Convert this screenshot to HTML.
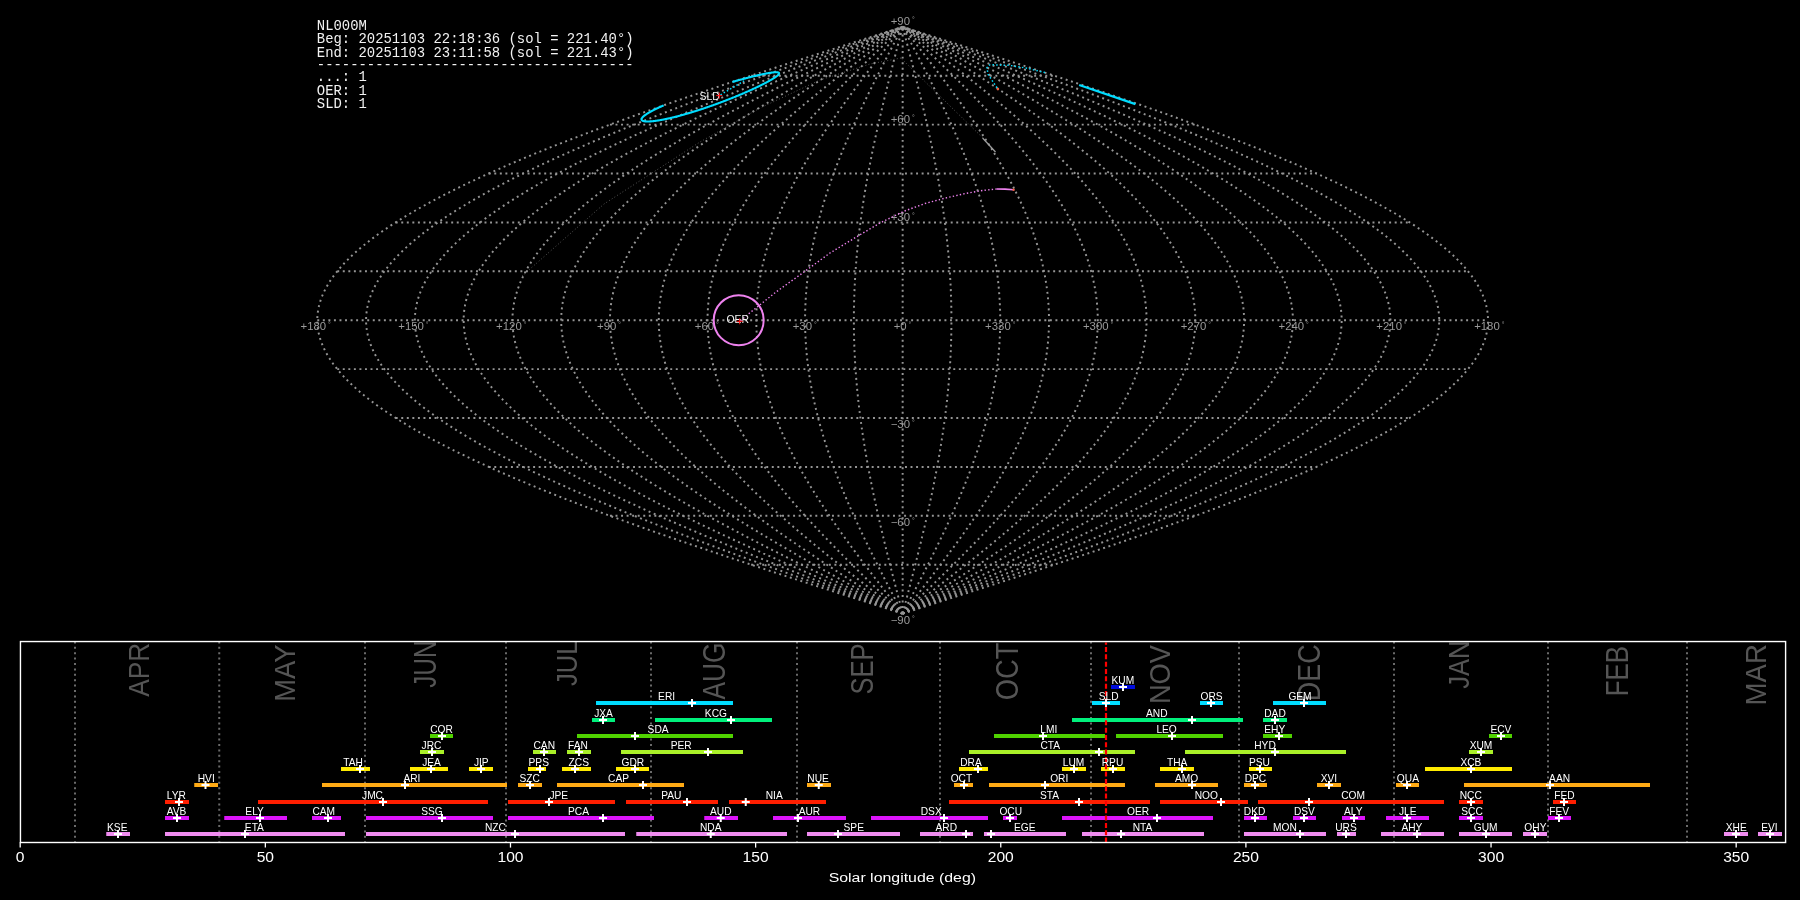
<!DOCTYPE html><html><head><meta charset="utf-8"><style>html,body{margin:0;padding:0;background:#000;width:1800px;height:900px;overflow:hidden}svg{display:block;will-change:transform}</style></head><body>
<svg width="1800" height="900" viewBox="0 0 1800 900">
<rect width="1800" height="900" fill="#000"/>
<g stroke="#959595" stroke-width="1.95" fill="none" stroke-dasharray="1.95 3.6">
<polyline points="902.65,613.60 907.76,611.97 912.87,610.34 917.97,608.71 923.08,607.08 928.18,605.45 933.29,603.82 938.39,602.19 943.48,600.56 948.58,598.93 953.67,597.30 958.75,595.67 963.84,594.04 968.91,592.41 973.99,590.78 979.05,589.15 984.12,587.52 989.17,585.89 994.22,584.26 999.26,582.63 1004.30,581.00 1009.32,579.37 1014.34,577.74 1019.35,576.11 1024.35,574.48 1029.35,572.85 1034.33,571.22 1039.30,569.59 1044.26,567.96 1049.21,566.33 1054.15,564.70 1059.08,563.07 1064.00,561.44 1068.90,559.81 1073.79,558.18 1078.67,556.55 1083.54,554.92 1088.39,553.29 1093.22,551.66 1098.05,550.03 1102.85,548.40 1107.65,546.77 1112.42,545.14 1117.19,543.51 1121.93,541.88 1126.66,540.25 1131.37,538.62 1136.06,536.99 1140.74,535.36 1145.39,533.73 1150.03,532.10 1154.65,530.47 1159.25,528.84 1163.84,527.21 1168.40,525.58 1172.94,523.95 1177.46,522.32 1181.96,520.69 1186.44,519.06 1190.90,517.43 1195.33,515.80 1199.74,514.17 1204.13,512.54 1208.50,510.91 1212.84,509.28 1217.16,507.65 1221.46,506.02 1225.73,504.39 1229.98,502.76 1234.20,501.13 1238.40,499.50 1242.57,497.87 1246.72,496.24 1250.84,494.61 1254.93,492.98 1258.99,491.35 1263.03,489.72 1267.05,488.09 1271.03,486.46 1274.98,484.83 1278.91,483.20 1282.81,481.57 1286.68,479.94 1290.52,478.31 1294.33,476.68 1298.11,475.05 1301.86,473.42 1305.59,471.79 1309.28,470.16 1312.93,468.53 1316.56,466.90 1320.16,465.27 1323.72,463.64 1327.26,462.01 1330.76,460.38 1334.22,458.75 1337.66,457.12 1341.06,455.49 1344.43,453.86 1347.76,452.23 1351.06,450.60 1354.33,448.97 1357.56,447.34 1360.76,445.71 1363.92,444.08 1367.05,442.45 1370.14,440.82 1373.20,439.19 1376.22,437.56 1379.20,435.93 1382.15,434.30 1385.06,432.67 1387.94,431.04 1390.77,429.41 1393.57,427.78 1396.34,426.15 1399.06,424.52 1401.75,422.89 1404.40,421.26 1407.01,419.63 1409.59,418.00 1412.12,416.37 1414.62,414.74 1417.07,413.11 1419.49,411.48 1421.87,409.85 1424.21,408.22 1426.51,406.59 1428.77,404.96 1430.99,403.33 1433.17,401.70 1435.30,400.07 1437.40,398.44 1439.46,396.81 1441.48,395.18 1443.45,393.55 1445.39,391.92 1447.28,390.29 1449.13,388.66 1450.94,387.03 1452.71,385.40 1454.43,383.77 1456.12,382.14 1457.76,380.51 1459.36,378.88 1460.92,377.25 1462.43,375.62 1463.90,373.99 1465.33,372.36 1466.72,370.73 1468.06,369.10 1469.36,367.47 1470.62,365.84 1471.84,364.21 1473.01,362.58 1474.13,360.95 1475.22,359.32 1476.26,357.69 1477.26,356.06 1478.21,354.43 1479.12,352.80 1479.98,351.17 1480.80,349.54 1481.58,347.91 1482.31,346.28 1483.00,344.65 1483.65,343.02 1484.25,341.39 1484.80,339.76 1485.32,338.13 1485.78,336.50 1486.21,334.87 1486.58,333.24 1486.92,331.61 1487.21,329.98 1487.45,328.35 1487.65,326.72 1487.81,325.09 1487.92,323.46 1487.99,321.83 1488.01,320.20 1487.99,318.57 1487.92,316.94 1487.81,315.31 1487.65,313.68 1487.45,312.05 1487.21,310.42 1486.92,308.79 1486.58,307.16 1486.21,305.53 1485.78,303.90 1485.32,302.27 1484.80,300.64 1484.25,299.01 1483.65,297.38 1483.00,295.75 1482.31,294.12 1481.58,292.49 1480.80,290.86 1479.98,289.23 1479.12,287.60 1478.21,285.97 1477.26,284.34 1476.26,282.71 1475.22,281.08 1474.13,279.45 1473.01,277.82 1471.84,276.19 1470.62,274.56 1469.36,272.93 1468.06,271.30 1466.72,269.67 1465.33,268.04 1463.90,266.41 1462.43,264.78 1460.92,263.15 1459.36,261.52 1457.76,259.89 1456.12,258.26 1454.43,256.63 1452.71,255.00 1450.94,253.37 1449.13,251.74 1447.28,250.11 1445.39,248.48 1443.45,246.85 1441.48,245.22 1439.46,243.59 1437.40,241.96 1435.30,240.33 1433.17,238.70 1430.99,237.07 1428.77,235.44 1426.51,233.81 1424.21,232.18 1421.87,230.55 1419.49,228.92 1417.07,227.29 1414.62,225.66 1412.12,224.03 1409.59,222.40 1407.01,220.77 1404.40,219.14 1401.75,217.51 1399.06,215.88 1396.34,214.25 1393.57,212.62 1390.77,210.99 1387.94,209.36 1385.06,207.73 1382.15,206.10 1379.20,204.47 1376.22,202.84 1373.20,201.21 1370.14,199.58 1367.05,197.95 1363.92,196.32 1360.76,194.69 1357.56,193.06 1354.33,191.43 1351.06,189.80 1347.76,188.17 1344.43,186.54 1341.06,184.91 1337.66,183.28 1334.22,181.65 1330.76,180.02 1327.26,178.39 1323.72,176.76 1320.16,175.13 1316.56,173.50 1312.93,171.87 1309.28,170.24 1305.59,168.61 1301.86,166.98 1298.11,165.35 1294.33,163.72 1290.52,162.09 1286.68,160.46 1282.81,158.83 1278.91,157.20 1274.98,155.57 1271.03,153.94 1267.05,152.31 1263.03,150.68 1258.99,149.05 1254.93,147.42 1250.84,145.79 1246.72,144.16 1242.57,142.53 1238.40,140.90 1234.20,139.27 1229.98,137.64 1225.73,136.01 1221.46,134.38 1217.16,132.75 1212.84,131.12 1208.50,129.49 1204.13,127.86 1199.74,126.23 1195.33,124.60 1190.90,122.97 1186.44,121.34 1181.96,119.71 1177.46,118.08 1172.94,116.45 1168.40,114.82 1163.84,113.19 1159.25,111.56 1154.65,109.93 1150.03,108.30 1145.39,106.67 1140.74,105.04 1136.06,103.41 1131.37,101.78 1126.66,100.15 1121.93,98.52 1117.19,96.89 1112.42,95.26 1107.65,93.63 1102.85,92.00 1098.05,90.37 1093.22,88.74 1088.39,87.11 1083.54,85.48 1078.67,83.85 1073.79,82.22 1068.90,80.59 1064.00,78.96 1059.08,77.33 1054.15,75.70 1049.21,74.07 1044.26,72.44 1039.30,70.81 1034.33,69.18 1029.35,67.55 1024.35,65.92 1019.35,64.29 1014.34,62.66 1009.32,61.03 1004.30,59.40 999.26,57.77 994.22,56.14 989.17,54.51 984.12,52.88 979.05,51.25 973.99,49.62 968.91,47.99 963.84,46.36 958.75,44.73 953.67,43.10 948.58,41.47 943.48,39.84 938.39,38.21 933.29,36.58 928.18,34.95 923.08,33.32 917.97,31.69 912.87,30.06 907.76,28.43 902.65,26.80"/>
<polyline points="902.65,613.60 907.33,611.97 912.01,610.34 916.70,608.71 921.38,607.08 926.06,605.45 930.73,603.82 935.41,602.19 940.08,600.56 944.75,598.93 949.42,597.30 954.08,595.67 958.74,594.04 963.39,592.41 968.04,590.78 972.69,589.15 977.33,587.52 981.96,585.89 986.59,584.26 991.21,582.63 995.83,581.00 1000.43,579.37 1005.03,577.74 1009.63,576.11 1014.21,574.48 1018.79,572.85 1023.35,571.22 1027.91,569.59 1032.46,567.96 1037.00,566.33 1041.53,564.70 1046.04,563.07 1050.55,561.44 1055.05,559.81 1059.53,558.18 1064.00,556.55 1068.46,554.92 1072.91,553.29 1077.34,551.66 1081.76,550.03 1086.17,548.40 1090.56,546.77 1094.94,545.14 1099.31,543.51 1103.66,541.88 1107.99,540.25 1112.31,538.62 1116.61,536.99 1120.90,535.36 1125.17,533.73 1129.42,532.10 1133.65,530.47 1137.87,528.84 1142.07,527.21 1146.25,525.58 1150.42,523.95 1154.56,522.32 1158.68,520.69 1162.79,519.06 1166.87,517.43 1170.94,515.80 1174.98,514.17 1179.01,512.54 1183.01,510.91 1186.99,509.28 1190.95,507.65 1194.89,506.02 1198.81,504.39 1202.70,502.76 1206.57,501.13 1210.42,499.50 1214.24,497.87 1218.04,496.24 1221.82,494.61 1225.57,492.98 1229.30,491.35 1233.00,489.72 1236.68,488.09 1240.33,486.46 1243.96,484.83 1247.56,483.20 1251.13,481.57 1254.68,479.94 1258.20,478.31 1261.69,476.68 1265.16,475.05 1268.60,473.42 1272.01,471.79 1275.39,470.16 1278.74,468.53 1282.07,466.90 1285.37,465.27 1288.63,463.64 1291.87,462.01 1295.08,460.38 1298.26,458.75 1301.41,457.12 1304.52,455.49 1307.61,453.86 1310.67,452.23 1313.69,450.60 1316.69,448.97 1319.65,447.34 1322.58,445.71 1325.48,444.08 1328.35,442.45 1331.18,440.82 1333.98,439.19 1336.75,437.56 1339.49,435.93 1342.19,434.30 1344.86,432.67 1347.49,431.04 1350.10,429.41 1352.66,427.78 1355.20,426.15 1357.70,424.52 1360.16,422.89 1362.59,421.26 1364.98,419.63 1367.34,418.00 1369.67,416.37 1371.95,414.74 1374.21,413.11 1376.42,411.48 1378.60,409.85 1380.75,408.22 1382.85,406.59 1384.92,404.96 1386.96,403.33 1388.96,401.70 1390.92,400.07 1392.84,398.44 1394.73,396.81 1396.57,395.18 1398.39,393.55 1400.16,391.92 1401.89,390.29 1403.59,388.66 1405.25,387.03 1406.87,385.40 1408.45,383.77 1410.00,382.14 1411.50,380.51 1412.97,378.88 1414.40,377.25 1415.78,375.62 1417.13,373.99 1418.44,372.36 1419.71,370.73 1420.95,369.10 1422.14,367.47 1423.29,365.84 1424.40,364.21 1425.48,362.58 1426.51,360.95 1427.50,359.32 1428.46,357.69 1429.37,356.06 1430.24,354.43 1431.08,352.80 1431.87,351.17 1432.62,349.54 1433.34,347.91 1434.01,346.28 1434.64,344.65 1435.23,343.02 1435.78,341.39 1436.29,339.76 1436.76,338.13 1437.19,336.50 1437.58,334.87 1437.92,333.24 1438.23,331.61 1438.49,329.98 1438.72,328.35 1438.90,326.72 1439.05,325.09 1439.15,323.46 1439.21,321.83 1439.23,320.20 1439.21,318.57 1439.15,316.94 1439.05,315.31 1438.90,313.68 1438.72,312.05 1438.49,310.42 1438.23,308.79 1437.92,307.16 1437.58,305.53 1437.19,303.90 1436.76,302.27 1436.29,300.64 1435.78,299.01 1435.23,297.38 1434.64,295.75 1434.01,294.12 1433.34,292.49 1432.62,290.86 1431.87,289.23 1431.08,287.60 1430.24,285.97 1429.37,284.34 1428.46,282.71 1427.50,281.08 1426.51,279.45 1425.48,277.82 1424.40,276.19 1423.29,274.56 1422.14,272.93 1420.95,271.30 1419.71,269.67 1418.44,268.04 1417.13,266.41 1415.78,264.78 1414.40,263.15 1412.97,261.52 1411.50,259.89 1410.00,258.26 1408.45,256.63 1406.87,255.00 1405.25,253.37 1403.59,251.74 1401.89,250.11 1400.16,248.48 1398.39,246.85 1396.57,245.22 1394.73,243.59 1392.84,241.96 1390.92,240.33 1388.96,238.70 1386.96,237.07 1384.92,235.44 1382.85,233.81 1380.75,232.18 1378.60,230.55 1376.42,228.92 1374.21,227.29 1371.95,225.66 1369.67,224.03 1367.34,222.40 1364.98,220.77 1362.59,219.14 1360.16,217.51 1357.70,215.88 1355.20,214.25 1352.66,212.62 1350.10,210.99 1347.49,209.36 1344.86,207.73 1342.19,206.10 1339.49,204.47 1336.75,202.84 1333.98,201.21 1331.18,199.58 1328.35,197.95 1325.48,196.32 1322.58,194.69 1319.65,193.06 1316.69,191.43 1313.69,189.80 1310.67,188.17 1307.61,186.54 1304.52,184.91 1301.41,183.28 1298.26,181.65 1295.08,180.02 1291.87,178.39 1288.63,176.76 1285.37,175.13 1282.07,173.50 1278.74,171.87 1275.39,170.24 1272.01,168.61 1268.60,166.98 1265.16,165.35 1261.69,163.72 1258.20,162.09 1254.68,160.46 1251.13,158.83 1247.56,157.20 1243.96,155.57 1240.33,153.94 1236.68,152.31 1233.00,150.68 1229.30,149.05 1225.57,147.42 1221.82,145.79 1218.04,144.16 1214.24,142.53 1210.42,140.90 1206.57,139.27 1202.70,137.64 1198.81,136.01 1194.89,134.38 1190.95,132.75 1186.99,131.12 1183.01,129.49 1179.01,127.86 1174.98,126.23 1170.94,124.60 1166.87,122.97 1162.79,121.34 1158.68,119.71 1154.56,118.08 1150.42,116.45 1146.25,114.82 1142.07,113.19 1137.87,111.56 1133.65,109.93 1129.42,108.30 1125.17,106.67 1120.90,105.04 1116.61,103.41 1112.31,101.78 1107.99,100.15 1103.66,98.52 1099.31,96.89 1094.94,95.26 1090.56,93.63 1086.17,92.00 1081.76,90.37 1077.34,88.74 1072.91,87.11 1068.46,85.48 1064.00,83.85 1059.53,82.22 1055.05,80.59 1050.55,78.96 1046.04,77.33 1041.53,75.70 1037.00,74.07 1032.46,72.44 1027.91,70.81 1023.35,69.18 1018.79,67.55 1014.21,65.92 1009.63,64.29 1005.03,62.66 1000.43,61.03 995.83,59.40 991.21,57.77 986.59,56.14 981.96,54.51 977.33,52.88 972.69,51.25 968.04,49.62 963.39,47.99 958.74,46.36 954.08,44.73 949.42,43.10 944.75,41.47 940.08,39.84 935.41,38.21 930.73,36.58 926.06,34.95 921.38,33.32 916.70,31.69 912.01,30.06 907.33,28.43 902.65,26.80"/>
<polyline points="902.65,613.60 906.91,611.97 911.16,610.34 915.42,608.71 919.67,607.08 923.93,605.45 928.18,603.82 932.43,602.19 936.68,600.56 940.92,598.93 945.16,597.30 949.40,595.67 953.64,594.04 957.87,592.41 962.10,590.78 966.32,589.15 970.54,587.52 974.75,585.89 978.96,584.26 983.16,582.63 987.36,581.00 991.54,579.37 995.73,577.74 999.90,576.11 1004.07,574.48 1008.23,572.85 1012.38,571.22 1016.52,569.59 1020.66,567.96 1024.79,566.33 1028.90,564.70 1033.01,563.07 1037.11,561.44 1041.19,559.81 1045.27,558.18 1049.33,556.55 1053.39,554.92 1057.43,553.29 1061.46,551.66 1065.48,550.03 1069.49,548.40 1073.48,546.77 1077.46,545.14 1081.43,543.51 1085.38,541.88 1089.32,540.25 1093.25,538.62 1097.16,536.99 1101.06,535.36 1104.94,533.73 1108.80,532.10 1112.65,530.47 1116.49,528.84 1120.31,527.21 1124.11,525.58 1127.89,523.95 1131.66,522.32 1135.41,520.69 1139.14,519.06 1142.85,517.43 1146.55,515.80 1150.23,514.17 1153.89,512.54 1157.52,510.91 1161.14,509.28 1164.74,507.65 1168.32,506.02 1171.88,504.39 1175.42,502.76 1178.94,501.13 1182.44,499.50 1185.92,497.87 1189.37,496.24 1192.80,494.61 1196.22,492.98 1199.60,491.35 1202.97,489.72 1206.31,488.09 1209.63,486.46 1212.93,484.83 1216.20,483.20 1219.45,481.57 1222.68,479.94 1225.88,478.31 1229.05,476.68 1232.20,475.05 1235.33,473.42 1238.43,471.79 1241.50,470.16 1244.55,468.53 1247.58,466.90 1250.57,465.27 1253.54,463.64 1256.49,462.01 1259.40,460.38 1262.29,458.75 1265.16,457.12 1267.99,455.49 1270.80,453.86 1273.58,452.23 1276.33,450.60 1279.05,448.97 1281.74,447.34 1284.41,445.71 1287.04,444.08 1289.65,442.45 1292.22,440.82 1294.77,439.19 1297.29,437.56 1299.78,435.93 1302.23,434.30 1304.66,432.67 1307.05,431.04 1309.42,429.41 1311.75,427.78 1314.06,426.15 1316.33,424.52 1318.57,422.89 1320.78,421.26 1322.95,419.63 1325.10,418.00 1327.21,416.37 1329.29,414.74 1331.34,413.11 1333.35,411.48 1335.33,409.85 1337.28,408.22 1339.20,406.59 1341.08,404.96 1342.93,403.33 1344.75,401.70 1346.53,400.07 1348.28,398.44 1349.99,396.81 1351.67,395.18 1353.32,393.55 1354.93,391.92 1356.51,390.29 1358.05,388.66 1359.56,387.03 1361.03,385.40 1362.47,383.77 1363.87,382.14 1365.24,380.51 1366.58,378.88 1367.87,377.25 1369.14,375.62 1370.36,373.99 1371.55,372.36 1372.71,370.73 1373.83,369.10 1374.91,367.47 1375.96,365.84 1376.97,364.21 1377.95,362.58 1378.89,360.95 1379.79,359.32 1380.66,357.69 1381.49,356.06 1382.28,354.43 1383.04,352.80 1383.76,351.17 1384.44,349.54 1385.09,347.91 1385.70,346.28 1386.28,344.65 1386.81,343.02 1387.31,341.39 1387.78,339.76 1388.20,338.13 1388.59,336.50 1388.95,334.87 1389.26,333.24 1389.54,331.61 1389.78,329.98 1389.99,328.35 1390.15,326.72 1390.28,325.09 1390.38,323.46 1390.43,321.83 1390.45,320.20 1390.43,318.57 1390.38,316.94 1390.28,315.31 1390.15,313.68 1389.99,312.05 1389.78,310.42 1389.54,308.79 1389.26,307.16 1388.95,305.53 1388.59,303.90 1388.20,302.27 1387.78,300.64 1387.31,299.01 1386.81,297.38 1386.28,295.75 1385.70,294.12 1385.09,292.49 1384.44,290.86 1383.76,289.23 1383.04,287.60 1382.28,285.97 1381.49,284.34 1380.66,282.71 1379.79,281.08 1378.89,279.45 1377.95,277.82 1376.97,276.19 1375.96,274.56 1374.91,272.93 1373.83,271.30 1372.71,269.67 1371.55,268.04 1370.36,266.41 1369.14,264.78 1367.87,263.15 1366.58,261.52 1365.24,259.89 1363.87,258.26 1362.47,256.63 1361.03,255.00 1359.56,253.37 1358.05,251.74 1356.51,250.11 1354.93,248.48 1353.32,246.85 1351.67,245.22 1349.99,243.59 1348.28,241.96 1346.53,240.33 1344.75,238.70 1342.93,237.07 1341.08,235.44 1339.20,233.81 1337.28,232.18 1335.33,230.55 1333.35,228.92 1331.34,227.29 1329.29,225.66 1327.21,224.03 1325.10,222.40 1322.95,220.77 1320.78,219.14 1318.57,217.51 1316.33,215.88 1314.06,214.25 1311.75,212.62 1309.42,210.99 1307.05,209.36 1304.66,207.73 1302.23,206.10 1299.78,204.47 1297.29,202.84 1294.77,201.21 1292.22,199.58 1289.65,197.95 1287.04,196.32 1284.41,194.69 1281.74,193.06 1279.05,191.43 1276.33,189.80 1273.58,188.17 1270.80,186.54 1267.99,184.91 1265.16,183.28 1262.29,181.65 1259.40,180.02 1256.49,178.39 1253.54,176.76 1250.57,175.13 1247.58,173.50 1244.55,171.87 1241.50,170.24 1238.43,168.61 1235.33,166.98 1232.20,165.35 1229.05,163.72 1225.88,162.09 1222.68,160.46 1219.45,158.83 1216.20,157.20 1212.93,155.57 1209.63,153.94 1206.31,152.31 1202.97,150.68 1199.60,149.05 1196.22,147.42 1192.80,145.79 1189.37,144.16 1185.92,142.53 1182.44,140.90 1178.94,139.27 1175.42,137.64 1171.88,136.01 1168.32,134.38 1164.74,132.75 1161.14,131.12 1157.52,129.49 1153.89,127.86 1150.23,126.23 1146.55,124.60 1142.85,122.97 1139.14,121.34 1135.41,119.71 1131.66,118.08 1127.89,116.45 1124.11,114.82 1120.31,113.19 1116.49,111.56 1112.65,109.93 1108.80,108.30 1104.94,106.67 1101.06,105.04 1097.16,103.41 1093.25,101.78 1089.32,100.15 1085.38,98.52 1081.43,96.89 1077.46,95.26 1073.48,93.63 1069.49,92.00 1065.48,90.37 1061.46,88.74 1057.43,87.11 1053.39,85.48 1049.33,83.85 1045.27,82.22 1041.19,80.59 1037.11,78.96 1033.01,77.33 1028.90,75.70 1024.79,74.07 1020.66,72.44 1016.52,70.81 1012.38,69.18 1008.23,67.55 1004.07,65.92 999.90,64.29 995.73,62.66 991.54,61.03 987.36,59.40 983.16,57.77 978.96,56.14 974.75,54.51 970.54,52.88 966.32,51.25 962.10,49.62 957.87,47.99 953.64,46.36 949.40,44.73 945.16,43.10 940.92,41.47 936.68,39.84 932.43,38.21 928.18,36.58 923.93,34.95 919.67,33.32 915.42,31.69 911.16,30.06 906.91,28.43 902.65,26.80"/>
<polyline points="902.65,613.60 906.48,611.97 910.31,610.34 914.14,608.71 917.97,607.08 921.80,605.45 925.63,603.82 929.45,602.19 933.27,600.56 937.10,598.93 940.91,597.30 944.73,595.67 948.54,594.04 952.35,592.41 956.15,590.78 959.95,589.15 963.75,587.52 967.54,585.89 971.33,584.26 975.11,582.63 978.89,581.00 982.66,579.37 986.42,577.74 990.18,576.11 993.93,574.48 997.67,572.85 1001.41,571.22 1005.14,569.59 1008.86,567.96 1012.57,566.33 1016.28,564.70 1019.97,563.07 1023.66,561.44 1027.34,559.81 1031.01,558.18 1034.67,556.55 1038.31,554.92 1041.95,553.29 1045.58,551.66 1049.20,550.03 1052.80,548.40 1056.40,546.77 1059.98,545.14 1063.55,543.51 1067.11,541.88 1070.66,540.25 1074.19,538.62 1077.71,536.99 1081.22,535.36 1084.71,533.73 1088.19,532.10 1091.65,530.47 1095.10,528.84 1098.54,527.21 1101.96,525.58 1105.37,523.95 1108.76,522.32 1112.13,520.69 1115.49,519.06 1118.83,517.43 1122.16,515.80 1125.47,514.17 1128.76,512.54 1132.04,510.91 1135.30,509.28 1138.54,507.65 1141.76,506.02 1144.96,504.39 1148.15,502.76 1151.31,501.13 1154.46,499.50 1157.59,497.87 1160.70,496.24 1163.79,494.61 1166.86,492.98 1169.91,491.35 1172.94,489.72 1175.95,488.09 1178.93,486.46 1181.90,484.83 1184.85,483.20 1187.77,481.57 1190.67,479.94 1193.55,478.31 1196.41,476.68 1199.25,475.05 1202.06,473.42 1204.85,471.79 1207.62,470.16 1210.36,468.53 1213.08,466.90 1215.78,465.27 1218.45,463.64 1221.10,462.01 1223.73,460.38 1226.33,458.75 1228.91,457.12 1231.46,455.49 1233.98,453.86 1236.48,452.23 1238.96,450.60 1241.41,448.97 1243.83,447.34 1246.23,445.71 1248.60,444.08 1250.95,442.45 1253.27,440.82 1255.56,439.19 1257.82,437.56 1260.06,435.93 1262.27,434.30 1264.46,432.67 1266.61,431.04 1268.74,429.41 1270.84,427.78 1272.92,426.15 1274.96,424.52 1276.98,422.89 1278.96,421.26 1280.92,419.63 1282.85,418.00 1284.75,416.37 1286.63,414.74 1288.47,413.11 1290.28,411.48 1292.07,409.85 1293.82,408.22 1295.54,406.59 1297.24,404.96 1298.90,403.33 1300.54,401.70 1302.14,400.07 1303.71,398.44 1305.26,396.81 1306.77,395.18 1308.25,393.55 1309.70,391.92 1311.12,390.29 1312.51,388.66 1313.87,387.03 1315.19,385.40 1316.49,383.77 1317.75,382.14 1318.98,380.51 1320.18,378.88 1321.35,377.25 1322.49,375.62 1323.59,373.99 1324.66,372.36 1325.70,370.73 1326.71,369.10 1327.69,367.47 1328.63,365.84 1329.54,364.21 1330.42,362.58 1331.26,360.95 1332.08,359.32 1332.86,357.69 1333.60,356.06 1334.32,354.43 1335.00,352.80 1335.65,351.17 1336.26,349.54 1336.85,347.91 1337.40,346.28 1337.91,344.65 1338.40,343.02 1338.85,341.39 1339.27,339.76 1339.65,338.13 1340.00,336.50 1340.32,334.87 1340.60,333.24 1340.85,331.61 1341.07,329.98 1341.25,328.35 1341.40,326.72 1341.52,325.09 1341.60,323.46 1341.65,321.83 1341.67,320.20 1341.65,318.57 1341.60,316.94 1341.52,315.31 1341.40,313.68 1341.25,312.05 1341.07,310.42 1340.85,308.79 1340.60,307.16 1340.32,305.53 1340.00,303.90 1339.65,302.27 1339.27,300.64 1338.85,299.01 1338.40,297.38 1337.91,295.75 1337.40,294.12 1336.85,292.49 1336.26,290.86 1335.65,289.23 1335.00,287.60 1334.32,285.97 1333.60,284.34 1332.86,282.71 1332.08,281.08 1331.26,279.45 1330.42,277.82 1329.54,276.19 1328.63,274.56 1327.69,272.93 1326.71,271.30 1325.70,269.67 1324.66,268.04 1323.59,266.41 1322.49,264.78 1321.35,263.15 1320.18,261.52 1318.98,259.89 1317.75,258.26 1316.49,256.63 1315.19,255.00 1313.87,253.37 1312.51,251.74 1311.12,250.11 1309.70,248.48 1308.25,246.85 1306.77,245.22 1305.26,243.59 1303.71,241.96 1302.14,240.33 1300.54,238.70 1298.90,237.07 1297.24,235.44 1295.54,233.81 1293.82,232.18 1292.07,230.55 1290.28,228.92 1288.47,227.29 1286.63,225.66 1284.75,224.03 1282.85,222.40 1280.92,220.77 1278.96,219.14 1276.98,217.51 1274.96,215.88 1272.92,214.25 1270.84,212.62 1268.74,210.99 1266.61,209.36 1264.46,207.73 1262.27,206.10 1260.06,204.47 1257.82,202.84 1255.56,201.21 1253.27,199.58 1250.95,197.95 1248.60,196.32 1246.23,194.69 1243.83,193.06 1241.41,191.43 1238.96,189.80 1236.48,188.17 1233.98,186.54 1231.46,184.91 1228.91,183.28 1226.33,181.65 1223.73,180.02 1221.10,178.39 1218.45,176.76 1215.78,175.13 1213.08,173.50 1210.36,171.87 1207.62,170.24 1204.85,168.61 1202.06,166.98 1199.25,165.35 1196.41,163.72 1193.55,162.09 1190.67,160.46 1187.77,158.83 1184.85,157.20 1181.90,155.57 1178.93,153.94 1175.95,152.31 1172.94,150.68 1169.91,149.05 1166.86,147.42 1163.79,145.79 1160.70,144.16 1157.59,142.53 1154.46,140.90 1151.31,139.27 1148.15,137.64 1144.96,136.01 1141.76,134.38 1138.54,132.75 1135.30,131.12 1132.04,129.49 1128.76,127.86 1125.47,126.23 1122.16,124.60 1118.83,122.97 1115.49,121.34 1112.13,119.71 1108.76,118.08 1105.37,116.45 1101.96,114.82 1098.54,113.19 1095.10,111.56 1091.65,109.93 1088.19,108.30 1084.71,106.67 1081.22,105.04 1077.71,103.41 1074.19,101.78 1070.66,100.15 1067.11,98.52 1063.55,96.89 1059.98,95.26 1056.40,93.63 1052.80,92.00 1049.20,90.37 1045.58,88.74 1041.95,87.11 1038.31,85.48 1034.67,83.85 1031.01,82.22 1027.34,80.59 1023.66,78.96 1019.97,77.33 1016.28,75.70 1012.57,74.07 1008.86,72.44 1005.14,70.81 1001.41,69.18 997.67,67.55 993.93,65.92 990.18,64.29 986.42,62.66 982.66,61.03 978.89,59.40 975.11,57.77 971.33,56.14 967.54,54.51 963.75,52.88 959.95,51.25 956.15,49.62 952.35,47.99 948.54,46.36 944.73,44.73 940.91,43.10 937.10,41.47 933.27,39.84 929.45,38.21 925.63,36.58 921.80,34.95 917.97,33.32 914.14,31.69 910.31,30.06 906.48,28.43 902.65,26.80"/>
<polyline points="902.65,613.60 906.06,611.97 909.46,610.34 912.87,608.71 916.27,607.08 919.67,605.45 923.07,603.82 926.47,602.19 929.87,600.56 933.27,598.93 936.66,597.30 940.05,595.67 943.44,594.04 946.83,592.41 950.21,590.78 953.59,589.15 956.96,587.52 960.33,585.89 963.70,584.26 967.06,582.63 970.41,581.00 973.77,579.37 977.11,577.74 980.45,576.11 983.79,574.48 987.11,572.85 990.43,571.22 993.75,569.59 997.06,567.96 1000.36,566.33 1003.65,564.70 1006.94,563.07 1010.21,561.44 1013.48,559.81 1016.75,558.18 1020.00,556.55 1023.24,554.92 1026.47,553.29 1029.70,551.66 1032.91,550.03 1036.12,548.40 1039.31,546.77 1042.50,545.14 1045.67,543.51 1048.84,541.88 1051.99,540.25 1055.13,538.62 1058.26,536.99 1061.37,535.36 1064.48,533.73 1067.57,532.10 1070.65,530.47 1073.72,528.84 1076.77,527.21 1079.82,525.58 1082.84,523.95 1085.86,522.32 1088.86,520.69 1091.84,519.06 1094.81,517.43 1097.77,515.80 1100.71,514.17 1103.64,512.54 1106.55,510.91 1109.45,509.28 1112.33,507.65 1115.19,506.02 1118.04,504.39 1120.87,502.76 1123.68,501.13 1126.48,499.50 1129.26,497.87 1132.03,496.24 1134.77,494.61 1137.50,492.98 1140.21,491.35 1142.91,489.72 1145.58,488.09 1148.24,486.46 1150.87,484.83 1153.49,483.20 1156.09,481.57 1158.67,479.94 1161.23,478.31 1163.77,476.68 1166.29,475.05 1168.79,473.42 1171.27,471.79 1173.73,470.16 1176.17,468.53 1178.59,466.90 1180.99,465.27 1183.37,463.64 1185.72,462.01 1188.05,460.38 1190.37,458.75 1192.65,457.12 1194.92,455.49 1197.17,453.86 1199.39,452.23 1201.59,450.60 1203.77,448.97 1205.92,447.34 1208.06,445.71 1210.16,444.08 1212.25,442.45 1214.31,440.82 1216.35,439.19 1218.36,437.56 1220.35,435.93 1222.32,434.30 1224.26,432.67 1226.17,431.04 1228.07,429.41 1229.93,427.78 1231.78,426.15 1233.59,424.52 1235.38,422.89 1237.15,421.26 1238.89,419.63 1240.61,418.00 1242.30,416.37 1243.96,414.74 1245.60,413.11 1247.21,411.48 1248.80,409.85 1250.36,408.22 1251.89,406.59 1253.40,404.96 1254.87,403.33 1256.33,401.70 1257.75,400.07 1259.15,398.44 1260.52,396.81 1261.87,395.18 1263.18,393.55 1264.47,391.92 1265.74,390.29 1266.97,388.66 1268.18,387.03 1269.36,385.40 1270.51,383.77 1271.63,382.14 1272.72,380.51 1273.79,378.88 1274.83,377.25 1275.84,375.62 1276.82,373.99 1277.77,372.36 1278.70,370.73 1279.59,369.10 1280.46,367.47 1281.30,365.84 1282.11,364.21 1282.89,362.58 1283.64,360.95 1284.36,359.32 1285.06,357.69 1285.72,356.06 1286.36,354.43 1286.96,352.80 1287.54,351.17 1288.09,349.54 1288.60,347.91 1289.09,346.28 1289.55,344.65 1289.98,343.02 1290.38,341.39 1290.75,339.76 1291.09,338.13 1291.41,336.50 1291.69,334.87 1291.94,333.24 1292.16,331.61 1292.36,329.98 1292.52,328.35 1292.65,326.72 1292.76,325.09 1292.83,323.46 1292.88,321.83 1292.89,320.20 1292.88,318.57 1292.83,316.94 1292.76,315.31 1292.65,313.68 1292.52,312.05 1292.36,310.42 1292.16,308.79 1291.94,307.16 1291.69,305.53 1291.41,303.90 1291.09,302.27 1290.75,300.64 1290.38,299.01 1289.98,297.38 1289.55,295.75 1289.09,294.12 1288.60,292.49 1288.09,290.86 1287.54,289.23 1286.96,287.60 1286.36,285.97 1285.72,284.34 1285.06,282.71 1284.36,281.08 1283.64,279.45 1282.89,277.82 1282.11,276.19 1281.30,274.56 1280.46,272.93 1279.59,271.30 1278.70,269.67 1277.77,268.04 1276.82,266.41 1275.84,264.78 1274.83,263.15 1273.79,261.52 1272.72,259.89 1271.63,258.26 1270.51,256.63 1269.36,255.00 1268.18,253.37 1266.97,251.74 1265.74,250.11 1264.47,248.48 1263.18,246.85 1261.87,245.22 1260.52,243.59 1259.15,241.96 1257.75,240.33 1256.33,238.70 1254.87,237.07 1253.40,235.44 1251.89,233.81 1250.36,232.18 1248.80,230.55 1247.21,228.92 1245.60,227.29 1243.96,225.66 1242.30,224.03 1240.61,222.40 1238.89,220.77 1237.15,219.14 1235.38,217.51 1233.59,215.88 1231.78,214.25 1229.93,212.62 1228.07,210.99 1226.17,209.36 1224.26,207.73 1222.32,206.10 1220.35,204.47 1218.36,202.84 1216.35,201.21 1214.31,199.58 1212.25,197.95 1210.16,196.32 1208.06,194.69 1205.92,193.06 1203.77,191.43 1201.59,189.80 1199.39,188.17 1197.17,186.54 1194.92,184.91 1192.65,183.28 1190.37,181.65 1188.05,180.02 1185.72,178.39 1183.37,176.76 1180.99,175.13 1178.59,173.50 1176.17,171.87 1173.73,170.24 1171.27,168.61 1168.79,166.98 1166.29,165.35 1163.77,163.72 1161.23,162.09 1158.67,160.46 1156.09,158.83 1153.49,157.20 1150.87,155.57 1148.24,153.94 1145.58,152.31 1142.91,150.68 1140.21,149.05 1137.50,147.42 1134.77,145.79 1132.03,144.16 1129.26,142.53 1126.48,140.90 1123.68,139.27 1120.87,137.64 1118.04,136.01 1115.19,134.38 1112.33,132.75 1109.45,131.12 1106.55,129.49 1103.64,127.86 1100.71,126.23 1097.77,124.60 1094.81,122.97 1091.84,121.34 1088.86,119.71 1085.86,118.08 1082.84,116.45 1079.82,114.82 1076.77,113.19 1073.72,111.56 1070.65,109.93 1067.57,108.30 1064.48,106.67 1061.37,105.04 1058.26,103.41 1055.13,101.78 1051.99,100.15 1048.84,98.52 1045.67,96.89 1042.50,95.26 1039.31,93.63 1036.12,92.00 1032.91,90.37 1029.70,88.74 1026.47,87.11 1023.24,85.48 1020.00,83.85 1016.75,82.22 1013.48,80.59 1010.21,78.96 1006.94,77.33 1003.65,75.70 1000.36,74.07 997.06,72.44 993.75,70.81 990.43,69.18 987.11,67.55 983.79,65.92 980.45,64.29 977.11,62.66 973.77,61.03 970.41,59.40 967.06,57.77 963.70,56.14 960.33,54.51 956.96,52.88 953.59,51.25 950.21,49.62 946.83,47.99 943.44,46.36 940.05,44.73 936.66,43.10 933.27,41.47 929.87,39.84 926.47,38.21 923.07,36.58 919.67,34.95 916.27,33.32 912.87,31.69 909.46,30.06 906.06,28.43 902.65,26.80"/>
<polyline points="902.65,613.60 905.63,611.97 908.61,610.34 911.59,608.71 914.57,607.08 917.54,605.45 920.52,603.82 923.50,602.19 926.47,600.56 929.44,598.93 932.41,597.30 935.38,595.67 938.34,594.04 941.30,592.41 944.26,590.78 947.22,589.15 950.17,587.52 953.12,585.89 956.07,584.26 959.01,582.63 961.94,581.00 964.88,579.37 967.80,577.74 970.73,576.11 973.64,574.48 976.56,572.85 979.46,571.22 982.36,569.59 985.26,567.96 988.14,566.33 991.03,564.70 993.90,563.07 996.77,561.44 999.63,559.81 1002.48,558.18 1005.33,556.55 1008.17,554.92 1011.00,553.29 1013.82,551.66 1016.63,550.03 1019.44,548.40 1022.23,546.77 1025.02,545.14 1027.80,543.51 1030.56,541.88 1033.32,540.25 1036.07,538.62 1038.81,536.99 1041.53,535.36 1044.25,533.73 1046.96,532.10 1049.65,530.47 1052.34,528.84 1055.01,527.21 1057.67,525.58 1060.32,523.95 1062.96,522.32 1065.58,520.69 1068.19,519.06 1070.79,517.43 1073.38,515.80 1075.95,514.17 1078.51,512.54 1081.06,510.91 1083.60,509.28 1086.12,507.65 1088.62,506.02 1091.11,504.39 1093.59,502.76 1096.06,501.13 1098.50,499.50 1100.94,497.87 1103.36,496.24 1105.76,494.61 1108.15,492.98 1110.52,491.35 1112.87,489.72 1115.21,488.09 1117.54,486.46 1119.85,484.83 1122.14,483.20 1124.41,481.57 1126.67,479.94 1128.91,478.31 1131.13,476.68 1133.34,475.05 1135.53,473.42 1137.70,471.79 1139.85,470.16 1141.98,468.53 1144.10,466.90 1146.20,465.27 1148.28,463.64 1150.34,462.01 1152.38,460.38 1154.40,458.75 1156.40,457.12 1158.39,455.49 1160.35,453.86 1162.30,452.23 1164.22,450.60 1166.13,448.97 1168.01,447.34 1169.88,445.71 1171.72,444.08 1173.55,442.45 1175.35,440.82 1177.13,439.19 1178.90,437.56 1180.64,435.93 1182.36,434.30 1184.06,432.67 1185.73,431.04 1187.39,429.41 1189.02,427.78 1190.63,426.15 1192.22,424.52 1193.79,422.89 1195.34,421.26 1196.86,419.63 1198.36,418.00 1199.84,416.37 1201.30,414.74 1202.73,413.11 1204.14,411.48 1205.53,409.85 1206.89,408.22 1208.23,406.59 1209.55,404.96 1210.85,403.33 1212.12,401.70 1213.37,400.07 1214.59,398.44 1215.79,396.81 1216.97,395.18 1218.12,393.55 1219.25,391.92 1220.35,390.29 1221.43,388.66 1222.49,387.03 1223.52,385.40 1224.52,383.77 1225.51,382.14 1226.46,380.51 1227.40,378.88 1228.31,377.25 1229.19,375.62 1230.05,373.99 1230.88,372.36 1231.69,370.73 1232.48,369.10 1233.23,367.47 1233.97,365.84 1234.68,364.21 1235.36,362.58 1236.02,360.95 1236.65,359.32 1237.26,357.69 1237.84,356.06 1238.39,354.43 1238.92,352.80 1239.43,351.17 1239.91,349.54 1240.36,347.91 1240.79,346.28 1241.19,344.65 1241.56,343.02 1241.92,341.39 1242.24,339.76 1242.54,338.13 1242.81,336.50 1243.06,334.87 1243.28,333.24 1243.47,331.61 1243.64,329.98 1243.79,328.35 1243.90,326.72 1243.99,325.09 1244.06,323.46 1244.10,321.83 1244.11,320.20 1244.10,318.57 1244.06,316.94 1243.99,315.31 1243.90,313.68 1243.79,312.05 1243.64,310.42 1243.47,308.79 1243.28,307.16 1243.06,305.53 1242.81,303.90 1242.54,302.27 1242.24,300.64 1241.92,299.01 1241.56,297.38 1241.19,295.75 1240.79,294.12 1240.36,292.49 1239.91,290.86 1239.43,289.23 1238.92,287.60 1238.39,285.97 1237.84,284.34 1237.26,282.71 1236.65,281.08 1236.02,279.45 1235.36,277.82 1234.68,276.19 1233.97,274.56 1233.23,272.93 1232.48,271.30 1231.69,269.67 1230.88,268.04 1230.05,266.41 1229.19,264.78 1228.31,263.15 1227.40,261.52 1226.46,259.89 1225.51,258.26 1224.52,256.63 1223.52,255.00 1222.49,253.37 1221.43,251.74 1220.35,250.11 1219.25,248.48 1218.12,246.85 1216.97,245.22 1215.79,243.59 1214.59,241.96 1213.37,240.33 1212.12,238.70 1210.85,237.07 1209.55,235.44 1208.23,233.81 1206.89,232.18 1205.53,230.55 1204.14,228.92 1202.73,227.29 1201.30,225.66 1199.84,224.03 1198.36,222.40 1196.86,220.77 1195.34,219.14 1193.79,217.51 1192.22,215.88 1190.63,214.25 1189.02,212.62 1187.39,210.99 1185.73,209.36 1184.06,207.73 1182.36,206.10 1180.64,204.47 1178.90,202.84 1177.13,201.21 1175.35,199.58 1173.55,197.95 1171.72,196.32 1169.88,194.69 1168.01,193.06 1166.13,191.43 1164.22,189.80 1162.30,188.17 1160.35,186.54 1158.39,184.91 1156.40,183.28 1154.40,181.65 1152.38,180.02 1150.34,178.39 1148.28,176.76 1146.20,175.13 1144.10,173.50 1141.98,171.87 1139.85,170.24 1137.70,168.61 1135.53,166.98 1133.34,165.35 1131.13,163.72 1128.91,162.09 1126.67,160.46 1124.41,158.83 1122.14,157.20 1119.85,155.57 1117.54,153.94 1115.21,152.31 1112.87,150.68 1110.52,149.05 1108.15,147.42 1105.76,145.79 1103.36,144.16 1100.94,142.53 1098.50,140.90 1096.06,139.27 1093.59,137.64 1091.11,136.01 1088.62,134.38 1086.12,132.75 1083.60,131.12 1081.06,129.49 1078.51,127.86 1075.95,126.23 1073.38,124.60 1070.79,122.97 1068.19,121.34 1065.58,119.71 1062.96,118.08 1060.32,116.45 1057.67,114.82 1055.01,113.19 1052.34,111.56 1049.65,109.93 1046.96,108.30 1044.25,106.67 1041.53,105.04 1038.81,103.41 1036.07,101.78 1033.32,100.15 1030.56,98.52 1027.80,96.89 1025.02,95.26 1022.23,93.63 1019.44,92.00 1016.63,90.37 1013.82,88.74 1011.00,87.11 1008.17,85.48 1005.33,83.85 1002.48,82.22 999.63,80.59 996.77,78.96 993.90,77.33 991.03,75.70 988.14,74.07 985.26,72.44 982.36,70.81 979.46,69.18 976.56,67.55 973.64,65.92 970.73,64.29 967.80,62.66 964.88,61.03 961.94,59.40 959.01,57.77 956.07,56.14 953.12,54.51 950.17,52.88 947.22,51.25 944.26,49.62 941.30,47.99 938.34,46.36 935.38,44.73 932.41,43.10 929.44,41.47 926.47,39.84 923.50,38.21 920.52,36.58 917.54,34.95 914.57,33.32 911.59,31.69 908.61,30.06 905.63,28.43 902.65,26.80"/>
<polyline points="902.65,613.60 905.20,611.97 907.76,610.34 910.31,608.71 912.86,607.08 915.42,605.45 917.97,603.82 920.52,602.19 923.07,600.56 925.61,598.93 928.16,597.30 930.70,595.67 933.24,594.04 935.78,592.41 938.32,590.78 940.85,589.15 943.38,587.52 945.91,585.89 948.44,584.26 950.96,582.63 953.47,581.00 955.99,579.37 958.50,577.74 961.00,576.11 963.50,574.48 966.00,572.85 968.49,571.22 970.97,569.59 973.46,567.96 975.93,566.33 978.40,564.70 980.87,563.07 983.32,561.44 985.78,559.81 988.22,558.18 990.66,556.55 993.09,554.92 995.52,553.29 997.94,551.66 1000.35,550.03 1002.75,548.40 1005.15,546.77 1007.54,545.14 1009.92,543.51 1012.29,541.88 1014.65,540.25 1017.01,538.62 1019.36,536.99 1021.69,535.36 1024.02,533.73 1026.34,532.10 1028.65,530.47 1030.95,528.84 1033.24,527.21 1035.52,525.58 1037.79,523.95 1040.05,522.32 1042.30,520.69 1044.54,519.06 1046.77,517.43 1048.99,515.80 1051.20,514.17 1053.39,512.54 1055.57,510.91 1057.75,509.28 1059.91,507.65 1062.05,506.02 1064.19,504.39 1066.31,502.76 1068.43,501.13 1070.52,499.50 1072.61,497.87 1074.68,496.24 1076.74,494.61 1078.79,492.98 1080.82,491.35 1082.84,489.72 1084.85,488.09 1086.84,486.46 1088.82,484.83 1090.78,483.20 1092.73,481.57 1094.67,479.94 1096.59,478.31 1098.49,476.68 1100.38,475.05 1102.26,473.42 1104.12,471.79 1105.96,470.16 1107.79,468.53 1109.61,466.90 1111.40,465.27 1113.19,463.64 1114.95,462.01 1116.70,460.38 1118.44,458.75 1120.15,457.12 1121.85,455.49 1123.54,453.86 1125.21,452.23 1126.86,450.60 1128.49,448.97 1130.11,447.34 1131.70,445.71 1133.28,444.08 1134.85,442.45 1136.39,440.82 1137.92,439.19 1139.43,437.56 1140.93,435.93 1142.40,434.30 1143.86,432.67 1145.29,431.04 1146.71,429.41 1148.11,427.78 1149.49,426.15 1150.86,424.52 1152.20,422.89 1153.53,421.26 1154.83,419.63 1156.12,418.00 1157.39,416.37 1158.63,414.74 1159.86,413.11 1161.07,411.48 1162.26,409.85 1163.43,408.22 1164.58,406.59 1165.71,404.96 1166.82,403.33 1167.91,401.70 1168.98,400.07 1170.03,398.44 1171.06,396.81 1172.06,395.18 1173.05,393.55 1174.02,391.92 1174.96,390.29 1175.89,388.66 1176.80,387.03 1177.68,385.40 1178.54,383.77 1179.38,382.14 1180.21,380.51 1181.01,378.88 1181.78,377.25 1182.54,375.62 1183.28,373.99 1183.99,372.36 1184.69,370.73 1185.36,369.10 1186.01,367.47 1186.64,365.84 1187.24,364.21 1187.83,362.58 1188.39,360.95 1188.93,359.32 1189.45,357.69 1189.95,356.06 1190.43,354.43 1190.88,352.80 1191.32,351.17 1191.73,349.54 1192.12,347.91 1192.48,346.28 1192.83,344.65 1193.15,343.02 1193.45,341.39 1193.73,339.76 1193.98,338.13 1194.22,336.50 1194.43,334.87 1194.62,333.24 1194.78,331.61 1194.93,329.98 1195.05,328.35 1195.15,326.72 1195.23,325.09 1195.29,323.46 1195.32,321.83 1195.33,320.20 1195.32,318.57 1195.29,316.94 1195.23,315.31 1195.15,313.68 1195.05,312.05 1194.93,310.42 1194.78,308.79 1194.62,307.16 1194.43,305.53 1194.22,303.90 1193.98,302.27 1193.73,300.64 1193.45,299.01 1193.15,297.38 1192.83,295.75 1192.48,294.12 1192.12,292.49 1191.73,290.86 1191.32,289.23 1190.88,287.60 1190.43,285.97 1189.95,284.34 1189.45,282.71 1188.93,281.08 1188.39,279.45 1187.83,277.82 1187.24,276.19 1186.64,274.56 1186.01,272.93 1185.36,271.30 1184.69,269.67 1183.99,268.04 1183.28,266.41 1182.54,264.78 1181.78,263.15 1181.01,261.52 1180.21,259.89 1179.38,258.26 1178.54,256.63 1177.68,255.00 1176.80,253.37 1175.89,251.74 1174.96,250.11 1174.02,248.48 1173.05,246.85 1172.06,245.22 1171.06,243.59 1170.03,241.96 1168.98,240.33 1167.91,238.70 1166.82,237.07 1165.71,235.44 1164.58,233.81 1163.43,232.18 1162.26,230.55 1161.07,228.92 1159.86,227.29 1158.63,225.66 1157.39,224.03 1156.12,222.40 1154.83,220.77 1153.53,219.14 1152.20,217.51 1150.86,215.88 1149.49,214.25 1148.11,212.62 1146.71,210.99 1145.29,209.36 1143.86,207.73 1142.40,206.10 1140.93,204.47 1139.43,202.84 1137.92,201.21 1136.39,199.58 1134.85,197.95 1133.28,196.32 1131.70,194.69 1130.11,193.06 1128.49,191.43 1126.86,189.80 1125.21,188.17 1123.54,186.54 1121.85,184.91 1120.15,183.28 1118.44,181.65 1116.70,180.02 1114.95,178.39 1113.19,176.76 1111.40,175.13 1109.61,173.50 1107.79,171.87 1105.96,170.24 1104.12,168.61 1102.26,166.98 1100.38,165.35 1098.49,163.72 1096.59,162.09 1094.67,160.46 1092.73,158.83 1090.78,157.20 1088.82,155.57 1086.84,153.94 1084.85,152.31 1082.84,150.68 1080.82,149.05 1078.79,147.42 1076.74,145.79 1074.68,144.16 1072.61,142.53 1070.52,140.90 1068.43,139.27 1066.31,137.64 1064.19,136.01 1062.05,134.38 1059.91,132.75 1057.75,131.12 1055.57,129.49 1053.39,127.86 1051.20,126.23 1048.99,124.60 1046.77,122.97 1044.54,121.34 1042.30,119.71 1040.05,118.08 1037.79,116.45 1035.52,114.82 1033.24,113.19 1030.95,111.56 1028.65,109.93 1026.34,108.30 1024.02,106.67 1021.69,105.04 1019.36,103.41 1017.01,101.78 1014.65,100.15 1012.29,98.52 1009.92,96.89 1007.54,95.26 1005.15,93.63 1002.75,92.00 1000.35,90.37 997.94,88.74 995.52,87.11 993.09,85.48 990.66,83.85 988.22,82.22 985.78,80.59 983.32,78.96 980.87,77.33 978.40,75.70 975.93,74.07 973.46,72.44 970.97,70.81 968.49,69.18 966.00,67.55 963.50,65.92 961.00,64.29 958.50,62.66 955.99,61.03 953.47,59.40 950.96,57.77 948.44,56.14 945.91,54.51 943.38,52.88 940.85,51.25 938.32,49.62 935.78,47.99 933.24,46.36 930.70,44.73 928.16,43.10 925.61,41.47 923.07,39.84 920.52,38.21 917.97,36.58 915.42,34.95 912.86,33.32 910.31,31.69 907.76,30.06 905.20,28.43 902.65,26.80"/>
<polyline points="902.65,613.60 904.78,611.97 906.91,610.34 909.03,608.71 911.16,607.08 913.29,605.45 915.41,603.82 917.54,602.19 919.66,600.56 921.79,598.93 923.91,597.30 926.03,595.67 928.14,594.04 930.26,592.41 932.37,590.78 934.49,589.15 936.59,587.52 938.70,585.89 940.80,584.26 942.91,582.63 945.00,581.00 947.10,579.37 949.19,577.74 951.28,576.11 953.36,574.48 955.44,572.85 957.52,571.22 959.59,569.59 961.65,567.96 963.72,566.33 965.78,564.70 967.83,563.07 969.88,561.44 971.92,559.81 973.96,558.18 975.99,556.55 978.02,554.92 980.04,553.29 982.06,551.66 984.07,550.03 986.07,548.40 988.07,546.77 990.06,545.14 992.04,543.51 994.02,541.88 995.99,540.25 997.95,538.62 999.90,536.99 1001.85,535.36 1003.79,533.73 1005.73,532.10 1007.65,530.47 1009.57,528.84 1011.48,527.21 1013.38,525.58 1015.27,523.95 1017.15,522.32 1019.03,520.69 1020.90,519.06 1022.75,517.43 1024.60,515.80 1026.44,514.17 1028.27,512.54 1030.09,510.91 1031.90,509.28 1033.70,507.65 1035.49,506.02 1037.27,504.39 1039.04,502.76 1040.80,501.13 1042.55,499.50 1044.28,497.87 1046.01,496.24 1047.73,494.61 1049.43,492.98 1051.13,491.35 1052.81,489.72 1054.48,488.09 1056.14,486.46 1057.79,484.83 1059.43,483.20 1061.05,481.57 1062.66,479.94 1064.26,478.31 1065.85,476.68 1067.43,475.05 1068.99,473.42 1070.54,471.79 1072.08,470.16 1073.60,468.53 1075.11,466.90 1076.61,465.27 1078.10,463.64 1079.57,462.01 1081.03,460.38 1082.47,458.75 1083.90,457.12 1085.32,455.49 1086.72,453.86 1088.11,452.23 1089.49,450.60 1090.85,448.97 1092.20,447.34 1093.53,445.71 1094.85,444.08 1096.15,442.45 1097.44,440.82 1098.71,439.19 1099.97,437.56 1101.21,435.93 1102.44,434.30 1103.65,432.67 1104.85,431.04 1106.03,429.41 1107.20,427.78 1108.35,426.15 1109.49,424.52 1110.61,422.89 1111.71,421.26 1112.80,419.63 1113.87,418.00 1114.93,416.37 1115.97,414.74 1116.99,413.11 1118.00,411.48 1118.99,409.85 1119.97,408.22 1120.92,406.59 1121.87,404.96 1122.79,403.33 1123.70,401.70 1124.59,400.07 1125.46,398.44 1126.32,396.81 1127.16,395.18 1127.98,393.55 1128.79,391.92 1129.58,390.29 1130.35,388.66 1131.10,387.03 1131.84,385.40 1132.56,383.77 1133.26,382.14 1133.95,380.51 1134.61,378.88 1135.26,377.25 1135.89,375.62 1136.51,373.99 1137.10,372.36 1137.68,370.73 1138.24,369.10 1138.78,367.47 1139.31,365.84 1139.81,364.21 1140.30,362.58 1140.77,360.95 1141.22,359.32 1141.65,357.69 1142.07,356.06 1142.47,354.43 1142.84,352.80 1143.21,351.17 1143.55,349.54 1143.87,347.91 1144.18,346.28 1144.46,344.65 1144.73,343.02 1144.98,341.39 1145.21,339.76 1145.43,338.13 1145.62,336.50 1145.80,334.87 1145.96,333.24 1146.10,331.61 1146.22,329.98 1146.32,328.35 1146.40,326.72 1146.47,325.09 1146.51,323.46 1146.54,321.83 1146.55,320.20 1146.54,318.57 1146.51,316.94 1146.47,315.31 1146.40,313.68 1146.32,312.05 1146.22,310.42 1146.10,308.79 1145.96,307.16 1145.80,305.53 1145.62,303.90 1145.43,302.27 1145.21,300.64 1144.98,299.01 1144.73,297.38 1144.46,295.75 1144.18,294.12 1143.87,292.49 1143.55,290.86 1143.21,289.23 1142.84,287.60 1142.47,285.97 1142.07,284.34 1141.65,282.71 1141.22,281.08 1140.77,279.45 1140.30,277.82 1139.81,276.19 1139.31,274.56 1138.78,272.93 1138.24,271.30 1137.68,269.67 1137.10,268.04 1136.51,266.41 1135.89,264.78 1135.26,263.15 1134.61,261.52 1133.95,259.89 1133.26,258.26 1132.56,256.63 1131.84,255.00 1131.10,253.37 1130.35,251.74 1129.58,250.11 1128.79,248.48 1127.98,246.85 1127.16,245.22 1126.32,243.59 1125.46,241.96 1124.59,240.33 1123.70,238.70 1122.79,237.07 1121.87,235.44 1120.92,233.81 1119.97,232.18 1118.99,230.55 1118.00,228.92 1116.99,227.29 1115.97,225.66 1114.93,224.03 1113.87,222.40 1112.80,220.77 1111.71,219.14 1110.61,217.51 1109.49,215.88 1108.35,214.25 1107.20,212.62 1106.03,210.99 1104.85,209.36 1103.65,207.73 1102.44,206.10 1101.21,204.47 1099.97,202.84 1098.71,201.21 1097.44,199.58 1096.15,197.95 1094.85,196.32 1093.53,194.69 1092.20,193.06 1090.85,191.43 1089.49,189.80 1088.11,188.17 1086.72,186.54 1085.32,184.91 1083.90,183.28 1082.47,181.65 1081.03,180.02 1079.57,178.39 1078.10,176.76 1076.61,175.13 1075.11,173.50 1073.60,171.87 1072.08,170.24 1070.54,168.61 1068.99,166.98 1067.43,165.35 1065.85,163.72 1064.26,162.09 1062.66,160.46 1061.05,158.83 1059.43,157.20 1057.79,155.57 1056.14,153.94 1054.48,152.31 1052.81,150.68 1051.13,149.05 1049.43,147.42 1047.73,145.79 1046.01,144.16 1044.28,142.53 1042.55,140.90 1040.80,139.27 1039.04,137.64 1037.27,136.01 1035.49,134.38 1033.70,132.75 1031.90,131.12 1030.09,129.49 1028.27,127.86 1026.44,126.23 1024.60,124.60 1022.75,122.97 1020.90,121.34 1019.03,119.71 1017.15,118.08 1015.27,116.45 1013.38,114.82 1011.48,113.19 1009.57,111.56 1007.65,109.93 1005.73,108.30 1003.79,106.67 1001.85,105.04 999.90,103.41 997.95,101.78 995.99,100.15 994.02,98.52 992.04,96.89 990.06,95.26 988.07,93.63 986.07,92.00 984.07,90.37 982.06,88.74 980.04,87.11 978.02,85.48 975.99,83.85 973.96,82.22 971.92,80.59 969.88,78.96 967.83,77.33 965.78,75.70 963.72,74.07 961.65,72.44 959.59,70.81 957.52,69.18 955.44,67.55 953.36,65.92 951.28,64.29 949.19,62.66 947.10,61.03 945.00,59.40 942.91,57.77 940.80,56.14 938.70,54.51 936.59,52.88 934.49,51.25 932.37,49.62 930.26,47.99 928.14,46.36 926.03,44.73 923.91,43.10 921.79,41.47 919.66,39.84 917.54,38.21 915.41,36.58 913.29,34.95 911.16,33.32 909.03,31.69 906.91,30.06 904.78,28.43 902.65,26.80"/>
<polyline points="902.65,613.60 904.35,611.97 906.06,610.34 907.76,608.71 909.46,607.08 911.16,605.45 912.86,603.82 914.56,602.19 916.26,600.56 917.96,598.93 919.66,597.30 921.35,595.67 923.05,594.04 924.74,592.41 926.43,590.78 928.12,589.15 929.81,587.52 931.49,585.89 933.17,584.26 934.85,582.63 936.53,581.00 938.21,579.37 939.88,577.74 941.55,576.11 943.22,574.48 944.88,572.85 946.54,571.22 948.20,569.59 949.85,567.96 951.50,566.33 953.15,564.70 954.79,563.07 956.43,561.44 958.07,559.81 959.70,558.18 961.32,556.55 962.95,554.92 964.56,553.29 966.17,551.66 967.78,550.03 969.38,548.40 970.98,546.77 972.57,545.14 974.16,543.51 975.74,541.88 977.32,540.25 978.89,538.62 980.45,536.99 982.01,535.36 983.56,533.73 985.11,532.10 986.65,530.47 988.18,528.84 989.71,527.21 991.23,525.58 992.75,523.95 994.25,522.32 995.75,520.69 997.25,519.06 998.73,517.43 1000.21,515.80 1001.68,514.17 1003.14,512.54 1004.60,510.91 1006.05,509.28 1007.49,507.65 1008.92,506.02 1010.34,504.39 1011.76,502.76 1013.17,501.13 1014.57,499.50 1015.96,497.87 1017.34,496.24 1018.71,494.61 1020.08,492.98 1021.43,491.35 1022.78,489.72 1024.12,488.09 1025.44,486.46 1026.76,484.83 1028.07,483.20 1029.37,481.57 1030.66,479.94 1031.94,478.31 1033.21,476.68 1034.47,475.05 1035.72,473.42 1036.96,471.79 1038.19,470.16 1039.41,468.53 1040.62,466.90 1041.82,465.27 1043.01,463.64 1044.19,462.01 1045.35,460.38 1046.51,458.75 1047.65,457.12 1048.79,455.49 1049.91,453.86 1051.02,452.23 1052.12,450.60 1053.21,448.97 1054.29,447.34 1055.35,445.71 1056.41,444.08 1057.45,442.45 1058.48,440.82 1059.50,439.19 1060.51,437.56 1061.50,435.93 1062.48,434.30 1063.45,432.67 1064.41,431.04 1065.36,429.41 1066.29,427.78 1067.21,426.15 1068.12,424.52 1069.02,422.89 1069.90,421.26 1070.77,419.63 1071.63,418.00 1072.47,416.37 1073.31,414.74 1074.12,413.11 1074.93,411.48 1075.72,409.85 1076.50,408.22 1077.27,406.59 1078.02,404.96 1078.76,403.33 1079.49,401.70 1080.20,400.07 1080.90,398.44 1081.59,396.81 1082.26,395.18 1082.92,393.55 1083.56,391.92 1084.19,390.29 1084.81,388.66 1085.41,387.03 1086.00,385.40 1086.58,383.77 1087.14,382.14 1087.69,380.51 1088.22,378.88 1088.74,377.25 1089.24,375.62 1089.73,373.99 1090.21,372.36 1090.67,370.73 1091.12,369.10 1091.55,367.47 1091.97,365.84 1092.38,364.21 1092.77,362.58 1093.14,360.95 1093.51,359.32 1093.85,357.69 1094.19,356.06 1094.50,354.43 1094.81,352.80 1095.09,351.17 1095.37,349.54 1095.63,347.91 1095.87,346.28 1096.10,344.65 1096.32,343.02 1096.52,341.39 1096.70,339.76 1096.87,338.13 1097.03,336.50 1097.17,334.87 1097.29,333.24 1097.41,331.61 1097.50,329.98 1097.58,328.35 1097.65,326.72 1097.70,325.09 1097.74,323.46 1097.76,321.83 1097.77,320.20 1097.76,318.57 1097.74,316.94 1097.70,315.31 1097.65,313.68 1097.58,312.05 1097.50,310.42 1097.41,308.79 1097.29,307.16 1097.17,305.53 1097.03,303.90 1096.87,302.27 1096.70,300.64 1096.52,299.01 1096.32,297.38 1096.10,295.75 1095.87,294.12 1095.63,292.49 1095.37,290.86 1095.09,289.23 1094.81,287.60 1094.50,285.97 1094.19,284.34 1093.85,282.71 1093.51,281.08 1093.14,279.45 1092.77,277.82 1092.38,276.19 1091.97,274.56 1091.55,272.93 1091.12,271.30 1090.67,269.67 1090.21,268.04 1089.73,266.41 1089.24,264.78 1088.74,263.15 1088.22,261.52 1087.69,259.89 1087.14,258.26 1086.58,256.63 1086.00,255.00 1085.41,253.37 1084.81,251.74 1084.19,250.11 1083.56,248.48 1082.92,246.85 1082.26,245.22 1081.59,243.59 1080.90,241.96 1080.20,240.33 1079.49,238.70 1078.76,237.07 1078.02,235.44 1077.27,233.81 1076.50,232.18 1075.72,230.55 1074.93,228.92 1074.12,227.29 1073.31,225.66 1072.47,224.03 1071.63,222.40 1070.77,220.77 1069.90,219.14 1069.02,217.51 1068.12,215.88 1067.21,214.25 1066.29,212.62 1065.36,210.99 1064.41,209.36 1063.45,207.73 1062.48,206.10 1061.50,204.47 1060.51,202.84 1059.50,201.21 1058.48,199.58 1057.45,197.95 1056.41,196.32 1055.35,194.69 1054.29,193.06 1053.21,191.43 1052.12,189.80 1051.02,188.17 1049.91,186.54 1048.79,184.91 1047.65,183.28 1046.51,181.65 1045.35,180.02 1044.19,178.39 1043.01,176.76 1041.82,175.13 1040.62,173.50 1039.41,171.87 1038.19,170.24 1036.96,168.61 1035.72,166.98 1034.47,165.35 1033.21,163.72 1031.94,162.09 1030.66,160.46 1029.37,158.83 1028.07,157.20 1026.76,155.57 1025.44,153.94 1024.12,152.31 1022.78,150.68 1021.43,149.05 1020.08,147.42 1018.71,145.79 1017.34,144.16 1015.96,142.53 1014.57,140.90 1013.17,139.27 1011.76,137.64 1010.34,136.01 1008.92,134.38 1007.49,132.75 1006.05,131.12 1004.60,129.49 1003.14,127.86 1001.68,126.23 1000.21,124.60 998.73,122.97 997.25,121.34 995.75,119.71 994.25,118.08 992.75,116.45 991.23,114.82 989.71,113.19 988.18,111.56 986.65,109.93 985.11,108.30 983.56,106.67 982.01,105.04 980.45,103.41 978.89,101.78 977.32,100.15 975.74,98.52 974.16,96.89 972.57,95.26 970.98,93.63 969.38,92.00 967.78,90.37 966.17,88.74 964.56,87.11 962.95,85.48 961.32,83.85 959.70,82.22 958.07,80.59 956.43,78.96 954.79,77.33 953.15,75.70 951.50,74.07 949.85,72.44 948.20,70.81 946.54,69.18 944.88,67.55 943.22,65.92 941.55,64.29 939.88,62.66 938.21,61.03 936.53,59.40 934.85,57.77 933.17,56.14 931.49,54.51 929.81,52.88 928.12,51.25 926.43,49.62 924.74,47.99 923.05,46.36 921.35,44.73 919.66,43.10 917.96,41.47 916.26,39.84 914.56,38.21 912.86,36.58 911.16,34.95 909.46,33.32 907.76,31.69 906.06,30.06 904.35,28.43 902.65,26.80"/>
<polyline points="902.65,613.60 903.93,611.97 905.20,610.34 906.48,608.71 907.76,607.08 909.03,605.45 910.31,603.82 911.58,602.19 912.86,600.56 914.13,598.93 915.40,597.30 916.68,595.67 917.95,594.04 919.22,592.41 920.48,590.78 921.75,589.15 923.02,587.52 924.28,585.89 925.54,584.26 926.80,582.63 928.06,581.00 929.32,579.37 930.57,577.74 931.83,576.11 933.08,574.48 934.32,572.85 935.57,571.22 936.81,569.59 938.05,567.96 939.29,566.33 940.53,564.70 941.76,563.07 942.99,561.44 944.21,559.81 945.44,558.18 946.66,556.55 947.87,554.92 949.08,553.29 950.29,551.66 951.50,550.03 952.70,548.40 953.90,546.77 955.09,545.14 956.28,543.51 957.47,541.88 958.65,540.25 959.83,538.62 961.00,536.99 962.17,535.36 963.34,533.73 964.50,532.10 965.65,530.47 966.80,528.84 967.95,527.21 969.09,525.58 970.22,523.95 971.35,522.32 972.48,520.69 973.60,519.06 974.71,517.43 975.82,515.80 976.92,514.17 978.02,512.54 979.11,510.91 980.20,509.28 981.28,507.65 982.35,506.02 983.42,504.39 984.48,502.76 985.54,501.13 986.59,499.50 987.63,497.87 988.67,496.24 989.70,494.61 990.72,492.98 991.74,491.35 992.75,489.72 993.75,488.09 994.74,486.46 995.73,484.83 996.72,483.20 997.69,481.57 998.66,479.94 999.62,478.31 1000.57,476.68 1001.52,475.05 1002.45,473.42 1003.38,471.79 1004.31,470.16 1005.22,468.53 1006.13,466.90 1007.03,465.27 1007.92,463.64 1008.80,462.01 1009.68,460.38 1010.54,458.75 1011.40,457.12 1012.25,455.49 1013.09,453.86 1013.93,452.23 1014.75,450.60 1015.57,448.97 1016.38,447.34 1017.18,445.71 1017.97,444.08 1018.75,442.45 1019.52,440.82 1020.29,439.19 1021.04,437.56 1021.79,435.93 1022.52,434.30 1023.25,432.67 1023.97,431.04 1024.68,429.41 1025.38,427.78 1026.07,426.15 1026.75,424.52 1027.43,422.89 1028.09,421.26 1028.74,419.63 1029.38,418.00 1030.02,416.37 1030.64,414.74 1031.26,413.11 1031.86,411.48 1032.46,409.85 1033.04,408.22 1033.61,406.59 1034.18,404.96 1034.73,403.33 1035.28,401.70 1035.81,400.07 1036.34,398.44 1036.85,396.81 1037.36,395.18 1037.85,393.55 1038.33,391.92 1038.81,390.29 1039.27,388.66 1039.72,387.03 1040.16,385.40 1040.60,383.77 1041.02,382.14 1041.43,380.51 1041.83,378.88 1042.22,377.25 1042.60,375.62 1042.96,373.99 1043.32,372.36 1043.67,370.73 1044.00,369.10 1044.33,367.47 1044.64,365.84 1044.95,364.21 1045.24,362.58 1045.52,360.95 1045.79,359.32 1046.05,357.69 1046.30,356.06 1046.54,354.43 1046.77,352.80 1046.98,351.17 1047.19,349.54 1047.38,347.91 1047.57,346.28 1047.74,344.65 1047.90,343.02 1048.05,341.39 1048.19,339.76 1048.32,338.13 1048.43,336.50 1048.54,334.87 1048.63,333.24 1048.72,331.61 1048.79,329.98 1048.85,328.35 1048.90,326.72 1048.94,325.09 1048.97,323.46 1048.98,321.83 1048.99,320.20 1048.98,318.57 1048.97,316.94 1048.94,315.31 1048.90,313.68 1048.85,312.05 1048.79,310.42 1048.72,308.79 1048.63,307.16 1048.54,305.53 1048.43,303.90 1048.32,302.27 1048.19,300.64 1048.05,299.01 1047.90,297.38 1047.74,295.75 1047.57,294.12 1047.38,292.49 1047.19,290.86 1046.98,289.23 1046.77,287.60 1046.54,285.97 1046.30,284.34 1046.05,282.71 1045.79,281.08 1045.52,279.45 1045.24,277.82 1044.95,276.19 1044.64,274.56 1044.33,272.93 1044.00,271.30 1043.67,269.67 1043.32,268.04 1042.96,266.41 1042.60,264.78 1042.22,263.15 1041.83,261.52 1041.43,259.89 1041.02,258.26 1040.60,256.63 1040.16,255.00 1039.72,253.37 1039.27,251.74 1038.81,250.11 1038.33,248.48 1037.85,246.85 1037.36,245.22 1036.85,243.59 1036.34,241.96 1035.81,240.33 1035.28,238.70 1034.73,237.07 1034.18,235.44 1033.61,233.81 1033.04,232.18 1032.46,230.55 1031.86,228.92 1031.26,227.29 1030.64,225.66 1030.02,224.03 1029.38,222.40 1028.74,220.77 1028.09,219.14 1027.43,217.51 1026.75,215.88 1026.07,214.25 1025.38,212.62 1024.68,210.99 1023.97,209.36 1023.25,207.73 1022.52,206.10 1021.79,204.47 1021.04,202.84 1020.29,201.21 1019.52,199.58 1018.75,197.95 1017.97,196.32 1017.18,194.69 1016.38,193.06 1015.57,191.43 1014.75,189.80 1013.93,188.17 1013.09,186.54 1012.25,184.91 1011.40,183.28 1010.54,181.65 1009.68,180.02 1008.80,178.39 1007.92,176.76 1007.03,175.13 1006.13,173.50 1005.22,171.87 1004.31,170.24 1003.38,168.61 1002.45,166.98 1001.52,165.35 1000.57,163.72 999.62,162.09 998.66,160.46 997.69,158.83 996.72,157.20 995.73,155.57 994.74,153.94 993.75,152.31 992.75,150.68 991.74,149.05 990.72,147.42 989.70,145.79 988.67,144.16 987.63,142.53 986.59,140.90 985.54,139.27 984.48,137.64 983.42,136.01 982.35,134.38 981.28,132.75 980.20,131.12 979.11,129.49 978.02,127.86 976.92,126.23 975.82,124.60 974.71,122.97 973.60,121.34 972.48,119.71 971.35,118.08 970.22,116.45 969.09,114.82 967.95,113.19 966.80,111.56 965.65,109.93 964.50,108.30 963.34,106.67 962.17,105.04 961.00,103.41 959.83,101.78 958.65,100.15 957.47,98.52 956.28,96.89 955.09,95.26 953.90,93.63 952.70,92.00 951.50,90.37 950.29,88.74 949.08,87.11 947.87,85.48 946.66,83.85 945.44,82.22 944.21,80.59 942.99,78.96 941.76,77.33 940.53,75.70 939.29,74.07 938.05,72.44 936.81,70.81 935.57,69.18 934.32,67.55 933.08,65.92 931.83,64.29 930.57,62.66 929.32,61.03 928.06,59.40 926.80,57.77 925.54,56.14 924.28,54.51 923.02,52.88 921.75,51.25 920.48,49.62 919.22,47.99 917.95,46.36 916.68,44.73 915.40,43.10 914.13,41.47 912.86,39.84 911.58,38.21 910.31,36.58 909.03,34.95 907.76,33.32 906.48,31.69 905.20,30.06 903.93,28.43 902.65,26.80"/>
<polyline points="902.65,613.60 903.50,611.97 904.35,610.34 905.20,608.71 906.05,607.08 906.91,605.45 907.76,603.82 908.61,602.19 909.46,600.56 910.30,598.93 911.15,597.30 912.00,595.67 912.85,594.04 913.69,592.41 914.54,590.78 915.38,589.15 916.23,587.52 917.07,585.89 917.91,584.26 918.75,582.63 919.59,581.00 920.43,579.37 921.27,577.74 922.10,576.11 922.93,574.48 923.77,572.85 924.60,571.22 925.42,569.59 926.25,567.96 927.08,566.33 927.90,564.70 928.72,563.07 929.54,561.44 930.36,559.81 931.17,558.18 931.99,556.55 932.80,554.92 933.61,553.29 934.41,551.66 935.22,550.03 936.02,548.40 936.82,546.77 937.61,545.14 938.41,543.51 939.20,541.88 939.98,540.25 940.77,538.62 941.55,536.99 942.33,535.36 943.11,533.73 943.88,532.10 944.65,530.47 945.42,528.84 946.18,527.21 946.94,525.58 947.70,523.95 948.45,522.32 949.20,520.69 949.95,519.06 950.69,517.43 951.43,515.80 952.17,514.17 952.90,512.54 953.62,510.91 954.35,509.28 955.07,507.65 955.78,506.02 956.50,504.39 957.20,502.76 957.91,501.13 958.61,499.50 959.30,497.87 959.99,496.24 960.68,494.61 961.36,492.98 962.04,491.35 962.71,489.72 963.38,488.09 964.05,486.46 964.71,484.83 965.36,483.20 966.01,481.57 966.66,479.94 967.30,478.31 967.93,476.68 968.56,475.05 969.19,473.42 969.81,471.79 970.42,470.16 971.03,468.53 971.64,466.90 972.23,465.27 972.83,463.64 973.42,462.01 974.00,460.38 974.58,458.75 975.15,457.12 975.72,455.49 976.28,453.86 976.84,452.23 977.39,450.60 977.93,448.97 978.47,447.34 979.00,445.71 979.53,444.08 980.05,442.45 980.56,440.82 981.07,439.19 981.58,437.56 982.08,435.93 982.57,434.30 983.05,432.67 983.53,431.04 984.00,429.41 984.47,427.78 984.93,426.15 985.39,424.52 985.83,422.89 986.28,421.26 986.71,419.63 987.14,418.00 987.56,416.37 987.98,414.74 988.39,413.11 988.79,411.48 989.19,409.85 989.58,408.22 989.96,406.59 990.34,404.96 990.71,403.33 991.07,401.70 991.43,400.07 991.78,398.44 992.12,396.81 992.45,395.18 992.78,393.55 993.11,391.92 993.42,390.29 993.73,388.66 994.03,387.03 994.33,385.40 994.61,383.77 994.89,382.14 995.17,380.51 995.44,378.88 995.69,377.25 995.95,375.62 996.19,373.99 996.43,372.36 996.66,370.73 996.89,369.10 997.10,367.47 997.31,365.84 997.51,364.21 997.71,362.58 997.90,360.95 998.08,359.32 998.25,357.69 998.42,356.06 998.58,354.43 998.73,352.80 998.87,351.17 999.01,349.54 999.14,347.91 999.26,346.28 999.38,344.65 999.48,343.02 999.58,341.39 999.68,339.76 999.76,338.13 999.84,336.50 999.91,334.87 999.97,333.24 1000.03,331.61 1000.08,329.98 1000.12,328.35 1000.15,326.72 1000.18,325.09 1000.20,323.46 1000.21,321.83 1000.21,320.20 1000.21,318.57 1000.20,316.94 1000.18,315.31 1000.15,313.68 1000.12,312.05 1000.08,310.42 1000.03,308.79 999.97,307.16 999.91,305.53 999.84,303.90 999.76,302.27 999.68,300.64 999.58,299.01 999.48,297.38 999.38,295.75 999.26,294.12 999.14,292.49 999.01,290.86 998.87,289.23 998.73,287.60 998.58,285.97 998.42,284.34 998.25,282.71 998.08,281.08 997.90,279.45 997.71,277.82 997.51,276.19 997.31,274.56 997.10,272.93 996.89,271.30 996.66,269.67 996.43,268.04 996.19,266.41 995.95,264.78 995.69,263.15 995.44,261.52 995.17,259.89 994.89,258.26 994.61,256.63 994.33,255.00 994.03,253.37 993.73,251.74 993.42,250.11 993.11,248.48 992.78,246.85 992.45,245.22 992.12,243.59 991.78,241.96 991.43,240.33 991.07,238.70 990.71,237.07 990.34,235.44 989.96,233.81 989.58,232.18 989.19,230.55 988.79,228.92 988.39,227.29 987.98,225.66 987.56,224.03 987.14,222.40 986.71,220.77 986.28,219.14 985.83,217.51 985.39,215.88 984.93,214.25 984.47,212.62 984.00,210.99 983.53,209.36 983.05,207.73 982.57,206.10 982.08,204.47 981.58,202.84 981.07,201.21 980.56,199.58 980.05,197.95 979.53,196.32 979.00,194.69 978.47,193.06 977.93,191.43 977.39,189.80 976.84,188.17 976.28,186.54 975.72,184.91 975.15,183.28 974.58,181.65 974.00,180.02 973.42,178.39 972.83,176.76 972.23,175.13 971.64,173.50 971.03,171.87 970.42,170.24 969.81,168.61 969.19,166.98 968.56,165.35 967.93,163.72 967.30,162.09 966.66,160.46 966.01,158.83 965.36,157.20 964.71,155.57 964.05,153.94 963.38,152.31 962.71,150.68 962.04,149.05 961.36,147.42 960.68,145.79 959.99,144.16 959.30,142.53 958.61,140.90 957.91,139.27 957.20,137.64 956.50,136.01 955.78,134.38 955.07,132.75 954.35,131.12 953.62,129.49 952.90,127.86 952.17,126.23 951.43,124.60 950.69,122.97 949.95,121.34 949.20,119.71 948.45,118.08 947.70,116.45 946.94,114.82 946.18,113.19 945.42,111.56 944.65,109.93 943.88,108.30 943.11,106.67 942.33,105.04 941.55,103.41 940.77,101.78 939.98,100.15 939.20,98.52 938.41,96.89 937.61,95.26 936.82,93.63 936.02,92.00 935.22,90.37 934.41,88.74 933.61,87.11 932.80,85.48 931.99,83.85 931.17,82.22 930.36,80.59 929.54,78.96 928.72,77.33 927.90,75.70 927.08,74.07 926.25,72.44 925.42,70.81 924.60,69.18 923.77,67.55 922.93,65.92 922.10,64.29 921.27,62.66 920.43,61.03 919.59,59.40 918.75,57.77 917.91,56.14 917.07,54.51 916.23,52.88 915.38,51.25 914.54,49.62 913.69,47.99 912.85,46.36 912.00,44.73 911.15,43.10 910.30,41.47 909.46,39.84 908.61,38.21 907.76,36.58 906.91,34.95 906.05,33.32 905.20,31.69 904.35,30.06 903.50,28.43 902.65,26.80"/>
<polyline points="902.65,613.60 903.08,611.97 903.50,610.34 903.93,608.71 904.35,607.08 904.78,605.45 905.20,603.82 905.63,602.19 906.05,600.56 906.48,598.93 906.90,597.30 907.33,595.67 907.75,594.04 908.17,592.41 908.59,590.78 909.02,589.15 909.44,587.52 909.86,585.89 910.28,584.26 910.70,582.63 911.12,581.00 911.54,579.37 911.96,577.74 912.38,576.11 912.79,574.48 913.21,572.85 913.62,571.22 914.04,569.59 914.45,567.96 914.86,566.33 915.28,564.70 915.69,563.07 916.10,561.44 916.50,559.81 916.91,558.18 917.32,556.55 917.72,554.92 918.13,553.29 918.53,551.66 918.93,550.03 919.33,548.40 919.73,546.77 920.13,545.14 920.53,543.51 920.92,541.88 921.32,540.25 921.71,538.62 922.10,536.99 922.49,535.36 922.88,533.73 923.27,532.10 923.65,530.47 924.03,528.84 924.42,527.21 924.80,525.58 925.17,523.95 925.55,522.32 925.93,520.69 926.30,519.06 926.67,517.43 927.04,515.80 927.41,514.17 927.77,512.54 928.14,510.91 928.50,509.28 928.86,507.65 929.22,506.02 929.57,504.39 929.93,502.76 930.28,501.13 930.63,499.50 930.98,497.87 931.32,496.24 931.67,494.61 932.01,492.98 932.35,491.35 932.68,489.72 933.02,488.09 933.35,486.46 933.68,484.83 934.01,483.20 934.33,481.57 934.65,479.94 934.97,478.31 935.29,476.68 935.61,475.05 935.92,473.42 936.23,471.79 936.54,470.16 936.84,468.53 937.14,466.90 937.44,465.27 937.74,463.64 938.03,462.01 938.33,460.38 938.61,458.75 938.90,457.12 939.18,455.49 939.46,453.86 939.74,452.23 940.02,450.60 940.29,448.97 940.56,447.34 940.83,445.71 941.09,444.08 941.35,442.45 941.61,440.82 941.86,439.19 942.11,437.56 942.36,435.93 942.61,434.30 942.85,432.67 943.09,431.04 943.33,429.41 943.56,427.78 943.79,426.15 944.02,424.52 944.24,422.89 944.46,421.26 944.68,419.63 944.89,418.00 945.11,416.37 945.31,414.74 945.52,413.11 945.72,411.48 945.92,409.85 946.11,408.22 946.30,406.59 946.49,404.96 946.68,403.33 946.86,401.70 947.04,400.07 947.21,398.44 947.38,396.81 947.55,395.18 947.72,393.55 947.88,391.92 948.04,390.29 948.19,388.66 948.34,387.03 948.49,385.40 948.63,383.77 948.77,382.14 948.91,380.51 949.04,378.88 949.17,377.25 949.30,375.62 949.42,373.99 949.54,372.36 949.66,370.73 949.77,369.10 949.88,367.47 949.98,365.84 950.08,364.21 950.18,362.58 950.27,360.95 950.36,359.32 950.45,357.69 950.53,356.06 950.61,354.43 950.69,352.80 950.76,351.17 950.83,349.54 950.89,347.91 950.96,346.28 951.01,344.65 951.07,343.02 951.12,341.39 951.16,339.76 951.21,338.13 951.24,336.50 951.28,334.87 951.31,333.24 951.34,331.61 951.36,329.98 951.38,328.35 951.40,326.72 951.41,325.09 951.42,323.46 951.43,321.83 951.43,320.20 951.43,318.57 951.42,316.94 951.41,315.31 951.40,313.68 951.38,312.05 951.36,310.42 951.34,308.79 951.31,307.16 951.28,305.53 951.24,303.90 951.21,302.27 951.16,300.64 951.12,299.01 951.07,297.38 951.01,295.75 950.96,294.12 950.89,292.49 950.83,290.86 950.76,289.23 950.69,287.60 950.61,285.97 950.53,284.34 950.45,282.71 950.36,281.08 950.27,279.45 950.18,277.82 950.08,276.19 949.98,274.56 949.88,272.93 949.77,271.30 949.66,269.67 949.54,268.04 949.42,266.41 949.30,264.78 949.17,263.15 949.04,261.52 948.91,259.89 948.77,258.26 948.63,256.63 948.49,255.00 948.34,253.37 948.19,251.74 948.04,250.11 947.88,248.48 947.72,246.85 947.55,245.22 947.38,243.59 947.21,241.96 947.04,240.33 946.86,238.70 946.68,237.07 946.49,235.44 946.30,233.81 946.11,232.18 945.92,230.55 945.72,228.92 945.52,227.29 945.31,225.66 945.11,224.03 944.89,222.40 944.68,220.77 944.46,219.14 944.24,217.51 944.02,215.88 943.79,214.25 943.56,212.62 943.33,210.99 943.09,209.36 942.85,207.73 942.61,206.10 942.36,204.47 942.11,202.84 941.86,201.21 941.61,199.58 941.35,197.95 941.09,196.32 940.83,194.69 940.56,193.06 940.29,191.43 940.02,189.80 939.74,188.17 939.46,186.54 939.18,184.91 938.90,183.28 938.61,181.65 938.33,180.02 938.03,178.39 937.74,176.76 937.44,175.13 937.14,173.50 936.84,171.87 936.54,170.24 936.23,168.61 935.92,166.98 935.61,165.35 935.29,163.72 934.97,162.09 934.65,160.46 934.33,158.83 934.01,157.20 933.68,155.57 933.35,153.94 933.02,152.31 932.68,150.68 932.35,149.05 932.01,147.42 931.67,145.79 931.32,144.16 930.98,142.53 930.63,140.90 930.28,139.27 929.93,137.64 929.57,136.01 929.22,134.38 928.86,132.75 928.50,131.12 928.14,129.49 927.77,127.86 927.41,126.23 927.04,124.60 926.67,122.97 926.30,121.34 925.93,119.71 925.55,118.08 925.17,116.45 924.80,114.82 924.42,113.19 924.03,111.56 923.65,109.93 923.27,108.30 922.88,106.67 922.49,105.04 922.10,103.41 921.71,101.78 921.32,100.15 920.92,98.52 920.53,96.89 920.13,95.26 919.73,93.63 919.33,92.00 918.93,90.37 918.53,88.74 918.13,87.11 917.72,85.48 917.32,83.85 916.91,82.22 916.50,80.59 916.10,78.96 915.69,77.33 915.28,75.70 914.86,74.07 914.45,72.44 914.04,70.81 913.62,69.18 913.21,67.55 912.79,65.92 912.38,64.29 911.96,62.66 911.54,61.03 911.12,59.40 910.70,57.77 910.28,56.14 909.86,54.51 909.44,52.88 909.02,51.25 908.59,49.62 908.17,47.99 907.75,46.36 907.33,44.73 906.90,43.10 906.48,41.47 906.05,39.84 905.63,38.21 905.20,36.58 904.78,34.95 904.35,33.32 903.93,31.69 903.50,30.06 903.08,28.43 902.65,26.80"/>
<polyline points="902.65,613.60 902.65,611.97 902.65,610.34 902.65,608.71 902.65,607.08 902.65,605.45 902.65,603.82 902.65,602.19 902.65,600.56 902.65,598.93 902.65,597.30 902.65,595.67 902.65,594.04 902.65,592.41 902.65,590.78 902.65,589.15 902.65,587.52 902.65,585.89 902.65,584.26 902.65,582.63 902.65,581.00 902.65,579.37 902.65,577.74 902.65,576.11 902.65,574.48 902.65,572.85 902.65,571.22 902.65,569.59 902.65,567.96 902.65,566.33 902.65,564.70 902.65,563.07 902.65,561.44 902.65,559.81 902.65,558.18 902.65,556.55 902.65,554.92 902.65,553.29 902.65,551.66 902.65,550.03 902.65,548.40 902.65,546.77 902.65,545.14 902.65,543.51 902.65,541.88 902.65,540.25 902.65,538.62 902.65,536.99 902.65,535.36 902.65,533.73 902.65,532.10 902.65,530.47 902.65,528.84 902.65,527.21 902.65,525.58 902.65,523.95 902.65,522.32 902.65,520.69 902.65,519.06 902.65,517.43 902.65,515.80 902.65,514.17 902.65,512.54 902.65,510.91 902.65,509.28 902.65,507.65 902.65,506.02 902.65,504.39 902.65,502.76 902.65,501.13 902.65,499.50 902.65,497.87 902.65,496.24 902.65,494.61 902.65,492.98 902.65,491.35 902.65,489.72 902.65,488.09 902.65,486.46 902.65,484.83 902.65,483.20 902.65,481.57 902.65,479.94 902.65,478.31 902.65,476.68 902.65,475.05 902.65,473.42 902.65,471.79 902.65,470.16 902.65,468.53 902.65,466.90 902.65,465.27 902.65,463.64 902.65,462.01 902.65,460.38 902.65,458.75 902.65,457.12 902.65,455.49 902.65,453.86 902.65,452.23 902.65,450.60 902.65,448.97 902.65,447.34 902.65,445.71 902.65,444.08 902.65,442.45 902.65,440.82 902.65,439.19 902.65,437.56 902.65,435.93 902.65,434.30 902.65,432.67 902.65,431.04 902.65,429.41 902.65,427.78 902.65,426.15 902.65,424.52 902.65,422.89 902.65,421.26 902.65,419.63 902.65,418.00 902.65,416.37 902.65,414.74 902.65,413.11 902.65,411.48 902.65,409.85 902.65,408.22 902.65,406.59 902.65,404.96 902.65,403.33 902.65,401.70 902.65,400.07 902.65,398.44 902.65,396.81 902.65,395.18 902.65,393.55 902.65,391.92 902.65,390.29 902.65,388.66 902.65,387.03 902.65,385.40 902.65,383.77 902.65,382.14 902.65,380.51 902.65,378.88 902.65,377.25 902.65,375.62 902.65,373.99 902.65,372.36 902.65,370.73 902.65,369.10 902.65,367.47 902.65,365.84 902.65,364.21 902.65,362.58 902.65,360.95 902.65,359.32 902.65,357.69 902.65,356.06 902.65,354.43 902.65,352.80 902.65,351.17 902.65,349.54 902.65,347.91 902.65,346.28 902.65,344.65 902.65,343.02 902.65,341.39 902.65,339.76 902.65,338.13 902.65,336.50 902.65,334.87 902.65,333.24 902.65,331.61 902.65,329.98 902.65,328.35 902.65,326.72 902.65,325.09 902.65,323.46 902.65,321.83 902.65,320.20 902.65,318.57 902.65,316.94 902.65,315.31 902.65,313.68 902.65,312.05 902.65,310.42 902.65,308.79 902.65,307.16 902.65,305.53 902.65,303.90 902.65,302.27 902.65,300.64 902.65,299.01 902.65,297.38 902.65,295.75 902.65,294.12 902.65,292.49 902.65,290.86 902.65,289.23 902.65,287.60 902.65,285.97 902.65,284.34 902.65,282.71 902.65,281.08 902.65,279.45 902.65,277.82 902.65,276.19 902.65,274.56 902.65,272.93 902.65,271.30 902.65,269.67 902.65,268.04 902.65,266.41 902.65,264.78 902.65,263.15 902.65,261.52 902.65,259.89 902.65,258.26 902.65,256.63 902.65,255.00 902.65,253.37 902.65,251.74 902.65,250.11 902.65,248.48 902.65,246.85 902.65,245.22 902.65,243.59 902.65,241.96 902.65,240.33 902.65,238.70 902.65,237.07 902.65,235.44 902.65,233.81 902.65,232.18 902.65,230.55 902.65,228.92 902.65,227.29 902.65,225.66 902.65,224.03 902.65,222.40 902.65,220.77 902.65,219.14 902.65,217.51 902.65,215.88 902.65,214.25 902.65,212.62 902.65,210.99 902.65,209.36 902.65,207.73 902.65,206.10 902.65,204.47 902.65,202.84 902.65,201.21 902.65,199.58 902.65,197.95 902.65,196.32 902.65,194.69 902.65,193.06 902.65,191.43 902.65,189.80 902.65,188.17 902.65,186.54 902.65,184.91 902.65,183.28 902.65,181.65 902.65,180.02 902.65,178.39 902.65,176.76 902.65,175.13 902.65,173.50 902.65,171.87 902.65,170.24 902.65,168.61 902.65,166.98 902.65,165.35 902.65,163.72 902.65,162.09 902.65,160.46 902.65,158.83 902.65,157.20 902.65,155.57 902.65,153.94 902.65,152.31 902.65,150.68 902.65,149.05 902.65,147.42 902.65,145.79 902.65,144.16 902.65,142.53 902.65,140.90 902.65,139.27 902.65,137.64 902.65,136.01 902.65,134.38 902.65,132.75 902.65,131.12 902.65,129.49 902.65,127.86 902.65,126.23 902.65,124.60 902.65,122.97 902.65,121.34 902.65,119.71 902.65,118.08 902.65,116.45 902.65,114.82 902.65,113.19 902.65,111.56 902.65,109.93 902.65,108.30 902.65,106.67 902.65,105.04 902.65,103.41 902.65,101.78 902.65,100.15 902.65,98.52 902.65,96.89 902.65,95.26 902.65,93.63 902.65,92.00 902.65,90.37 902.65,88.74 902.65,87.11 902.65,85.48 902.65,83.85 902.65,82.22 902.65,80.59 902.65,78.96 902.65,77.33 902.65,75.70 902.65,74.07 902.65,72.44 902.65,70.81 902.65,69.18 902.65,67.55 902.65,65.92 902.65,64.29 902.65,62.66 902.65,61.03 902.65,59.40 902.65,57.77 902.65,56.14 902.65,54.51 902.65,52.88 902.65,51.25 902.65,49.62 902.65,47.99 902.65,46.36 902.65,44.73 902.65,43.10 902.65,41.47 902.65,39.84 902.65,38.21 902.65,36.58 902.65,34.95 902.65,33.32 902.65,31.69 902.65,30.06 902.65,28.43 902.65,26.80"/>
<polyline points="902.65,613.60 902.22,611.97 901.80,610.34 901.37,608.71 900.95,607.08 900.52,605.45 900.10,603.82 899.67,602.19 899.25,600.56 898.82,598.93 898.40,597.30 897.97,595.67 897.55,594.04 897.13,592.41 896.71,590.78 896.28,589.15 895.86,587.52 895.44,585.89 895.02,584.26 894.60,582.63 894.18,581.00 893.76,579.37 893.34,577.74 892.92,576.11 892.51,574.48 892.09,572.85 891.68,571.22 891.26,569.59 890.85,567.96 890.44,566.33 890.02,564.70 889.61,563.07 889.20,561.44 888.80,559.81 888.39,558.18 887.98,556.55 887.58,554.92 887.17,553.29 886.77,551.66 886.37,550.03 885.97,548.40 885.57,546.77 885.17,545.14 884.77,543.51 884.38,541.88 883.98,540.25 883.59,538.62 883.20,536.99 882.81,535.36 882.42,533.73 882.03,532.10 881.65,530.47 881.27,528.84 880.88,527.21 880.50,525.58 880.13,523.95 879.75,522.32 879.37,520.69 879.00,519.06 878.63,517.43 878.26,515.80 877.89,514.17 877.53,512.54 877.16,510.91 876.80,509.28 876.44,507.65 876.08,506.02 875.73,504.39 875.37,502.76 875.02,501.13 874.67,499.50 874.32,497.87 873.98,496.24 873.63,494.61 873.29,492.98 872.95,491.35 872.62,489.72 872.28,488.09 871.95,486.46 871.62,484.83 871.29,483.20 870.97,481.57 870.65,479.94 870.33,478.31 870.01,476.68 869.69,475.05 869.38,473.42 869.07,471.79 868.76,470.16 868.46,468.53 868.16,466.90 867.86,465.27 867.56,463.64 867.27,462.01 866.97,460.38 866.69,458.75 866.40,457.12 866.12,455.49 865.84,453.86 865.56,452.23 865.28,450.60 865.01,448.97 864.74,447.34 864.47,445.71 864.21,444.08 863.95,442.45 863.69,440.82 863.44,439.19 863.19,437.56 862.94,435.93 862.69,434.30 862.45,432.67 862.21,431.04 861.97,429.41 861.74,427.78 861.51,426.15 861.28,424.52 861.06,422.89 860.84,421.26 860.62,419.63 860.41,418.00 860.19,416.37 859.99,414.74 859.78,413.11 859.58,411.48 859.38,409.85 859.19,408.22 859.00,406.59 858.81,404.96 858.62,403.33 858.44,401.70 858.26,400.07 858.09,398.44 857.92,396.81 857.75,395.18 857.58,393.55 857.42,391.92 857.26,390.29 857.11,388.66 856.96,387.03 856.81,385.40 856.67,383.77 856.53,382.14 856.39,380.51 856.26,378.88 856.13,377.25 856.00,375.62 855.88,373.99 855.76,372.36 855.64,370.73 855.53,369.10 855.42,367.47 855.32,365.84 855.22,364.21 855.12,362.58 855.03,360.95 854.94,359.32 854.85,357.69 854.77,356.06 854.69,354.43 854.61,352.80 854.54,351.17 854.47,349.54 854.41,347.91 854.34,346.28 854.29,344.65 854.23,343.02 854.18,341.39 854.14,339.76 854.09,338.13 854.06,336.50 854.02,334.87 853.99,333.24 853.96,331.61 853.94,329.98 853.92,328.35 853.90,326.72 853.89,325.09 853.88,323.46 853.87,321.83 853.87,320.20 853.87,318.57 853.88,316.94 853.89,315.31 853.90,313.68 853.92,312.05 853.94,310.42 853.96,308.79 853.99,307.16 854.02,305.53 854.06,303.90 854.09,302.27 854.14,300.64 854.18,299.01 854.23,297.38 854.29,295.75 854.34,294.12 854.41,292.49 854.47,290.86 854.54,289.23 854.61,287.60 854.69,285.97 854.77,284.34 854.85,282.71 854.94,281.08 855.03,279.45 855.12,277.82 855.22,276.19 855.32,274.56 855.42,272.93 855.53,271.30 855.64,269.67 855.76,268.04 855.88,266.41 856.00,264.78 856.13,263.15 856.26,261.52 856.39,259.89 856.53,258.26 856.67,256.63 856.81,255.00 856.96,253.37 857.11,251.74 857.26,250.11 857.42,248.48 857.58,246.85 857.75,245.22 857.92,243.59 858.09,241.96 858.26,240.33 858.44,238.70 858.62,237.07 858.81,235.44 859.00,233.81 859.19,232.18 859.38,230.55 859.58,228.92 859.78,227.29 859.99,225.66 860.19,224.03 860.41,222.40 860.62,220.77 860.84,219.14 861.06,217.51 861.28,215.88 861.51,214.25 861.74,212.62 861.97,210.99 862.21,209.36 862.45,207.73 862.69,206.10 862.94,204.47 863.19,202.84 863.44,201.21 863.69,199.58 863.95,197.95 864.21,196.32 864.47,194.69 864.74,193.06 865.01,191.43 865.28,189.80 865.56,188.17 865.84,186.54 866.12,184.91 866.40,183.28 866.69,181.65 866.97,180.02 867.27,178.39 867.56,176.76 867.86,175.13 868.16,173.50 868.46,171.87 868.76,170.24 869.07,168.61 869.38,166.98 869.69,165.35 870.01,163.72 870.33,162.09 870.65,160.46 870.97,158.83 871.29,157.20 871.62,155.57 871.95,153.94 872.28,152.31 872.62,150.68 872.95,149.05 873.29,147.42 873.63,145.79 873.98,144.16 874.32,142.53 874.67,140.90 875.02,139.27 875.37,137.64 875.73,136.01 876.08,134.38 876.44,132.75 876.80,131.12 877.16,129.49 877.53,127.86 877.89,126.23 878.26,124.60 878.63,122.97 879.00,121.34 879.37,119.71 879.75,118.08 880.13,116.45 880.50,114.82 880.88,113.19 881.27,111.56 881.65,109.93 882.03,108.30 882.42,106.67 882.81,105.04 883.20,103.41 883.59,101.78 883.98,100.15 884.38,98.52 884.77,96.89 885.17,95.26 885.57,93.63 885.97,92.00 886.37,90.37 886.77,88.74 887.17,87.11 887.58,85.48 887.98,83.85 888.39,82.22 888.80,80.59 889.20,78.96 889.61,77.33 890.02,75.70 890.44,74.07 890.85,72.44 891.26,70.81 891.68,69.18 892.09,67.55 892.51,65.92 892.92,64.29 893.34,62.66 893.76,61.03 894.18,59.40 894.60,57.77 895.02,56.14 895.44,54.51 895.86,52.88 896.28,51.25 896.71,49.62 897.13,47.99 897.55,46.36 897.97,44.73 898.40,43.10 898.82,41.47 899.25,39.84 899.67,38.21 900.10,36.58 900.52,34.95 900.95,33.32 901.37,31.69 901.80,30.06 902.22,28.43 902.65,26.80"/>
<polyline points="902.65,613.60 901.80,611.97 900.95,610.34 900.10,608.71 899.25,607.08 898.39,605.45 897.54,603.82 896.69,602.19 895.84,600.56 895.00,598.93 894.15,597.30 893.30,595.67 892.45,594.04 891.61,592.41 890.76,590.78 889.92,589.15 889.07,587.52 888.23,585.89 887.39,584.26 886.55,582.63 885.71,581.00 884.87,579.37 884.03,577.74 883.20,576.11 882.37,574.48 881.53,572.85 880.70,571.22 879.88,569.59 879.05,567.96 878.22,566.33 877.40,564.70 876.58,563.07 875.76,561.44 874.94,559.81 874.13,558.18 873.31,556.55 872.50,554.92 871.69,553.29 870.89,551.66 870.08,550.03 869.28,548.40 868.48,546.77 867.69,545.14 866.89,543.51 866.10,541.88 865.32,540.25 864.53,538.62 863.75,536.99 862.97,535.36 862.19,533.73 861.42,532.10 860.65,530.47 859.88,528.84 859.12,527.21 858.36,525.58 857.60,523.95 856.85,522.32 856.10,520.69 855.35,519.06 854.61,517.43 853.87,515.80 853.13,514.17 852.40,512.54 851.68,510.91 850.95,509.28 850.23,507.65 849.52,506.02 848.80,504.39 848.10,502.76 847.39,501.13 846.69,499.50 846.00,497.87 845.31,496.24 844.62,494.61 843.94,492.98 843.26,491.35 842.59,489.72 841.92,488.09 841.25,486.46 840.59,484.83 839.94,483.20 839.29,481.57 838.64,479.94 838.00,478.31 837.37,476.68 836.74,475.05 836.11,473.42 835.49,471.79 834.88,470.16 834.27,468.53 833.66,466.90 833.07,465.27 832.47,463.64 831.88,462.01 831.30,460.38 830.72,458.75 830.15,457.12 829.58,455.49 829.02,453.86 828.46,452.23 827.91,450.60 827.37,448.97 826.83,447.34 826.30,445.71 825.77,444.08 825.25,442.45 824.74,440.82 824.23,439.19 823.72,437.56 823.22,435.93 822.73,434.30 822.25,432.67 821.77,431.04 821.30,429.41 820.83,427.78 820.37,426.15 819.91,424.52 819.47,422.89 819.02,421.26 818.59,419.63 818.16,418.00 817.74,416.37 817.32,414.74 816.91,413.11 816.51,411.48 816.11,409.85 815.72,408.22 815.34,406.59 814.96,404.96 814.59,403.33 814.23,401.70 813.87,400.07 813.52,398.44 813.18,396.81 812.85,395.18 812.52,393.55 812.19,391.92 811.88,390.29 811.57,388.66 811.27,387.03 810.97,385.40 810.69,383.77 810.41,382.14 810.13,380.51 809.86,378.88 809.61,377.25 809.35,375.62 809.11,373.99 808.87,372.36 808.64,370.73 808.41,369.10 808.20,367.47 807.99,365.84 807.79,364.21 807.59,362.58 807.40,360.95 807.22,359.32 807.05,357.69 806.88,356.06 806.72,354.43 806.57,352.80 806.43,351.17 806.29,349.54 806.16,347.91 806.04,346.28 805.92,344.65 805.82,343.02 805.72,341.39 805.62,339.76 805.54,338.13 805.46,336.50 805.39,334.87 805.33,333.24 805.27,331.61 805.22,329.98 805.18,328.35 805.15,326.72 805.12,325.09 805.10,323.46 805.09,321.83 805.09,320.20 805.09,318.57 805.10,316.94 805.12,315.31 805.15,313.68 805.18,312.05 805.22,310.42 805.27,308.79 805.33,307.16 805.39,305.53 805.46,303.90 805.54,302.27 805.62,300.64 805.72,299.01 805.82,297.38 805.92,295.75 806.04,294.12 806.16,292.49 806.29,290.86 806.43,289.23 806.57,287.60 806.72,285.97 806.88,284.34 807.05,282.71 807.22,281.08 807.40,279.45 807.59,277.82 807.79,276.19 807.99,274.56 808.20,272.93 808.41,271.30 808.64,269.67 808.87,268.04 809.11,266.41 809.35,264.78 809.61,263.15 809.86,261.52 810.13,259.89 810.41,258.26 810.69,256.63 810.97,255.00 811.27,253.37 811.57,251.74 811.88,250.11 812.19,248.48 812.52,246.85 812.85,245.22 813.18,243.59 813.52,241.96 813.87,240.33 814.23,238.70 814.59,237.07 814.96,235.44 815.34,233.81 815.72,232.18 816.11,230.55 816.51,228.92 816.91,227.29 817.32,225.66 817.74,224.03 818.16,222.40 818.59,220.77 819.02,219.14 819.47,217.51 819.91,215.88 820.37,214.25 820.83,212.62 821.30,210.99 821.77,209.36 822.25,207.73 822.73,206.10 823.22,204.47 823.72,202.84 824.23,201.21 824.74,199.58 825.25,197.95 825.77,196.32 826.30,194.69 826.83,193.06 827.37,191.43 827.91,189.80 828.46,188.17 829.02,186.54 829.58,184.91 830.15,183.28 830.72,181.65 831.30,180.02 831.88,178.39 832.47,176.76 833.07,175.13 833.66,173.50 834.27,171.87 834.88,170.24 835.49,168.61 836.11,166.98 836.74,165.35 837.37,163.72 838.00,162.09 838.64,160.46 839.29,158.83 839.94,157.20 840.59,155.57 841.25,153.94 841.92,152.31 842.59,150.68 843.26,149.05 843.94,147.42 844.62,145.79 845.31,144.16 846.00,142.53 846.69,140.90 847.39,139.27 848.10,137.64 848.80,136.01 849.52,134.38 850.23,132.75 850.95,131.12 851.68,129.49 852.40,127.86 853.13,126.23 853.87,124.60 854.61,122.97 855.35,121.34 856.10,119.71 856.85,118.08 857.60,116.45 858.36,114.82 859.12,113.19 859.88,111.56 860.65,109.93 861.42,108.30 862.19,106.67 862.97,105.04 863.75,103.41 864.53,101.78 865.32,100.15 866.10,98.52 866.89,96.89 867.69,95.26 868.48,93.63 869.28,92.00 870.08,90.37 870.89,88.74 871.69,87.11 872.50,85.48 873.31,83.85 874.13,82.22 874.94,80.59 875.76,78.96 876.58,77.33 877.40,75.70 878.22,74.07 879.05,72.44 879.88,70.81 880.70,69.18 881.53,67.55 882.37,65.92 883.20,64.29 884.03,62.66 884.87,61.03 885.71,59.40 886.55,57.77 887.39,56.14 888.23,54.51 889.07,52.88 889.92,51.25 890.76,49.62 891.61,47.99 892.45,46.36 893.30,44.73 894.15,43.10 895.00,41.47 895.84,39.84 896.69,38.21 897.54,36.58 898.39,34.95 899.25,33.32 900.10,31.69 900.95,30.06 901.80,28.43 902.65,26.80"/>
<polyline points="902.65,613.60 901.37,611.97 900.10,610.34 898.82,608.71 897.54,607.08 896.27,605.45 894.99,603.82 893.72,602.19 892.44,600.56 891.17,598.93 889.90,597.30 888.62,595.67 887.35,594.04 886.08,592.41 884.82,590.78 883.55,589.15 882.28,587.52 881.02,585.89 879.76,584.26 878.50,582.63 877.24,581.00 875.98,579.37 874.73,577.74 873.47,576.11 872.22,574.48 870.98,572.85 869.73,571.22 868.49,569.59 867.25,567.96 866.01,566.33 864.77,564.70 863.54,563.07 862.31,561.44 861.09,559.81 859.86,558.18 858.64,556.55 857.43,554.92 856.22,553.29 855.01,551.66 853.80,550.03 852.60,548.40 851.40,546.77 850.21,545.14 849.02,543.51 847.83,541.88 846.65,540.25 845.47,538.62 844.30,536.99 843.13,535.36 841.96,533.73 840.80,532.10 839.65,530.47 838.50,528.84 837.35,527.21 836.21,525.58 835.08,523.95 833.95,522.32 832.82,520.69 831.70,519.06 830.59,517.43 829.48,515.80 828.38,514.17 827.28,512.54 826.19,510.91 825.10,509.28 824.02,507.65 822.95,506.02 821.88,504.39 820.82,502.76 819.76,501.13 818.71,499.50 817.67,497.87 816.63,496.24 815.60,494.61 814.58,492.98 813.56,491.35 812.55,489.72 811.55,488.09 810.56,486.46 809.57,484.83 808.58,483.20 807.61,481.57 806.64,479.94 805.68,478.31 804.73,476.68 803.78,475.05 802.85,473.42 801.92,471.79 800.99,470.16 800.08,468.53 799.17,466.90 798.27,465.27 797.38,463.64 796.50,462.01 795.62,460.38 794.76,458.75 793.90,457.12 793.05,455.49 792.21,453.86 791.37,452.23 790.55,450.60 789.73,448.97 788.92,447.34 788.12,445.71 787.33,444.08 786.55,442.45 785.78,440.82 785.01,439.19 784.26,437.56 783.51,435.93 782.78,434.30 782.05,432.67 781.33,431.04 780.62,429.41 779.92,427.78 779.23,426.15 778.55,424.52 777.87,422.89 777.21,421.26 776.56,419.63 775.92,418.00 775.28,416.37 774.66,414.74 774.04,413.11 773.44,411.48 772.84,409.85 772.26,408.22 771.69,406.59 771.12,404.96 770.57,403.33 770.02,401.70 769.49,400.07 768.96,398.44 768.45,396.81 767.94,395.18 767.45,393.55 766.97,391.92 766.49,390.29 766.03,388.66 765.58,387.03 765.14,385.40 764.70,383.77 764.28,382.14 763.87,380.51 763.47,378.88 763.08,377.25 762.70,375.62 762.34,373.99 761.98,372.36 761.63,370.73 761.30,369.10 760.97,367.47 760.66,365.84 760.35,364.21 760.06,362.58 759.78,360.95 759.51,359.32 759.25,357.69 759.00,356.06 758.76,354.43 758.53,352.80 758.32,351.17 758.11,349.54 757.92,347.91 757.73,346.28 757.56,344.65 757.40,343.02 757.25,341.39 757.11,339.76 756.98,338.13 756.87,336.50 756.76,334.87 756.67,333.24 756.58,331.61 756.51,329.98 756.45,328.35 756.40,326.72 756.36,325.09 756.33,323.46 756.32,321.83 756.31,320.20 756.32,318.57 756.33,316.94 756.36,315.31 756.40,313.68 756.45,312.05 756.51,310.42 756.58,308.79 756.67,307.16 756.76,305.53 756.87,303.90 756.98,302.27 757.11,300.64 757.25,299.01 757.40,297.38 757.56,295.75 757.73,294.12 757.92,292.49 758.11,290.86 758.32,289.23 758.53,287.60 758.76,285.97 759.00,284.34 759.25,282.71 759.51,281.08 759.78,279.45 760.06,277.82 760.35,276.19 760.66,274.56 760.97,272.93 761.30,271.30 761.63,269.67 761.98,268.04 762.34,266.41 762.70,264.78 763.08,263.15 763.47,261.52 763.87,259.89 764.28,258.26 764.70,256.63 765.14,255.00 765.58,253.37 766.03,251.74 766.49,250.11 766.97,248.48 767.45,246.85 767.94,245.22 768.45,243.59 768.96,241.96 769.49,240.33 770.02,238.70 770.57,237.07 771.12,235.44 771.69,233.81 772.26,232.18 772.84,230.55 773.44,228.92 774.04,227.29 774.66,225.66 775.28,224.03 775.92,222.40 776.56,220.77 777.21,219.14 777.87,217.51 778.55,215.88 779.23,214.25 779.92,212.62 780.62,210.99 781.33,209.36 782.05,207.73 782.78,206.10 783.51,204.47 784.26,202.84 785.01,201.21 785.78,199.58 786.55,197.95 787.33,196.32 788.12,194.69 788.92,193.06 789.73,191.43 790.55,189.80 791.37,188.17 792.21,186.54 793.05,184.91 793.90,183.28 794.76,181.65 795.62,180.02 796.50,178.39 797.38,176.76 798.27,175.13 799.17,173.50 800.08,171.87 800.99,170.24 801.92,168.61 802.85,166.98 803.78,165.35 804.73,163.72 805.68,162.09 806.64,160.46 807.61,158.83 808.58,157.20 809.57,155.57 810.56,153.94 811.55,152.31 812.55,150.68 813.56,149.05 814.58,147.42 815.60,145.79 816.63,144.16 817.67,142.53 818.71,140.90 819.76,139.27 820.82,137.64 821.88,136.01 822.95,134.38 824.02,132.75 825.10,131.12 826.19,129.49 827.28,127.86 828.38,126.23 829.48,124.60 830.59,122.97 831.70,121.34 832.82,119.71 833.95,118.08 835.08,116.45 836.21,114.82 837.35,113.19 838.50,111.56 839.65,109.93 840.80,108.30 841.96,106.67 843.13,105.04 844.30,103.41 845.47,101.78 846.65,100.15 847.83,98.52 849.02,96.89 850.21,95.26 851.40,93.63 852.60,92.00 853.80,90.37 855.01,88.74 856.22,87.11 857.43,85.48 858.64,83.85 859.86,82.22 861.09,80.59 862.31,78.96 863.54,77.33 864.77,75.70 866.01,74.07 867.25,72.44 868.49,70.81 869.73,69.18 870.98,67.55 872.22,65.92 873.47,64.29 874.73,62.66 875.98,61.03 877.24,59.40 878.50,57.77 879.76,56.14 881.02,54.51 882.28,52.88 883.55,51.25 884.82,49.62 886.08,47.99 887.35,46.36 888.62,44.73 889.90,43.10 891.17,41.47 892.44,39.84 893.72,38.21 894.99,36.58 896.27,34.95 897.54,33.32 898.82,31.69 900.10,30.06 901.37,28.43 902.65,26.80"/>
<polyline points="902.65,613.60 900.95,611.97 899.24,610.34 897.54,608.71 895.84,607.08 894.14,605.45 892.44,603.82 890.74,602.19 889.04,600.56 887.34,598.93 885.64,597.30 883.95,595.67 882.25,594.04 880.56,592.41 878.87,590.78 877.18,589.15 875.49,587.52 873.81,585.89 872.13,584.26 870.45,582.63 868.77,581.00 867.09,579.37 865.42,577.74 863.75,576.11 862.08,574.48 860.42,572.85 858.76,571.22 857.10,569.59 855.45,567.96 853.80,566.33 852.15,564.70 850.51,563.07 848.87,561.44 847.23,559.81 845.60,558.18 843.98,556.55 842.35,554.92 840.74,553.29 839.13,551.66 837.52,550.03 835.92,548.40 834.32,546.77 832.73,545.14 831.14,543.51 829.56,541.88 827.98,540.25 826.41,538.62 824.85,536.99 823.29,535.36 821.74,533.73 820.19,532.10 818.65,530.47 817.12,528.84 815.59,527.21 814.07,525.58 812.55,523.95 811.05,522.32 809.55,520.69 808.05,519.06 806.57,517.43 805.09,515.80 803.62,514.17 802.16,512.54 800.70,510.91 799.25,509.28 797.81,507.65 796.38,506.02 794.96,504.39 793.54,502.76 792.13,501.13 790.73,499.50 789.34,497.87 787.96,496.24 786.59,494.61 785.22,492.98 783.87,491.35 782.52,489.72 781.18,488.09 779.86,486.46 778.54,484.83 777.23,483.20 775.93,481.57 774.64,479.94 773.36,478.31 772.09,476.68 770.83,475.05 769.58,473.42 768.34,471.79 767.11,470.16 765.89,468.53 764.68,466.90 763.48,465.27 762.29,463.64 761.11,462.01 759.95,460.38 758.79,458.75 757.65,457.12 756.51,455.49 755.39,453.86 754.28,452.23 753.18,450.60 752.09,448.97 751.01,447.34 749.95,445.71 748.89,444.08 747.85,442.45 746.82,440.82 745.80,439.19 744.79,437.56 743.80,435.93 742.82,434.30 741.85,432.67 740.89,431.04 739.94,429.41 739.01,427.78 738.09,426.15 737.18,424.52 736.28,422.89 735.40,421.26 734.53,419.63 733.67,418.00 732.83,416.37 731.99,414.74 731.18,413.11 730.37,411.48 729.58,409.85 728.80,408.22 728.03,406.59 727.28,404.96 726.54,403.33 725.81,401.70 725.10,400.07 724.40,398.44 723.71,396.81 723.04,395.18 722.38,393.55 721.74,391.92 721.11,390.29 720.49,388.66 719.89,387.03 719.30,385.40 718.72,383.77 718.16,382.14 717.61,380.51 717.08,378.88 716.56,377.25 716.06,375.62 715.57,373.99 715.09,372.36 714.63,370.73 714.18,369.10 713.75,367.47 713.33,365.84 712.92,364.21 712.53,362.58 712.16,360.95 711.79,359.32 711.45,357.69 711.11,356.06 710.80,354.43 710.49,352.80 710.21,351.17 709.93,349.54 709.67,347.91 709.43,346.28 709.20,344.65 708.98,343.02 708.78,341.39 708.60,339.76 708.43,338.13 708.27,336.50 708.13,334.87 708.01,333.24 707.89,331.61 707.80,329.98 707.72,328.35 707.65,326.72 707.60,325.09 707.56,323.46 707.54,321.83 707.53,320.20 707.54,318.57 707.56,316.94 707.60,315.31 707.65,313.68 707.72,312.05 707.80,310.42 707.89,308.79 708.01,307.16 708.13,305.53 708.27,303.90 708.43,302.27 708.60,300.64 708.78,299.01 708.98,297.38 709.20,295.75 709.43,294.12 709.67,292.49 709.93,290.86 710.21,289.23 710.49,287.60 710.80,285.97 711.11,284.34 711.45,282.71 711.79,281.08 712.16,279.45 712.53,277.82 712.92,276.19 713.33,274.56 713.75,272.93 714.18,271.30 714.63,269.67 715.09,268.04 715.57,266.41 716.06,264.78 716.56,263.15 717.08,261.52 717.61,259.89 718.16,258.26 718.72,256.63 719.30,255.00 719.89,253.37 720.49,251.74 721.11,250.11 721.74,248.48 722.38,246.85 723.04,245.22 723.71,243.59 724.40,241.96 725.10,240.33 725.81,238.70 726.54,237.07 727.28,235.44 728.03,233.81 728.80,232.18 729.58,230.55 730.37,228.92 731.18,227.29 731.99,225.66 732.83,224.03 733.67,222.40 734.53,220.77 735.40,219.14 736.28,217.51 737.18,215.88 738.09,214.25 739.01,212.62 739.94,210.99 740.89,209.36 741.85,207.73 742.82,206.10 743.80,204.47 744.79,202.84 745.80,201.21 746.82,199.58 747.85,197.95 748.89,196.32 749.95,194.69 751.01,193.06 752.09,191.43 753.18,189.80 754.28,188.17 755.39,186.54 756.51,184.91 757.65,183.28 758.79,181.65 759.95,180.02 761.11,178.39 762.29,176.76 763.48,175.13 764.68,173.50 765.89,171.87 767.11,170.24 768.34,168.61 769.58,166.98 770.83,165.35 772.09,163.72 773.36,162.09 774.64,160.46 775.93,158.83 777.23,157.20 778.54,155.57 779.86,153.94 781.18,152.31 782.52,150.68 783.87,149.05 785.22,147.42 786.59,145.79 787.96,144.16 789.34,142.53 790.73,140.90 792.13,139.27 793.54,137.64 794.96,136.01 796.38,134.38 797.81,132.75 799.25,131.12 800.70,129.49 802.16,127.86 803.62,126.23 805.09,124.60 806.57,122.97 808.05,121.34 809.55,119.71 811.05,118.08 812.55,116.45 814.07,114.82 815.59,113.19 817.12,111.56 818.65,109.93 820.19,108.30 821.74,106.67 823.29,105.04 824.85,103.41 826.41,101.78 827.98,100.15 829.56,98.52 831.14,96.89 832.73,95.26 834.32,93.63 835.92,92.00 837.52,90.37 839.13,88.74 840.74,87.11 842.35,85.48 843.98,83.85 845.60,82.22 847.23,80.59 848.87,78.96 850.51,77.33 852.15,75.70 853.80,74.07 855.45,72.44 857.10,70.81 858.76,69.18 860.42,67.55 862.08,65.92 863.75,64.29 865.42,62.66 867.09,61.03 868.77,59.40 870.45,57.77 872.13,56.14 873.81,54.51 875.49,52.88 877.18,51.25 878.87,49.62 880.56,47.99 882.25,46.36 883.95,44.73 885.64,43.10 887.34,41.47 889.04,39.84 890.74,38.21 892.44,36.58 894.14,34.95 895.84,33.32 897.54,31.69 899.24,30.06 900.95,28.43 902.65,26.80"/>
<polyline points="902.65,613.60 900.52,611.97 898.39,610.34 896.27,608.71 894.14,607.08 892.01,605.45 889.89,603.82 887.76,602.19 885.64,600.56 883.51,598.93 881.39,597.30 879.27,595.67 877.16,594.04 875.04,592.41 872.93,590.78 870.81,589.15 868.71,587.52 866.60,585.89 864.50,584.26 862.39,582.63 860.30,581.00 858.20,579.37 856.11,577.74 854.02,576.11 851.94,574.48 849.86,572.85 847.78,571.22 845.71,569.59 843.65,567.96 841.58,566.33 839.52,564.70 837.47,563.07 835.42,561.44 833.38,559.81 831.34,558.18 829.31,556.55 827.28,554.92 825.26,553.29 823.24,551.66 821.23,550.03 819.23,548.40 817.23,546.77 815.24,545.14 813.26,543.51 811.28,541.88 809.31,540.25 807.35,538.62 805.40,536.99 803.45,535.36 801.51,533.73 799.57,532.10 797.65,530.47 795.73,528.84 793.82,527.21 791.92,525.58 790.03,523.95 788.15,522.32 786.27,520.69 784.40,519.06 782.55,517.43 780.70,515.80 778.86,514.17 777.03,512.54 775.21,510.91 773.40,509.28 771.60,507.65 769.81,506.02 768.03,504.39 766.26,502.76 764.50,501.13 762.75,499.50 761.02,497.87 759.29,496.24 757.57,494.61 755.87,492.98 754.17,491.35 752.49,489.72 750.82,488.09 749.16,486.46 747.51,484.83 745.87,483.20 744.25,481.57 742.64,479.94 741.04,478.31 739.45,476.68 737.87,475.05 736.31,473.42 734.76,471.79 733.22,470.16 731.70,468.53 730.19,466.90 728.69,465.27 727.20,463.64 725.73,462.01 724.27,460.38 722.83,458.75 721.40,457.12 719.98,455.49 718.58,453.86 717.19,452.23 715.81,450.60 714.45,448.97 713.10,447.34 711.77,445.71 710.45,444.08 709.15,442.45 707.86,440.82 706.59,439.19 705.33,437.56 704.09,435.93 702.86,434.30 701.65,432.67 700.45,431.04 699.27,429.41 698.10,427.78 696.95,426.15 695.81,424.52 694.69,422.89 693.59,421.26 692.50,419.63 691.43,418.00 690.37,416.37 689.33,414.74 688.31,413.11 687.30,411.48 686.31,409.85 685.33,408.22 684.38,406.59 683.43,404.96 682.51,403.33 681.60,401.70 680.71,400.07 679.84,398.44 678.98,396.81 678.14,395.18 677.32,393.55 676.51,391.92 675.72,390.29 674.95,388.66 674.20,387.03 673.46,385.40 672.74,383.77 672.04,382.14 671.35,380.51 670.69,378.88 670.04,377.25 669.41,375.62 668.79,373.99 668.20,372.36 667.62,370.73 667.06,369.10 666.52,367.47 665.99,365.84 665.49,364.21 665.00,362.58 664.53,360.95 664.08,359.32 663.65,357.69 663.23,356.06 662.83,354.43 662.46,352.80 662.09,351.17 661.75,349.54 661.43,347.91 661.12,346.28 660.84,344.65 660.57,343.02 660.32,341.39 660.09,339.76 659.87,338.13 659.68,336.50 659.50,334.87 659.34,333.24 659.20,331.61 659.08,329.98 658.98,328.35 658.90,326.72 658.83,325.09 658.79,323.46 658.76,321.83 658.75,320.20 658.76,318.57 658.79,316.94 658.83,315.31 658.90,313.68 658.98,312.05 659.08,310.42 659.20,308.79 659.34,307.16 659.50,305.53 659.68,303.90 659.87,302.27 660.09,300.64 660.32,299.01 660.57,297.38 660.84,295.75 661.12,294.12 661.43,292.49 661.75,290.86 662.09,289.23 662.46,287.60 662.83,285.97 663.23,284.34 663.65,282.71 664.08,281.08 664.53,279.45 665.00,277.82 665.49,276.19 665.99,274.56 666.52,272.93 667.06,271.30 667.62,269.67 668.20,268.04 668.79,266.41 669.41,264.78 670.04,263.15 670.69,261.52 671.35,259.89 672.04,258.26 672.74,256.63 673.46,255.00 674.20,253.37 674.95,251.74 675.72,250.11 676.51,248.48 677.32,246.85 678.14,245.22 678.98,243.59 679.84,241.96 680.71,240.33 681.60,238.70 682.51,237.07 683.43,235.44 684.38,233.81 685.33,232.18 686.31,230.55 687.30,228.92 688.31,227.29 689.33,225.66 690.37,224.03 691.43,222.40 692.50,220.77 693.59,219.14 694.69,217.51 695.81,215.88 696.95,214.25 698.10,212.62 699.27,210.99 700.45,209.36 701.65,207.73 702.86,206.10 704.09,204.47 705.33,202.84 706.59,201.21 707.86,199.58 709.15,197.95 710.45,196.32 711.77,194.69 713.10,193.06 714.45,191.43 715.81,189.80 717.19,188.17 718.58,186.54 719.98,184.91 721.40,183.28 722.83,181.65 724.27,180.02 725.73,178.39 727.20,176.76 728.69,175.13 730.19,173.50 731.70,171.87 733.22,170.24 734.76,168.61 736.31,166.98 737.87,165.35 739.45,163.72 741.04,162.09 742.64,160.46 744.25,158.83 745.87,157.20 747.51,155.57 749.16,153.94 750.82,152.31 752.49,150.68 754.17,149.05 755.87,147.42 757.57,145.79 759.29,144.16 761.02,142.53 762.75,140.90 764.50,139.27 766.26,137.64 768.03,136.01 769.81,134.38 771.60,132.75 773.40,131.12 775.21,129.49 777.03,127.86 778.86,126.23 780.70,124.60 782.55,122.97 784.40,121.34 786.27,119.71 788.15,118.08 790.03,116.45 791.92,114.82 793.82,113.19 795.73,111.56 797.65,109.93 799.57,108.30 801.51,106.67 803.45,105.04 805.40,103.41 807.35,101.78 809.31,100.15 811.28,98.52 813.26,96.89 815.24,95.26 817.23,93.63 819.23,92.00 821.23,90.37 823.24,88.74 825.26,87.11 827.28,85.48 829.31,83.85 831.34,82.22 833.38,80.59 835.42,78.96 837.47,77.33 839.52,75.70 841.58,74.07 843.65,72.44 845.71,70.81 847.78,69.18 849.86,67.55 851.94,65.92 854.02,64.29 856.11,62.66 858.20,61.03 860.30,59.40 862.39,57.77 864.50,56.14 866.60,54.51 868.71,52.88 870.81,51.25 872.93,49.62 875.04,47.99 877.16,46.36 879.27,44.73 881.39,43.10 883.51,41.47 885.64,39.84 887.76,38.21 889.89,36.58 892.01,34.95 894.14,33.32 896.27,31.69 898.39,30.06 900.52,28.43 902.65,26.80"/>
<polyline points="902.65,613.60 900.10,611.97 897.54,610.34 894.99,608.71 892.44,607.08 889.88,605.45 887.33,603.82 884.78,602.19 882.23,600.56 879.69,598.93 877.14,597.30 874.60,595.67 872.06,594.04 869.52,592.41 866.98,590.78 864.45,589.15 861.92,587.52 859.39,585.89 856.86,584.26 854.34,582.63 851.83,581.00 849.31,579.37 846.80,577.74 844.30,576.11 841.80,574.48 839.30,572.85 836.81,571.22 834.33,569.59 831.84,567.96 829.37,566.33 826.90,564.70 824.43,563.07 821.98,561.44 819.52,559.81 817.08,558.18 814.64,556.55 812.21,554.92 809.78,553.29 807.36,551.66 804.95,550.03 802.55,548.40 800.15,546.77 797.76,545.14 795.38,543.51 793.01,541.88 790.65,540.25 788.29,538.62 785.94,536.99 783.61,535.36 781.28,533.73 778.96,532.10 776.65,530.47 774.35,528.84 772.06,527.21 769.78,525.58 767.51,523.95 765.25,522.32 763.00,520.69 760.76,519.06 758.53,517.43 756.31,515.80 754.10,514.17 751.91,512.54 749.73,510.91 747.55,509.28 745.39,507.65 743.25,506.02 741.11,504.39 738.99,502.76 736.87,501.13 734.78,499.50 732.69,497.87 730.62,496.24 728.56,494.61 726.51,492.98 724.48,491.35 722.46,489.72 720.45,488.09 718.46,486.46 716.48,484.83 714.52,483.20 712.57,481.57 710.63,479.94 708.71,478.31 706.81,476.68 704.92,475.05 703.04,473.42 701.18,471.79 699.34,470.16 697.51,468.53 695.69,466.90 693.90,465.27 692.11,463.64 690.35,462.01 688.60,460.38 686.86,458.75 685.15,457.12 683.45,455.49 681.76,453.86 680.09,452.23 678.44,450.60 676.81,448.97 675.19,447.34 673.60,445.71 672.02,444.08 670.45,442.45 668.91,440.82 667.38,439.19 665.87,437.56 664.37,435.93 662.90,434.30 661.44,432.67 660.01,431.04 658.59,429.41 657.19,427.78 655.81,426.15 654.44,424.52 653.10,422.89 651.77,421.26 650.47,419.63 649.18,418.00 647.91,416.37 646.67,414.74 645.44,413.11 644.23,411.48 643.04,409.85 641.87,408.22 640.72,406.59 639.59,404.96 638.48,403.33 637.39,401.70 636.32,400.07 635.27,398.44 634.24,396.81 633.24,395.18 632.25,393.55 631.28,391.92 630.34,390.29 629.41,388.66 628.50,387.03 627.62,385.40 626.76,383.77 625.92,382.14 625.09,380.51 624.29,378.88 623.52,377.25 622.76,375.62 622.02,373.99 621.31,372.36 620.61,370.73 619.94,369.10 619.29,367.47 618.66,365.84 618.06,364.21 617.47,362.58 616.91,360.95 616.37,359.32 615.85,357.69 615.35,356.06 614.87,354.43 614.42,352.80 613.98,351.17 613.57,349.54 613.18,347.91 612.82,346.28 612.47,344.65 612.15,343.02 611.85,341.39 611.57,339.76 611.32,338.13 611.08,336.50 610.87,334.87 610.68,333.24 610.52,331.61 610.37,329.98 610.25,328.35 610.15,326.72 610.07,325.09 610.01,323.46 609.98,321.83 609.97,320.20 609.98,318.57 610.01,316.94 610.07,315.31 610.15,313.68 610.25,312.05 610.37,310.42 610.52,308.79 610.68,307.16 610.87,305.53 611.08,303.90 611.32,302.27 611.57,300.64 611.85,299.01 612.15,297.38 612.47,295.75 612.82,294.12 613.18,292.49 613.57,290.86 613.98,289.23 614.42,287.60 614.87,285.97 615.35,284.34 615.85,282.71 616.37,281.08 616.91,279.45 617.47,277.82 618.06,276.19 618.66,274.56 619.29,272.93 619.94,271.30 620.61,269.67 621.31,268.04 622.02,266.41 622.76,264.78 623.52,263.15 624.29,261.52 625.09,259.89 625.92,258.26 626.76,256.63 627.62,255.00 628.50,253.37 629.41,251.74 630.34,250.11 631.28,248.48 632.25,246.85 633.24,245.22 634.24,243.59 635.27,241.96 636.32,240.33 637.39,238.70 638.48,237.07 639.59,235.44 640.72,233.81 641.87,232.18 643.04,230.55 644.23,228.92 645.44,227.29 646.67,225.66 647.91,224.03 649.18,222.40 650.47,220.77 651.77,219.14 653.10,217.51 654.44,215.88 655.81,214.25 657.19,212.62 658.59,210.99 660.01,209.36 661.44,207.73 662.90,206.10 664.37,204.47 665.87,202.84 667.38,201.21 668.91,199.58 670.45,197.95 672.02,196.32 673.60,194.69 675.19,193.06 676.81,191.43 678.44,189.80 680.09,188.17 681.76,186.54 683.45,184.91 685.15,183.28 686.86,181.65 688.60,180.02 690.35,178.39 692.11,176.76 693.90,175.13 695.69,173.50 697.51,171.87 699.34,170.24 701.18,168.61 703.04,166.98 704.92,165.35 706.81,163.72 708.71,162.09 710.63,160.46 712.57,158.83 714.52,157.20 716.48,155.57 718.46,153.94 720.45,152.31 722.46,150.68 724.48,149.05 726.51,147.42 728.56,145.79 730.62,144.16 732.69,142.53 734.78,140.90 736.87,139.27 738.99,137.64 741.11,136.01 743.25,134.38 745.39,132.75 747.55,131.12 749.73,129.49 751.91,127.86 754.10,126.23 756.31,124.60 758.53,122.97 760.76,121.34 763.00,119.71 765.25,118.08 767.51,116.45 769.78,114.82 772.06,113.19 774.35,111.56 776.65,109.93 778.96,108.30 781.28,106.67 783.61,105.04 785.94,103.41 788.29,101.78 790.65,100.15 793.01,98.52 795.38,96.89 797.76,95.26 800.15,93.63 802.55,92.00 804.95,90.37 807.36,88.74 809.78,87.11 812.21,85.48 814.64,83.85 817.08,82.22 819.52,80.59 821.98,78.96 824.43,77.33 826.90,75.70 829.37,74.07 831.84,72.44 834.33,70.81 836.81,69.18 839.30,67.55 841.80,65.92 844.30,64.29 846.80,62.66 849.31,61.03 851.83,59.40 854.34,57.77 856.86,56.14 859.39,54.51 861.92,52.88 864.45,51.25 866.98,49.62 869.52,47.99 872.06,46.36 874.60,44.73 877.14,43.10 879.69,41.47 882.23,39.84 884.78,38.21 887.33,36.58 889.88,34.95 892.44,33.32 894.99,31.69 897.54,30.06 900.10,28.43 902.65,26.80"/>
<polyline points="902.65,613.60 899.67,611.97 896.69,610.34 893.71,608.71 890.73,607.08 887.76,605.45 884.78,603.82 881.80,602.19 878.83,600.56 875.86,598.93 872.89,597.30 869.92,595.67 866.96,594.04 864.00,592.41 861.04,590.78 858.08,589.15 855.13,587.52 852.18,585.89 849.23,584.26 846.29,582.63 843.36,581.00 840.42,579.37 837.50,577.74 834.57,576.11 831.66,574.48 828.74,572.85 825.84,571.22 822.94,569.59 820.04,567.96 817.16,566.33 814.27,564.70 811.40,563.07 808.53,561.44 805.67,559.81 802.82,558.18 799.97,556.55 797.13,554.92 794.30,553.29 791.48,551.66 788.67,550.03 785.86,548.40 783.07,546.77 780.28,545.14 777.50,543.51 774.74,541.88 771.98,540.25 769.23,538.62 766.49,536.99 763.77,535.36 761.05,533.73 758.34,532.10 755.65,530.47 752.96,528.84 750.29,527.21 747.63,525.58 744.98,523.95 742.34,522.32 739.72,520.69 737.11,519.06 734.51,517.43 731.92,515.80 729.35,514.17 726.79,512.54 724.24,510.91 721.70,509.28 719.18,507.65 716.68,506.02 714.19,504.39 711.71,502.76 709.24,501.13 706.80,499.50 704.36,497.87 701.94,496.24 699.54,494.61 697.15,492.98 694.78,491.35 692.43,489.72 690.09,488.09 687.76,486.46 685.45,484.83 683.16,483.20 680.89,481.57 678.63,479.94 676.39,478.31 674.17,476.68 671.96,475.05 669.77,473.42 667.60,471.79 665.45,470.16 663.32,468.53 661.20,466.90 659.10,465.27 657.02,463.64 654.96,462.01 652.92,460.38 650.90,458.75 648.90,457.12 646.91,455.49 644.95,453.86 643.00,452.23 641.08,450.60 639.17,448.97 637.29,447.34 635.42,445.71 633.58,444.08 631.75,442.45 629.95,440.82 628.17,439.19 626.40,437.56 624.66,435.93 622.94,434.30 621.24,432.67 619.57,431.04 617.91,429.41 616.28,427.78 614.67,426.15 613.08,424.52 611.51,422.89 609.96,421.26 608.44,419.63 606.94,418.00 605.46,416.37 604.00,414.74 602.57,413.11 601.16,411.48 599.77,409.85 598.41,408.22 597.07,406.59 595.75,404.96 594.45,403.33 593.18,401.70 591.93,400.07 590.71,398.44 589.51,396.81 588.33,395.18 587.18,393.55 586.05,391.92 584.95,390.29 583.87,388.66 582.81,387.03 581.78,385.40 580.78,383.77 579.79,382.14 578.84,380.51 577.90,378.88 576.99,377.25 576.11,375.62 575.25,373.99 574.42,372.36 573.61,370.73 572.82,369.10 572.07,367.47 571.33,365.84 570.62,364.21 569.94,362.58 569.28,360.95 568.65,359.32 568.04,357.69 567.46,356.06 566.91,354.43 566.38,352.80 565.87,351.17 565.39,349.54 564.94,347.91 564.51,346.28 564.11,344.65 563.74,343.02 563.38,341.39 563.06,339.76 562.76,338.13 562.49,336.50 562.24,334.87 562.02,333.24 561.83,331.61 561.66,329.98 561.51,328.35 561.40,326.72 561.31,325.09 561.24,323.46 561.20,321.83 561.19,320.20 561.20,318.57 561.24,316.94 561.31,315.31 561.40,313.68 561.51,312.05 561.66,310.42 561.83,308.79 562.02,307.16 562.24,305.53 562.49,303.90 562.76,302.27 563.06,300.64 563.38,299.01 563.74,297.38 564.11,295.75 564.51,294.12 564.94,292.49 565.39,290.86 565.87,289.23 566.38,287.60 566.91,285.97 567.46,284.34 568.04,282.71 568.65,281.08 569.28,279.45 569.94,277.82 570.62,276.19 571.33,274.56 572.07,272.93 572.82,271.30 573.61,269.67 574.42,268.04 575.25,266.41 576.11,264.78 576.99,263.15 577.90,261.52 578.84,259.89 579.79,258.26 580.78,256.63 581.78,255.00 582.81,253.37 583.87,251.74 584.95,250.11 586.05,248.48 587.18,246.85 588.33,245.22 589.51,243.59 590.71,241.96 591.93,240.33 593.18,238.70 594.45,237.07 595.75,235.44 597.07,233.81 598.41,232.18 599.77,230.55 601.16,228.92 602.57,227.29 604.00,225.66 605.46,224.03 606.94,222.40 608.44,220.77 609.96,219.14 611.51,217.51 613.08,215.88 614.67,214.25 616.28,212.62 617.91,210.99 619.57,209.36 621.24,207.73 622.94,206.10 624.66,204.47 626.40,202.84 628.17,201.21 629.95,199.58 631.75,197.95 633.58,196.32 635.42,194.69 637.29,193.06 639.17,191.43 641.08,189.80 643.00,188.17 644.95,186.54 646.91,184.91 648.90,183.28 650.90,181.65 652.92,180.02 654.96,178.39 657.02,176.76 659.10,175.13 661.20,173.50 663.32,171.87 665.45,170.24 667.60,168.61 669.77,166.98 671.96,165.35 674.17,163.72 676.39,162.09 678.63,160.46 680.89,158.83 683.16,157.20 685.45,155.57 687.76,153.94 690.09,152.31 692.43,150.68 694.78,149.05 697.15,147.42 699.54,145.79 701.94,144.16 704.36,142.53 706.80,140.90 709.24,139.27 711.71,137.64 714.19,136.01 716.68,134.38 719.18,132.75 721.70,131.12 724.24,129.49 726.79,127.86 729.35,126.23 731.92,124.60 734.51,122.97 737.11,121.34 739.72,119.71 742.34,118.08 744.98,116.45 747.63,114.82 750.29,113.19 752.96,111.56 755.65,109.93 758.34,108.30 761.05,106.67 763.77,105.04 766.49,103.41 769.23,101.78 771.98,100.15 774.74,98.52 777.50,96.89 780.28,95.26 783.07,93.63 785.86,92.00 788.67,90.37 791.48,88.74 794.30,87.11 797.13,85.48 799.97,83.85 802.82,82.22 805.67,80.59 808.53,78.96 811.40,77.33 814.27,75.70 817.16,74.07 820.04,72.44 822.94,70.81 825.84,69.18 828.74,67.55 831.66,65.92 834.57,64.29 837.50,62.66 840.42,61.03 843.36,59.40 846.29,57.77 849.23,56.14 852.18,54.51 855.13,52.88 858.08,51.25 861.04,49.62 864.00,47.99 866.96,46.36 869.92,44.73 872.89,43.10 875.86,41.47 878.83,39.84 881.80,38.21 884.78,36.58 887.76,34.95 890.73,33.32 893.71,31.69 896.69,30.06 899.67,28.43 902.65,26.80"/>
<polyline points="902.65,613.60 899.24,611.97 895.84,610.34 892.43,608.71 889.03,607.08 885.63,605.45 882.23,603.82 878.83,602.19 875.43,600.56 872.03,598.93 868.64,597.30 865.25,595.67 861.86,594.04 858.47,592.41 855.09,590.78 851.71,589.15 848.34,587.52 844.97,585.89 841.60,584.26 838.24,582.63 834.89,581.00 831.53,579.37 828.19,577.74 824.85,576.11 821.51,574.48 818.19,572.85 814.87,571.22 811.55,569.59 808.24,567.96 804.94,566.33 801.65,564.70 798.36,563.07 795.09,561.44 791.82,559.81 788.55,558.18 785.30,556.55 782.06,554.92 778.83,553.29 775.60,551.66 772.39,550.03 769.18,548.40 765.99,546.77 762.80,545.14 759.63,543.51 756.46,541.88 753.31,540.25 750.17,538.62 747.04,536.99 743.93,535.36 740.82,533.73 737.73,532.10 734.65,530.47 731.58,528.84 728.53,527.21 725.48,525.58 722.46,523.95 719.44,522.32 716.44,520.69 713.46,519.06 710.49,517.43 707.53,515.80 704.59,514.17 701.66,512.54 698.75,510.91 695.85,509.28 692.97,507.65 690.11,506.02 687.26,504.39 684.43,502.76 681.62,501.13 678.82,499.50 676.04,497.87 673.27,496.24 670.53,494.61 667.80,492.98 665.09,491.35 662.39,489.72 659.72,488.09 657.06,486.46 654.43,484.83 651.81,483.20 649.21,481.57 646.63,479.94 644.07,478.31 641.53,476.68 639.01,475.05 636.51,473.42 634.03,471.79 631.57,470.16 629.13,468.53 626.71,466.90 624.31,465.27 621.93,463.64 619.58,462.01 617.25,460.38 614.93,458.75 612.65,457.12 610.38,455.49 608.13,453.86 605.91,452.23 603.71,450.60 601.53,448.97 599.38,447.34 597.24,445.71 595.14,444.08 593.05,442.45 590.99,440.82 588.95,439.19 586.94,437.56 584.95,435.93 582.98,434.30 581.04,432.67 579.13,431.04 577.23,429.41 575.37,427.78 573.52,426.15 571.71,424.52 569.92,422.89 568.15,421.26 566.41,419.63 564.69,418.00 563.00,416.37 561.34,414.74 559.70,413.11 558.09,411.48 556.50,409.85 554.94,408.22 553.41,406.59 551.90,404.96 550.43,403.33 548.97,401.70 547.55,400.07 546.15,398.44 544.78,396.81 543.43,395.18 542.12,393.55 540.83,391.92 539.56,390.29 538.33,388.66 537.12,387.03 535.94,385.40 534.79,383.77 533.67,382.14 532.58,380.51 531.51,378.88 530.47,377.25 529.46,375.62 528.48,373.99 527.53,372.36 526.60,370.73 525.71,369.10 524.84,367.47 524.00,365.84 523.19,364.21 522.41,362.58 521.66,360.95 520.94,359.32 520.24,357.69 519.58,356.06 518.94,354.43 518.34,352.80 517.76,351.17 517.21,349.54 516.70,347.91 516.21,346.28 515.75,344.65 515.32,343.02 514.92,341.39 514.55,339.76 514.21,338.13 513.89,336.50 513.61,334.87 513.36,333.24 513.14,331.61 512.94,329.98 512.78,328.35 512.65,326.72 512.54,325.09 512.47,323.46 512.42,321.83 512.41,320.20 512.42,318.57 512.47,316.94 512.54,315.31 512.65,313.68 512.78,312.05 512.94,310.42 513.14,308.79 513.36,307.16 513.61,305.53 513.89,303.90 514.21,302.27 514.55,300.64 514.92,299.01 515.32,297.38 515.75,295.75 516.21,294.12 516.70,292.49 517.21,290.86 517.76,289.23 518.34,287.60 518.94,285.97 519.58,284.34 520.24,282.71 520.94,281.08 521.66,279.45 522.41,277.82 523.19,276.19 524.00,274.56 524.84,272.93 525.71,271.30 526.60,269.67 527.53,268.04 528.48,266.41 529.46,264.78 530.47,263.15 531.51,261.52 532.58,259.89 533.67,258.26 534.79,256.63 535.94,255.00 537.12,253.37 538.33,251.74 539.56,250.11 540.83,248.48 542.12,246.85 543.43,245.22 544.78,243.59 546.15,241.96 547.55,240.33 548.97,238.70 550.43,237.07 551.90,235.44 553.41,233.81 554.94,232.18 556.50,230.55 558.09,228.92 559.70,227.29 561.34,225.66 563.00,224.03 564.69,222.40 566.41,220.77 568.15,219.14 569.92,217.51 571.71,215.88 573.52,214.25 575.37,212.62 577.23,210.99 579.13,209.36 581.04,207.73 582.98,206.10 584.95,204.47 586.94,202.84 588.95,201.21 590.99,199.58 593.05,197.95 595.14,196.32 597.24,194.69 599.38,193.06 601.53,191.43 603.71,189.80 605.91,188.17 608.13,186.54 610.38,184.91 612.65,183.28 614.93,181.65 617.25,180.02 619.58,178.39 621.93,176.76 624.31,175.13 626.71,173.50 629.13,171.87 631.57,170.24 634.03,168.61 636.51,166.98 639.01,165.35 641.53,163.72 644.07,162.09 646.63,160.46 649.21,158.83 651.81,157.20 654.43,155.57 657.06,153.94 659.72,152.31 662.39,150.68 665.09,149.05 667.80,147.42 670.53,145.79 673.27,144.16 676.04,142.53 678.82,140.90 681.62,139.27 684.43,137.64 687.26,136.01 690.11,134.38 692.97,132.75 695.85,131.12 698.75,129.49 701.66,127.86 704.59,126.23 707.53,124.60 710.49,122.97 713.46,121.34 716.44,119.71 719.44,118.08 722.46,116.45 725.48,114.82 728.53,113.19 731.58,111.56 734.65,109.93 737.73,108.30 740.82,106.67 743.93,105.04 747.04,103.41 750.17,101.78 753.31,100.15 756.46,98.52 759.63,96.89 762.80,95.26 765.99,93.63 769.18,92.00 772.39,90.37 775.60,88.74 778.83,87.11 782.06,85.48 785.30,83.85 788.55,82.22 791.82,80.59 795.09,78.96 798.36,77.33 801.65,75.70 804.94,74.07 808.24,72.44 811.55,70.81 814.87,69.18 818.19,67.55 821.51,65.92 824.85,64.29 828.19,62.66 831.53,61.03 834.89,59.40 838.24,57.77 841.60,56.14 844.97,54.51 848.34,52.88 851.71,51.25 855.09,49.62 858.47,47.99 861.86,46.36 865.25,44.73 868.64,43.10 872.03,41.47 875.43,39.84 878.83,38.21 882.23,36.58 885.63,34.95 889.03,33.32 892.43,31.69 895.84,30.06 899.24,28.43 902.65,26.80"/>
<polyline points="902.65,613.60 898.82,611.97 894.99,610.34 891.16,608.71 887.33,607.08 883.50,605.45 879.67,603.82 875.85,602.19 872.03,600.56 868.20,598.93 864.39,597.30 860.57,595.67 856.76,594.04 852.95,592.41 849.15,590.78 845.35,589.15 841.55,587.52 837.76,585.89 833.97,584.26 830.19,582.63 826.41,581.00 822.64,579.37 818.88,577.74 815.12,576.11 811.37,574.48 807.63,572.85 803.89,571.22 800.16,569.59 796.44,567.96 792.73,566.33 789.02,564.70 785.33,563.07 781.64,561.44 777.96,559.81 774.29,558.18 770.63,556.55 766.99,554.92 763.35,553.29 759.72,551.66 756.10,550.03 752.50,548.40 748.90,546.77 745.32,545.14 741.75,543.51 738.19,541.88 734.64,540.25 731.11,538.62 727.59,536.99 724.08,535.36 720.59,533.73 717.11,532.10 713.65,530.47 710.20,528.84 706.76,527.21 703.34,525.58 699.93,523.95 696.54,522.32 693.17,520.69 689.81,519.06 686.47,517.43 683.14,515.80 679.83,514.17 676.54,512.54 673.26,510.91 670.00,509.28 666.76,507.65 663.54,506.02 660.34,504.39 657.15,502.76 653.99,501.13 650.84,499.50 647.71,497.87 644.60,496.24 641.51,494.61 638.44,492.98 635.39,491.35 632.36,489.72 629.35,488.09 626.37,486.46 623.40,484.83 620.45,483.20 617.53,481.57 614.63,479.94 611.75,478.31 608.89,476.68 606.05,475.05 603.24,473.42 600.45,471.79 597.68,470.16 594.94,468.53 592.22,466.90 589.52,465.27 586.85,463.64 584.20,462.01 581.57,460.38 578.97,458.75 576.39,457.12 573.84,455.49 571.32,453.86 568.82,452.23 566.34,450.60 563.89,448.97 561.47,447.34 559.07,445.71 556.70,444.08 554.35,442.45 552.03,440.82 549.74,439.19 547.48,437.56 545.24,435.93 543.03,434.30 540.84,432.67 538.69,431.04 536.56,429.41 534.46,427.78 532.38,426.15 530.34,424.52 528.32,422.89 526.34,421.26 524.38,419.63 522.45,418.00 520.55,416.37 518.67,414.74 516.83,413.11 515.02,411.48 513.23,409.85 511.48,408.22 509.76,406.59 508.06,404.96 506.40,403.33 504.76,401.70 503.16,400.07 501.59,398.44 500.04,396.81 498.53,395.18 497.05,393.55 495.60,391.92 494.18,390.29 492.79,388.66 491.43,387.03 490.11,385.40 488.81,383.77 487.55,382.14 486.32,380.51 485.12,378.88 483.95,377.25 482.81,375.62 481.71,373.99 480.64,372.36 479.60,370.73 478.59,369.10 477.61,367.47 476.67,365.84 475.76,364.21 474.88,362.58 474.04,360.95 473.22,359.32 472.44,357.69 471.70,356.06 470.98,354.43 470.30,352.80 469.65,351.17 469.04,349.54 468.45,347.91 467.90,346.28 467.39,344.65 466.90,343.02 466.45,341.39 466.03,339.76 465.65,338.13 465.30,336.50 464.98,334.87 464.70,333.24 464.45,331.61 464.23,329.98 464.05,328.35 463.90,326.72 463.78,325.09 463.70,323.46 463.65,321.83 463.63,320.20 463.65,318.57 463.70,316.94 463.78,315.31 463.90,313.68 464.05,312.05 464.23,310.42 464.45,308.79 464.70,307.16 464.98,305.53 465.30,303.90 465.65,302.27 466.03,300.64 466.45,299.01 466.90,297.38 467.39,295.75 467.90,294.12 468.45,292.49 469.04,290.86 469.65,289.23 470.30,287.60 470.98,285.97 471.70,284.34 472.44,282.71 473.22,281.08 474.04,279.45 474.88,277.82 475.76,276.19 476.67,274.56 477.61,272.93 478.59,271.30 479.60,269.67 480.64,268.04 481.71,266.41 482.81,264.78 483.95,263.15 485.12,261.52 486.32,259.89 487.55,258.26 488.81,256.63 490.11,255.00 491.43,253.37 492.79,251.74 494.18,250.11 495.60,248.48 497.05,246.85 498.53,245.22 500.04,243.59 501.59,241.96 503.16,240.33 504.76,238.70 506.40,237.07 508.06,235.44 509.76,233.81 511.48,232.18 513.23,230.55 515.02,228.92 516.83,227.29 518.67,225.66 520.55,224.03 522.45,222.40 524.38,220.77 526.34,219.14 528.32,217.51 530.34,215.88 532.38,214.25 534.46,212.62 536.56,210.99 538.69,209.36 540.84,207.73 543.03,206.10 545.24,204.47 547.48,202.84 549.74,201.21 552.03,199.58 554.35,197.95 556.70,196.32 559.07,194.69 561.47,193.06 563.89,191.43 566.34,189.80 568.82,188.17 571.32,186.54 573.84,184.91 576.39,183.28 578.97,181.65 581.57,180.02 584.20,178.39 586.85,176.76 589.52,175.13 592.22,173.50 594.94,171.87 597.68,170.24 600.45,168.61 603.24,166.98 606.05,165.35 608.89,163.72 611.75,162.09 614.63,160.46 617.53,158.83 620.45,157.20 623.40,155.57 626.37,153.94 629.35,152.31 632.36,150.68 635.39,149.05 638.44,147.42 641.51,145.79 644.60,144.16 647.71,142.53 650.84,140.90 653.99,139.27 657.15,137.64 660.34,136.01 663.54,134.38 666.76,132.75 670.00,131.12 673.26,129.49 676.54,127.86 679.83,126.23 683.14,124.60 686.47,122.97 689.81,121.34 693.17,119.71 696.54,118.08 699.93,116.45 703.34,114.82 706.76,113.19 710.20,111.56 713.65,109.93 717.11,108.30 720.59,106.67 724.08,105.04 727.59,103.41 731.11,101.78 734.64,100.15 738.19,98.52 741.75,96.89 745.32,95.26 748.90,93.63 752.50,92.00 756.10,90.37 759.72,88.74 763.35,87.11 766.99,85.48 770.63,83.85 774.29,82.22 777.96,80.59 781.64,78.96 785.33,77.33 789.02,75.70 792.73,74.07 796.44,72.44 800.16,70.81 803.89,69.18 807.63,67.55 811.37,65.92 815.12,64.29 818.88,62.66 822.64,61.03 826.41,59.40 830.19,57.77 833.97,56.14 837.76,54.51 841.55,52.88 845.35,51.25 849.15,49.62 852.95,47.99 856.76,46.36 860.57,44.73 864.39,43.10 868.20,41.47 872.03,39.84 875.85,38.21 879.67,36.58 883.50,34.95 887.33,33.32 891.16,31.69 894.99,30.06 898.82,28.43 902.65,26.80"/>
<polyline points="902.65,613.60 898.39,611.97 894.14,610.34 889.88,608.71 885.63,607.08 881.37,605.45 877.12,603.82 872.87,602.19 868.62,600.56 864.38,598.93 860.14,597.30 855.90,595.67 851.66,594.04 847.43,592.41 843.20,590.78 838.98,589.15 834.76,587.52 830.55,585.89 826.34,584.26 822.14,582.63 817.94,581.00 813.76,579.37 809.57,577.74 805.40,576.11 801.23,574.48 797.07,572.85 792.92,571.22 788.78,569.59 784.64,567.96 780.51,566.33 776.40,564.70 772.29,563.07 768.19,561.44 764.11,559.81 760.03,558.18 755.97,556.55 751.91,554.92 747.87,553.29 743.84,551.66 739.82,550.03 735.81,548.40 731.82,546.77 727.84,545.14 723.87,543.51 719.92,541.88 715.98,540.25 712.05,538.62 708.14,536.99 704.24,535.36 700.36,533.73 696.50,532.10 692.65,530.47 688.81,528.84 684.99,527.21 681.19,525.58 677.41,523.95 673.64,522.32 669.89,520.69 666.16,519.06 662.45,517.43 658.75,515.80 655.07,514.17 651.41,512.54 647.78,510.91 644.16,509.28 640.56,507.65 636.98,506.02 633.42,504.39 629.88,502.76 626.36,501.13 622.86,499.50 619.38,497.87 615.93,496.24 612.50,494.61 609.08,492.98 605.70,491.35 602.33,489.72 598.99,488.09 595.67,486.46 592.37,484.83 589.10,483.20 585.85,481.57 582.62,479.94 579.42,478.31 576.25,476.68 573.10,475.05 569.97,473.42 566.87,471.79 563.80,470.16 560.75,468.53 557.72,466.90 554.73,465.27 551.76,463.64 548.81,462.01 545.90,460.38 543.01,458.75 540.14,457.12 537.31,455.49 534.50,453.86 531.72,452.23 528.97,450.60 526.25,448.97 523.56,447.34 520.89,445.71 518.26,444.08 515.65,442.45 513.08,440.82 510.53,439.19 508.01,437.56 505.52,435.93 503.07,434.30 500.64,432.67 498.25,431.04 495.88,429.41 493.55,427.78 491.24,426.15 488.97,424.52 486.73,422.89 484.52,421.26 482.35,419.63 480.20,418.00 478.09,416.37 476.01,414.74 473.96,413.11 471.95,411.48 469.97,409.85 468.02,408.22 466.10,406.59 464.22,404.96 462.37,403.33 460.55,401.70 458.77,400.07 457.02,398.44 455.31,396.81 453.63,395.18 451.98,393.55 450.37,391.92 448.79,390.29 447.25,388.66 445.74,387.03 444.27,385.40 442.83,383.77 441.43,382.14 440.06,380.51 438.72,378.88 437.43,377.25 436.16,375.62 434.94,373.99 433.75,372.36 432.59,370.73 431.47,369.10 430.39,367.47 429.34,365.84 428.33,364.21 427.35,362.58 426.41,360.95 425.51,359.32 424.64,357.69 423.81,356.06 423.02,354.43 422.26,352.80 421.54,351.17 420.86,349.54 420.21,347.91 419.60,346.28 419.02,344.65 418.49,343.02 417.99,341.39 417.52,339.76 417.10,338.13 416.71,336.50 416.35,334.87 416.04,333.24 415.76,331.61 415.52,329.98 415.31,328.35 415.15,326.72 415.02,325.09 414.92,323.46 414.87,321.83 414.85,320.20 414.87,318.57 414.92,316.94 415.02,315.31 415.15,313.68 415.31,312.05 415.52,310.42 415.76,308.79 416.04,307.16 416.35,305.53 416.71,303.90 417.10,302.27 417.52,300.64 417.99,299.01 418.49,297.38 419.02,295.75 419.60,294.12 420.21,292.49 420.86,290.86 421.54,289.23 422.26,287.60 423.02,285.97 423.81,284.34 424.64,282.71 425.51,281.08 426.41,279.45 427.35,277.82 428.33,276.19 429.34,274.56 430.39,272.93 431.47,271.30 432.59,269.67 433.75,268.04 434.94,266.41 436.16,264.78 437.43,263.15 438.72,261.52 440.06,259.89 441.43,258.26 442.83,256.63 444.27,255.00 445.74,253.37 447.25,251.74 448.79,250.11 450.37,248.48 451.98,246.85 453.63,245.22 455.31,243.59 457.02,241.96 458.77,240.33 460.55,238.70 462.37,237.07 464.22,235.44 466.10,233.81 468.02,232.18 469.97,230.55 471.95,228.92 473.96,227.29 476.01,225.66 478.09,224.03 480.20,222.40 482.35,220.77 484.52,219.14 486.73,217.51 488.97,215.88 491.24,214.25 493.55,212.62 495.88,210.99 498.25,209.36 500.64,207.73 503.07,206.10 505.52,204.47 508.01,202.84 510.53,201.21 513.08,199.58 515.65,197.95 518.26,196.32 520.89,194.69 523.56,193.06 526.25,191.43 528.97,189.80 531.72,188.17 534.50,186.54 537.31,184.91 540.14,183.28 543.01,181.65 545.90,180.02 548.81,178.39 551.76,176.76 554.73,175.13 557.72,173.50 560.75,171.87 563.80,170.24 566.87,168.61 569.97,166.98 573.10,165.35 576.25,163.72 579.42,162.09 582.62,160.46 585.85,158.83 589.10,157.20 592.37,155.57 595.67,153.94 598.99,152.31 602.33,150.68 605.70,149.05 609.08,147.42 612.50,145.79 615.93,144.16 619.38,142.53 622.86,140.90 626.36,139.27 629.88,137.64 633.42,136.01 636.98,134.38 640.56,132.75 644.16,131.12 647.78,129.49 651.41,127.86 655.07,126.23 658.75,124.60 662.45,122.97 666.16,121.34 669.89,119.71 673.64,118.08 677.41,116.45 681.19,114.82 684.99,113.19 688.81,111.56 692.65,109.93 696.50,108.30 700.36,106.67 704.24,105.04 708.14,103.41 712.05,101.78 715.98,100.15 719.92,98.52 723.87,96.89 727.84,95.26 731.82,93.63 735.81,92.00 739.82,90.37 743.84,88.74 747.87,87.11 751.91,85.48 755.97,83.85 760.03,82.22 764.11,80.59 768.19,78.96 772.29,77.33 776.40,75.70 780.51,74.07 784.64,72.44 788.78,70.81 792.92,69.18 797.07,67.55 801.23,65.92 805.40,64.29 809.57,62.66 813.76,61.03 817.94,59.40 822.14,57.77 826.34,56.14 830.55,54.51 834.76,52.88 838.98,51.25 843.20,49.62 847.43,47.99 851.66,46.36 855.90,44.73 860.14,43.10 864.38,41.47 868.62,39.84 872.87,38.21 877.12,36.58 881.37,34.95 885.63,33.32 889.88,31.69 894.14,30.06 898.39,28.43 902.65,26.80"/>
<polyline points="902.65,613.60 897.97,611.97 893.29,610.34 888.60,608.71 883.92,607.08 879.24,605.45 874.57,603.82 869.89,602.19 865.22,600.56 860.55,598.93 855.88,597.30 851.22,595.67 846.56,594.04 841.91,592.41 837.26,590.78 832.61,589.15 827.97,587.52 823.34,585.89 818.71,584.26 814.09,582.63 809.47,581.00 804.87,579.37 800.27,577.74 795.67,576.11 791.09,574.48 786.51,572.85 781.95,571.22 777.39,569.59 772.84,567.96 768.30,566.33 763.77,564.70 759.26,563.07 754.75,561.44 750.25,559.81 745.77,558.18 741.30,556.55 736.84,554.92 732.39,553.29 727.96,551.66 723.54,550.03 719.13,548.40 714.74,546.77 710.36,545.14 705.99,543.51 701.64,541.88 697.31,540.25 692.99,538.62 688.69,536.99 684.40,535.36 680.13,533.73 675.88,532.10 671.65,530.47 667.43,528.84 663.23,527.21 659.05,525.58 654.88,523.95 650.74,522.32 646.62,520.69 642.51,519.06 638.43,517.43 634.36,515.80 630.32,514.17 626.29,512.54 622.29,510.91 618.31,509.28 614.35,507.65 610.41,506.02 606.49,504.39 602.60,502.76 598.73,501.13 594.88,499.50 591.06,497.87 587.26,496.24 583.48,494.61 579.73,492.98 576.00,491.35 572.30,489.72 568.62,488.09 564.97,486.46 561.34,484.83 557.74,483.20 554.17,481.57 550.62,479.94 547.10,478.31 543.61,476.68 540.14,475.05 536.70,473.42 533.29,471.79 529.91,470.16 526.56,468.53 523.23,466.90 519.93,465.27 516.67,463.64 513.43,462.01 510.22,460.38 507.04,458.75 503.89,457.12 500.78,455.49 497.69,453.86 494.63,452.23 491.61,450.60 488.61,448.97 485.65,447.34 482.72,445.71 479.82,444.08 476.95,442.45 474.12,440.82 471.32,439.19 468.55,437.56 465.81,435.93 463.11,434.30 460.44,432.67 457.81,431.04 455.20,429.41 452.64,427.78 450.10,426.15 447.60,424.52 445.14,422.89 442.71,421.26 440.32,419.63 437.96,418.00 435.63,416.37 433.35,414.74 431.09,413.11 428.88,411.48 426.70,409.85 424.55,408.22 422.45,406.59 420.38,404.96 418.34,403.33 416.34,401.70 414.38,400.07 412.46,398.44 410.57,396.81 408.73,395.18 406.91,393.55 405.14,391.92 403.41,390.29 401.71,388.66 400.05,387.03 398.43,385.40 396.85,383.77 395.30,382.14 393.80,380.51 392.33,378.88 390.90,377.25 389.52,375.62 388.17,373.99 386.86,372.36 385.59,370.73 384.35,369.10 383.16,367.47 382.01,365.84 380.90,364.21 379.82,362.58 378.79,360.95 377.80,359.32 376.84,357.69 375.93,356.06 375.06,354.43 374.22,352.80 373.43,351.17 372.68,349.54 371.96,347.91 371.29,346.28 370.66,344.65 370.07,343.02 369.52,341.39 369.01,339.76 368.54,338.13 368.11,336.50 367.72,334.87 367.38,333.24 367.07,331.61 366.81,329.98 366.58,328.35 366.40,326.72 366.25,325.09 366.15,323.46 366.09,321.83 366.07,320.20 366.09,318.57 366.15,316.94 366.25,315.31 366.40,313.68 366.58,312.05 366.81,310.42 367.07,308.79 367.38,307.16 367.72,305.53 368.11,303.90 368.54,302.27 369.01,300.64 369.52,299.01 370.07,297.38 370.66,295.75 371.29,294.12 371.96,292.49 372.68,290.86 373.43,289.23 374.22,287.60 375.06,285.97 375.93,284.34 376.84,282.71 377.80,281.08 378.79,279.45 379.82,277.82 380.90,276.19 382.01,274.56 383.16,272.93 384.35,271.30 385.59,269.67 386.86,268.04 388.17,266.41 389.52,264.78 390.90,263.15 392.33,261.52 393.80,259.89 395.30,258.26 396.85,256.63 398.43,255.00 400.05,253.37 401.71,251.74 403.41,250.11 405.14,248.48 406.91,246.85 408.73,245.22 410.57,243.59 412.46,241.96 414.38,240.33 416.34,238.70 418.34,237.07 420.38,235.44 422.45,233.81 424.55,232.18 426.70,230.55 428.88,228.92 431.09,227.29 433.35,225.66 435.63,224.03 437.96,222.40 440.32,220.77 442.71,219.14 445.14,217.51 447.60,215.88 450.10,214.25 452.64,212.62 455.20,210.99 457.81,209.36 460.44,207.73 463.11,206.10 465.81,204.47 468.55,202.84 471.32,201.21 474.12,199.58 476.95,197.95 479.82,196.32 482.72,194.69 485.65,193.06 488.61,191.43 491.61,189.80 494.63,188.17 497.69,186.54 500.78,184.91 503.89,183.28 507.04,181.65 510.22,180.02 513.43,178.39 516.67,176.76 519.93,175.13 523.23,173.50 526.56,171.87 529.91,170.24 533.29,168.61 536.70,166.98 540.14,165.35 543.61,163.72 547.10,162.09 550.62,160.46 554.17,158.83 557.74,157.20 561.34,155.57 564.97,153.94 568.62,152.31 572.30,150.68 576.00,149.05 579.73,147.42 583.48,145.79 587.26,144.16 591.06,142.53 594.88,140.90 598.73,139.27 602.60,137.64 606.49,136.01 610.41,134.38 614.35,132.75 618.31,131.12 622.29,129.49 626.29,127.86 630.32,126.23 634.36,124.60 638.43,122.97 642.51,121.34 646.62,119.71 650.74,118.08 654.88,116.45 659.05,114.82 663.23,113.19 667.43,111.56 671.65,109.93 675.88,108.30 680.13,106.67 684.40,105.04 688.69,103.41 692.99,101.78 697.31,100.15 701.64,98.52 705.99,96.89 710.36,95.26 714.74,93.63 719.13,92.00 723.54,90.37 727.96,88.74 732.39,87.11 736.84,85.48 741.30,83.85 745.77,82.22 750.25,80.59 754.75,78.96 759.26,77.33 763.77,75.70 768.30,74.07 772.84,72.44 777.39,70.81 781.95,69.18 786.51,67.55 791.09,65.92 795.67,64.29 800.27,62.66 804.87,61.03 809.47,59.40 814.09,57.77 818.71,56.14 823.34,54.51 827.97,52.88 832.61,51.25 837.26,49.62 841.91,47.99 846.56,46.36 851.22,44.73 855.88,43.10 860.55,41.47 865.22,39.84 869.89,38.21 874.57,36.58 879.24,34.95 883.92,33.32 888.60,31.69 893.29,30.06 897.97,28.43 902.65,26.80"/>
<polyline points="902.65,613.60 897.54,611.97 892.43,610.34 887.33,608.71 882.22,607.08 877.12,605.45 872.01,603.82 866.91,602.19 861.82,600.56 856.72,598.93 851.63,597.30 846.55,595.67 841.46,594.04 836.39,592.41 831.31,590.78 826.25,589.15 821.18,587.52 816.13,585.89 811.08,584.26 806.04,582.63 801.00,581.00 795.98,579.37 790.96,577.74 785.95,576.11 780.95,574.48 775.95,572.85 770.97,571.22 766.00,569.59 761.04,567.96 756.09,566.33 751.15,564.70 746.22,563.07 741.30,561.44 736.40,559.81 731.51,558.18 726.63,556.55 721.76,554.92 716.91,553.29 712.08,551.66 707.25,550.03 702.45,548.40 697.65,546.77 692.88,545.14 688.11,543.51 683.37,541.88 678.64,540.25 673.93,538.62 669.24,536.99 664.56,535.36 659.91,533.73 655.27,532.10 650.65,530.47 646.05,528.84 641.46,527.21 636.90,525.58 632.36,523.95 627.84,522.32 623.34,520.69 618.86,519.06 614.40,517.43 609.97,515.80 605.56,514.17 601.17,512.54 596.80,510.91 592.46,509.28 588.14,507.65 583.84,506.02 579.57,504.39 575.32,502.76 571.10,501.13 566.90,499.50 562.73,497.87 558.58,496.24 554.46,494.61 550.37,492.98 546.31,491.35 542.27,489.72 538.25,488.09 534.27,486.46 530.32,484.83 526.39,483.20 522.49,481.57 518.62,479.94 514.78,478.31 510.97,476.68 507.19,475.05 503.44,473.42 499.71,471.79 496.02,470.16 492.37,468.53 488.74,466.90 485.14,465.27 481.58,463.64 478.04,462.01 474.54,460.38 471.08,458.75 467.64,457.12 464.24,455.49 460.87,453.86 457.54,452.23 454.24,450.60 450.97,448.97 447.74,447.34 444.54,445.71 441.38,444.08 438.25,442.45 435.16,440.82 432.10,439.19 429.08,437.56 426.10,435.93 423.15,434.30 420.24,432.67 417.36,431.04 414.53,429.41 411.73,427.78 408.96,426.15 406.24,424.52 403.55,422.89 400.90,421.26 398.29,419.63 395.71,418.00 393.18,416.37 390.68,414.74 388.23,413.11 385.81,411.48 383.43,409.85 381.09,408.22 378.79,406.59 376.53,404.96 374.31,403.33 372.13,401.70 370.00,400.07 367.90,398.44 365.84,396.81 363.82,395.18 361.85,393.55 359.91,391.92 358.02,390.29 356.17,388.66 354.36,387.03 352.59,385.40 350.87,383.77 349.18,382.14 347.54,380.51 345.94,378.88 344.38,377.25 342.87,375.62 341.40,373.99 339.97,372.36 338.58,370.73 337.24,369.10 335.94,367.47 334.68,365.84 333.46,364.21 332.29,362.58 331.17,360.95 330.08,359.32 329.04,357.69 328.04,356.06 327.09,354.43 326.18,352.80 325.32,351.17 324.50,349.54 323.72,347.91 322.99,346.28 322.30,344.65 321.65,343.02 321.05,341.39 320.50,339.76 319.98,338.13 319.52,336.50 319.09,334.87 318.72,333.24 318.38,331.61 318.09,329.98 317.85,328.35 317.65,326.72 317.49,325.09 317.38,323.46 317.31,321.83 317.29,320.20 317.31,318.57 317.38,316.94 317.49,315.31 317.65,313.68 317.85,312.05 318.09,310.42 318.38,308.79 318.72,307.16 319.09,305.53 319.52,303.90 319.98,302.27 320.50,300.64 321.05,299.01 321.65,297.38 322.30,295.75 322.99,294.12 323.72,292.49 324.50,290.86 325.32,289.23 326.18,287.60 327.09,285.97 328.04,284.34 329.04,282.71 330.08,281.08 331.17,279.45 332.29,277.82 333.46,276.19 334.68,274.56 335.94,272.93 337.24,271.30 338.58,269.67 339.97,268.04 341.40,266.41 342.87,264.78 344.38,263.15 345.94,261.52 347.54,259.89 349.18,258.26 350.87,256.63 352.59,255.00 354.36,253.37 356.17,251.74 358.02,250.11 359.91,248.48 361.85,246.85 363.82,245.22 365.84,243.59 367.90,241.96 370.00,240.33 372.13,238.70 374.31,237.07 376.53,235.44 378.79,233.81 381.09,232.18 383.43,230.55 385.81,228.92 388.23,227.29 390.68,225.66 393.18,224.03 395.71,222.40 398.29,220.77 400.90,219.14 403.55,217.51 406.24,215.88 408.96,214.25 411.73,212.62 414.53,210.99 417.36,209.36 420.24,207.73 423.15,206.10 426.10,204.47 429.08,202.84 432.10,201.21 435.16,199.58 438.25,197.95 441.38,196.32 444.54,194.69 447.74,193.06 450.97,191.43 454.24,189.80 457.54,188.17 460.87,186.54 464.24,184.91 467.64,183.28 471.08,181.65 474.54,180.02 478.04,178.39 481.58,176.76 485.14,175.13 488.74,173.50 492.37,171.87 496.02,170.24 499.71,168.61 503.44,166.98 507.19,165.35 510.97,163.72 514.78,162.09 518.62,160.46 522.49,158.83 526.39,157.20 530.32,155.57 534.27,153.94 538.25,152.31 542.27,150.68 546.31,149.05 550.37,147.42 554.46,145.79 558.58,144.16 562.73,142.53 566.90,140.90 571.10,139.27 575.32,137.64 579.57,136.01 583.84,134.38 588.14,132.75 592.46,131.12 596.80,129.49 601.17,127.86 605.56,126.23 609.97,124.60 614.40,122.97 618.86,121.34 623.34,119.71 627.84,118.08 632.36,116.45 636.90,114.82 641.46,113.19 646.05,111.56 650.65,109.93 655.27,108.30 659.91,106.67 664.56,105.04 669.24,103.41 673.93,101.78 678.64,100.15 683.37,98.52 688.11,96.89 692.88,95.26 697.65,93.63 702.45,92.00 707.25,90.37 712.08,88.74 716.91,87.11 721.76,85.48 726.63,83.85 731.51,82.22 736.40,80.59 741.30,78.96 746.22,77.33 751.15,75.70 756.09,74.07 761.04,72.44 766.00,70.81 770.97,69.18 775.95,67.55 780.95,65.92 785.95,64.29 790.96,62.66 795.98,61.03 801.00,59.40 806.04,57.77 811.08,56.14 816.13,54.51 821.18,52.88 826.25,51.25 831.31,49.62 836.39,47.99 841.46,46.36 846.55,44.73 851.63,43.10 856.72,41.47 861.82,39.84 866.91,38.21 872.01,36.58 877.12,34.95 882.22,33.32 887.33,31.69 892.43,30.06 897.54,28.43 902.65,26.80"/>
<line x1="751.15" y1="564.70" x2="1054.15" y2="564.70"/>
<line x1="609.97" y1="515.80" x2="1195.33" y2="515.80"/>
<line x1="488.74" y1="466.90" x2="1316.56" y2="466.90"/>
<line x1="395.71" y1="418.00" x2="1409.59" y2="418.00"/>
<line x1="337.24" y1="369.10" x2="1468.06" y2="369.10"/>
<line x1="317.29" y1="320.20" x2="1488.01" y2="320.20"/>
<line x1="337.24" y1="271.30" x2="1468.06" y2="271.30"/>
<line x1="395.71" y1="222.40" x2="1409.59" y2="222.40"/>
<line x1="488.74" y1="173.50" x2="1316.56" y2="173.50"/>
<line x1="609.97" y1="124.60" x2="1195.33" y2="124.60"/>
<line x1="751.15" y1="75.70" x2="1054.15" y2="75.70"/>
</g>
<g font-family="Liberation Sans, sans-serif" font-size="10.8" fill="#9a9a9a" text-anchor="middle">
<text transform="translate(315.63,330.20) scale(1.055,1)">+180<tspan font-size="6.5" dx="1.8" dy="-3">°</tspan></text>
<text transform="translate(413.43,330.20) scale(1.055,1)">+150<tspan font-size="6.5" dx="1.8" dy="-3">°</tspan></text>
<text transform="translate(511.23,330.20) scale(1.055,1)">+120<tspan font-size="6.5" dx="1.8" dy="-3">°</tspan></text>
<text transform="translate(609.04,330.20) scale(1.055,1)">+90<tspan font-size="6.5" dx="1.8" dy="-3">°</tspan></text>
<text transform="translate(706.84,330.20) scale(1.055,1)">+60<tspan font-size="6.5" dx="1.8" dy="-3">°</tspan></text>
<text transform="translate(804.65,330.20) scale(1.055,1)">+30<tspan font-size="6.5" dx="1.8" dy="-3">°</tspan></text>
<text transform="translate(902.45,330.20) scale(1.055,1)">+0<tspan font-size="6.5" dx="1.8" dy="-3">°</tspan></text>
<text transform="translate(1000.25,330.20) scale(1.055,1)">+330<tspan font-size="6.5" dx="1.8" dy="-3">°</tspan></text>
<text transform="translate(1098.06,330.20) scale(1.055,1)">+300<tspan font-size="6.5" dx="1.8" dy="-3">°</tspan></text>
<text transform="translate(1195.86,330.20) scale(1.055,1)">+270<tspan font-size="6.5" dx="1.8" dy="-3">°</tspan></text>
<text transform="translate(1293.67,330.20) scale(1.055,1)">+240<tspan font-size="6.5" dx="1.8" dy="-3">°</tspan></text>
<text transform="translate(1391.47,330.20) scale(1.055,1)">+210<tspan font-size="6.5" dx="1.8" dy="-3">°</tspan></text>
<text transform="translate(1489.27,330.20) scale(1.055,1)">+180<tspan font-size="6.5" dx="1.8" dy="-3">°</tspan></text>
<text transform="translate(902.65,25.00) scale(1.055,1)">+90<tspan font-size="6.5" dx="1.8" dy="-3">°</tspan></text>
<text transform="translate(902.65,123.20) scale(1.055,1)">+60<tspan font-size="6.5" dx="1.8" dy="-3">°</tspan></text>
<text transform="translate(902.65,220.60) scale(1.055,1)">+30<tspan font-size="6.5" dx="1.8" dy="-3">°</tspan></text>
<text transform="translate(902.65,428.00) scale(1.055,1)">−30<tspan font-size="6.5" dx="1.8" dy="-3">°</tspan></text>
<text transform="translate(902.65,526.20) scale(1.055,1)">−60<tspan font-size="6.5" dx="1.8" dy="-3">°</tspan></text>
<text transform="translate(902.65,624.00) scale(1.055,1)">−90<tspan font-size="6.5" dx="1.8" dy="-3">°</tspan></text>
</g>
<polyline points="663.69,105.39 663.26,105.58 662.83,105.76 662.40,105.95 661.98,106.13 661.56,106.32 661.15,106.50 660.74,106.69 660.33,106.87 659.93,107.05 659.53,107.23 659.14,107.41 658.75,107.59 658.36,107.77 657.98,107.95 657.61,108.12 657.23,108.30 656.87,108.47 656.50,108.65 656.14,108.82 655.79,108.99 655.44,109.16 655.09,109.33 654.75,109.50 654.41,109.67 654.07,109.84 653.75,110.00 653.42,110.17 653.10,110.33 652.78,110.50 652.47,110.66 652.16,110.82 651.86,110.98 651.56,111.14 651.27,111.30 650.97,111.46 650.69,111.61 650.41,111.77 650.13,111.92 649.86,112.08 649.59,112.23 649.32,112.38 649.06,112.53 648.81,112.68 648.56,112.83 648.31,112.97 648.07,113.12 647.83,113.26 647.60,113.41 647.37,113.55 647.15,113.69 646.93,113.83 646.71,113.97 646.50,114.11 646.29,114.24 646.09,114.38 645.89,114.51 645.70,114.65 645.51,114.78 645.32,114.91 645.14,115.04 644.97,115.17 644.80,115.30 644.63,115.42 644.47,115.55 644.31,115.67 644.15,115.79 644.01,115.92 643.86,116.04 643.72,116.16 643.58,116.27 643.45,116.39 643.32,116.51 643.20,116.62 643.08,116.73 642.97,116.84 642.86,116.95 642.75,117.06 642.65,117.17 642.55,117.28 642.46,117.38 642.37,117.49 642.29,117.59 642.21,117.69 642.13,117.79 642.06,117.89 641.99,117.99 641.93,118.09 641.87,118.18 641.82,118.28 641.77,118.37 641.72,118.46 641.68,118.55 641.64,118.64 641.61,118.73 641.58,118.81 641.56,118.90 641.54,118.98 641.52,119.06 641.51,119.14 641.50,119.22 641.50,119.30 641.50,119.38 641.50,119.46 641.51,119.53 641.52,119.60 641.54,119.67 641.56,119.74 641.59,119.81 641.62,119.88 641.65,119.95 641.69,120.01 641.73,120.07 641.78,120.14 641.83,120.20 641.88,120.26 641.94,120.31 642.00,120.37 642.06,120.43 642.13,120.48 642.21,120.53 642.29,120.58 642.37,120.63 642.45,120.68 642.54,120.73 642.64,120.77 642.73,120.82 642.84,120.86 642.94,120.90 643.05,120.94 643.16,120.98 643.28,121.02 643.40,121.05 643.53,121.09 643.65,121.12 643.79,121.15 643.92,121.18 644.06,121.21 644.20,121.24 644.35,121.27 644.50,121.29 644.66,121.31 644.82,121.34 644.98,121.36 645.14,121.38 645.31,121.39 645.49,121.41 645.66,121.42 645.84,121.44 646.03,121.45 646.21,121.46 646.40,121.47 646.60,121.48 646.80,121.48 647.00,121.49 647.20,121.49 647.41,121.49 647.62,121.50 647.84,121.49 648.06,121.49 648.28,121.49 648.51,121.48 648.74,121.48 648.97,121.47 649.20,121.46 649.44,121.45 649.69,121.44 649.93,121.42 650.18,121.41 650.44,121.39 650.69,121.38 650.95,121.36 651.21,121.34 651.48,121.31 651.75,121.29 652.02,121.27 652.30,121.24 652.57,121.21 652.86,121.18 653.14,121.15 653.43,121.12 653.72,121.09 654.01,121.05 654.31,121.02 654.61,120.98 654.91,120.94 655.22,120.90 655.53,120.86 655.84,120.82 656.16,120.77 656.48,120.73 656.80,120.68 657.12,120.63 657.45,120.58 657.78,120.53 658.11,120.48 658.45,120.43 658.78,120.37 659.12,120.31 659.47,120.26 659.82,120.20 660.17,120.14 660.52,120.07 660.87,120.01 661.23,119.95 661.59,119.88 661.95,119.81 662.32,119.74 662.69,119.67 663.06,119.60 663.43,119.53 663.81,119.46 664.19,119.38 664.57,119.30 664.95,119.22 665.34,119.14 665.73,119.06 666.12,118.98 666.51,118.90 666.91,118.81 667.30,118.73 667.71,118.64 668.11,118.55 668.51,118.46 668.92,118.37 669.33,118.28 669.74,118.18 670.16,118.09 670.58,117.99 670.99,117.89 671.42,117.79 671.84,117.69 672.26,117.59 672.69,117.49 673.12,117.38 673.55,117.28 673.99,117.17 674.43,117.06 674.86,116.95 675.30,116.84 675.75,116.73 676.19,116.62 676.64,116.51 677.08,116.39 677.54,116.27 677.99,116.16 678.44,116.04 678.90,115.92 679.35,115.79 679.81,115.67 680.28,115.55 680.74,115.42 681.20,115.30 681.67,115.17 682.14,115.04 682.61,114.91 683.08,114.78 683.55,114.65 684.03,114.51 684.50,114.38 684.98,114.24 685.46,114.11 685.94,113.97 686.43,113.83 686.91,113.69 687.40,113.55 687.88,113.41 688.37,113.26 688.86,113.12 689.36,112.97 689.85,112.83 690.34,112.68 690.84,112.53 691.33,112.38 691.83,112.23 692.33,112.08 692.83,111.92 693.34,111.77 693.84,111.61 694.34,111.46 694.85,111.30 695.35,111.14 695.86,110.98 696.37,110.82 696.88,110.66 697.39,110.50 697.90,110.33 698.42,110.17 698.93,110.00 699.44,109.84 699.96,109.67 700.48,109.50 700.99,109.33 701.51,109.16 702.03,108.99 702.55,108.82 703.07,108.65 703.59,108.47 704.12,108.30 704.64,108.12 705.16,107.95 705.69,107.77 706.21,107.59 706.74,107.41 707.26,107.23 707.79,107.05 708.32,106.87 708.84,106.69 709.37,106.50 709.90,106.32 710.43,106.13 710.96,105.95 711.49,105.76 712.02,105.58 712.55,105.39 713.08,105.20 713.61,105.01 714.14,104.82 714.67,104.63 715.20,104.44 715.74,104.24 716.27,104.05 716.80,103.86 717.33,103.66 717.86,103.47 718.40,103.27 718.93,103.07 719.46,102.88 719.99,102.68 720.52,102.48 721.06,102.28 721.59,102.08 722.12,101.88 722.65,101.68 723.18,101.48 723.71,101.28 724.24,101.08 724.77,100.87 725.30,100.67 725.83,100.46 726.36,100.26 726.89,100.06 727.42,99.85 727.95,99.64 728.47,99.44 729.00,99.23 729.53,99.02 730.05,98.81 730.58,98.61 731.10,98.40 731.62,98.19 732.15,97.98 732.67,97.77 733.19,97.56 733.71,97.35 734.23,97.14 734.75,96.93 735.27,96.72 735.78,96.50 736.30,96.29 736.81,96.08 737.33,95.87 737.84,95.66 738.35,95.44 738.86,95.23 739.37,95.02 739.88,94.80 740.38,94.59 740.89,94.38 741.39,94.16 741.90,93.95 742.40,93.73 742.90,93.52 743.39,93.31 743.89,93.09 744.39,92.88 744.88,92.66 745.37,92.45 745.86,92.23 746.35,92.02 746.84,91.80 747.32,91.59 747.81,91.38 748.29,91.16 748.77,90.95 749.24,90.73 749.72,90.52 750.19,90.31 750.66,90.09 751.13,89.88 751.60,89.67 752.07,89.46 752.53,89.24 752.99,89.03 753.45,88.82 753.90,88.61 754.36,88.40 754.81,88.19 755.26,87.98 755.70,87.76 756.15,87.56 756.59,87.35 757.02,87.14 757.46,86.93 757.89,86.72 758.32,86.51 758.75,86.31 759.17,86.10 759.60,85.89 760.01,85.69 760.43,85.48 760.84,85.28 761.25,85.08 761.66,84.87 762.06,84.67 762.46,84.47 762.86,84.27 763.25,84.07 763.64,83.87 764.02,83.67 764.41,83.48 764.78,83.28 765.16,83.09 765.53,82.89 765.90,82.70 766.26,82.50 766.62,82.31 766.98,82.12 767.33,81.93 767.68,81.74 768.02,81.56 768.36,81.37 768.70,81.18 769.03,81.00 769.36,80.82 769.68,80.63 770.00,80.45 770.32,80.27 770.63,80.10 770.93,79.92 771.23,79.74 771.53,79.57 771.82,79.40 772.11,79.23 772.39,79.06 772.67,78.89 772.94,78.72 773.20,78.56 773.47,78.39 773.72,78.23 773.97,78.07 774.22,77.91 774.46,77.75 774.70,77.60 774.93,77.44 775.15,77.29 775.37,77.14 775.58,76.99 775.79,76.84 775.99,76.70 776.19,76.56 776.38,76.41 776.56,76.27 776.74,76.14 776.92,76.00 777.08,75.87 777.24,75.74 777.40,75.61 777.54,75.48 777.69,75.35 777.82,75.23 777.95,75.11 778.07,74.99 778.19,74.87 778.30,74.76 778.40,74.65 778.50,74.54 778.58,74.43 778.67,74.32 778.74,74.22 778.81,74.12 778.87,74.02 778.93,73.93 778.97,73.83 779.02,73.74 779.05,73.65 779.07,73.57 779.09,73.48 779.11,73.40 779.11,73.33 779.11,73.25 779.10,73.18 779.08,73.11 779.05,73.04 779.02,72.97 778.98,72.91 778.93,72.85 778.88,72.79 778.82,72.74 778.75,72.69 778.67,72.64 778.58,72.59 778.49,72.55 778.39,72.51 778.28,72.47 778.16,72.43 778.04,72.40 777.91,72.37 777.77,72.34 777.62,72.32 777.46,72.30 777.30,72.28 777.13,72.26 776.95,72.25 776.76,72.24 776.57,72.23 776.37,72.23 776.16,72.23 776.16,72.23 775.94,72.23 775.71,72.23 775.48,72.24 775.24,72.25 774.99,72.26 774.74,72.28 774.47,72.30 774.20,72.32 773.92,72.34 773.63,72.37 773.34,72.40 773.04,72.43 772.73,72.47 772.41,72.51 772.09,72.55 771.76,72.59 771.42,72.64 771.07,72.69 770.72,72.74 770.36,72.79 769.99,72.85 769.62,72.91 769.23,72.97 768.85,73.04 768.45,73.11 768.05,73.18 767.64,73.25 767.22,73.33 766.80,73.40 766.37,73.48 765.94,73.57 765.49,73.65 765.04,73.74 764.59,73.83 764.13,73.93 763.66,74.02 763.19,74.12 762.71,74.22 762.22,74.32 761.73,74.43 761.24,74.54 760.74,74.65 760.23,74.76 759.71,74.87 759.20,74.99 758.67,75.11 758.14,75.23 757.61,75.35 757.07,75.48 756.52,75.61 755.97,75.74 755.42,75.87 754.86,76.00 754.30,76.14 753.73,76.27 753.16,76.41 752.58,76.56 752.00,76.70 751.41,76.84 750.82,76.99 750.23,77.14 749.63,77.29 749.03,77.44 748.43,77.60 747.82,77.75 747.21,77.91 746.59,78.07 745.97,78.23 745.35,78.39 744.73,78.56 744.10,78.72 743.47,78.89 742.84,79.06 742.20,79.23 741.56,79.40 740.92,79.57 740.27,79.74 739.63,79.92 738.98,80.10 738.33,80.27 737.67,80.45 737.02,80.63 736.36,80.82 735.70,81.00 735.04,81.18 734.38,81.37 733.72,81.56 733.05,81.74 732.38,81.93" fill="none" stroke="#00dcff" stroke-width="2.1" stroke-linecap="butt"/>
<polyline points="720.5,94.8 745.6,80.0" fill="none" stroke="#00dcff" stroke-width="1.5" stroke-dasharray="1.5 2.2"/>
<text x="709.6" y="99.8" font-family="Liberation Sans, sans-serif" font-size="10.4" fill="#f4f4f4" text-anchor="middle">SLD</text>
<path d="M716.3 95.6h6M719.3 92.6v6" stroke="#ff1010" stroke-width="1"/>
<polyline points="1045,72.6 1027,68.2 1008.9,65.3 990,64.7 986.9,67.7 988.1,74.4 993,81.8 997.9,89.1" fill="none" stroke="#00dcff" stroke-width="1.5" stroke-dasharray="1.5 2.2"/>
<circle cx="997.9" cy="89.1" r="1.3" fill="#f06040"/>
<line x1="1079.2" y1="85.0" x2="1135.4" y2="104.1" stroke="#00dcff" stroke-width="2.2"/>
<line x1="901.7" y1="58.9" x2="982.6" y2="137.7" stroke="#808080" stroke-width="0.8" stroke-dasharray="0.8 2.4"/>
<line x1="982.6" y1="138" x2="995.5" y2="152" stroke="#a0a0a0" stroke-width="1.2"/>
<polyline points="522,276 604,204 700,142 760,108 820,80 870,64 901,58" fill="none" stroke="#808080" stroke-width="0.8" stroke-dasharray="0.8 2.4"/>
<circle cx="738.7" cy="320.2" r="25" fill="none" stroke="#ee82ee" stroke-width="2"/>
<polyline points="740.5,320.8 747.2,315 776,292 805.8,270.7 830,253 856.8,236.7 880,223 904,211.2 925,203.5 945.6,198 965,193.6 983.3,190.4 996.6,189" fill="none" stroke="#ee82ee" stroke-width="1.4" stroke-dasharray="1.4 2.2"/>
<polyline points="996.6,189 1005,189.1 1013.6,189.8" fill="none" stroke="#ee82ee" stroke-width="1.6"/>
<circle cx="1013.6" cy="189.8" r="1.2" fill="#f06040"/>
<text x="737.8" y="323.2" font-family="Liberation Sans, sans-serif" font-size="10.4" fill="#f4f4f4" text-anchor="middle">OER</text>
<path d="M736.7 321.3h6M739.7 318.3v6" stroke="#ff1010" stroke-width="1"/>
<g font-family="Liberation Mono, monospace" font-size="13.9" fill="#f2f2f2" xml:space="preserve">
<text x="316.8" y="30.1">NL000M</text>
<text x="316.8" y="42.9">Beg: 20251103 22:18:36 (sol = 221.40°)</text>
<text x="316.8" y="56.9">End: 20251103 23:11:58 (sol = 221.43°)</text>
<text x="316.8" y="68.9">--------------------------------------</text>
<text x="316.8" y="81.4">...: 1</text>
<text x="316.8" y="95.0">OER: 1</text>
<text x="316.8" y="108.0">SLD: 1</text>
</g>
<g stroke="#6a6a6a" stroke-width="2" stroke-dasharray="2 3.4">
<line x1="75" y1="641.4" x2="75" y2="842.3"/>
<line x1="219.25" y1="641.4" x2="219.25" y2="842.3"/>
<line x1="365" y1="641.4" x2="365" y2="842.3"/>
<line x1="506" y1="641.4" x2="506" y2="842.3"/>
<line x1="651" y1="641.4" x2="651" y2="842.3"/>
<line x1="797" y1="641.4" x2="797" y2="842.3"/>
<line x1="940" y1="641.4" x2="940" y2="842.3"/>
<line x1="1091" y1="641.4" x2="1091" y2="842.3"/>
<line x1="1239" y1="641.4" x2="1239" y2="842.3"/>
<line x1="1394" y1="641.4" x2="1394" y2="842.3"/>
<line x1="1548" y1="641.4" x2="1548" y2="842.3"/>
<line x1="1687" y1="641.4" x2="1687" y2="842.3"/>
</g>
<g font-family="Liberation Sans, sans-serif" fill="#555555">
<text transform="translate(149.10,696.80) rotate(-90) scale(0.8674,1)" x="-0.00" y="0" font-size="30.29">APR</text>
<text transform="translate(295.00,699.60) rotate(-90) scale(0.9068,1)" x="-2.41" y="0" font-size="30.14">MAY</text>
<text transform="translate(436.40,687.40) rotate(-90) scale(0.7912,1)" x="-0.31" y="0" font-size="30.58">JUN</text>
<text transform="translate(577.40,685.70) rotate(-90) scale(0.8608,1)" x="-0.30" y="0" font-size="29.71">JUL</text>
<text transform="translate(725.40,699.60) rotate(-90) scale(0.8525,1)" x="-0.00" y="0" font-size="31.00">AUG</text>
<text transform="translate(872.80,693.20) rotate(-90) scale(0.8197,1)" x="-1.56" y="0" font-size="31.14">SEP</text>
<text transform="translate(1017.80,699.00) rotate(-90) scale(0.8824,1)" x="-1.55" y="0" font-size="31.00">OCT</text>
<text transform="translate(1170.40,701.90) rotate(-90) scale(0.9043,1)" x="-2.41" y="0" font-size="30.14">NOV</text>
<text transform="translate(1319.80,699.00) rotate(-90) scale(0.8713,1)" x="-2.47" y="0" font-size="30.86">DEC</text>
<text transform="translate(1469.20,688.60) rotate(-90) scale(0.8514,1)" x="-0.30" y="0" font-size="30.14">JAN</text>
<text transform="translate(1628.00,694.30) rotate(-90) scale(0.8492,1)" x="-2.45" y="0" font-size="30.58">FEB</text>
<text transform="translate(1766.00,703.30) rotate(-90) scale(0.9203,1)" x="-2.40" y="0" font-size="30.00">MAR</text>
</g>
<rect x="106.25" y="832.00" width="23.75" height="4" fill="#f08cf0"/>
<rect x="165" y="832.00" width="180.00" height="4" fill="#f08cf0"/>
<rect x="366" y="832.00" width="259.00" height="4" fill="#f08cf0"/>
<rect x="636.25" y="832.00" width="150.75" height="4" fill="#f08cf0"/>
<rect x="807" y="832.00" width="93.00" height="4" fill="#f08cf0"/>
<rect x="920" y="832.00" width="53.00" height="4" fill="#f08cf0"/>
<rect x="984" y="832.00" width="82.00" height="4" fill="#f08cf0"/>
<rect x="1082" y="832.00" width="122.00" height="4" fill="#f08cf0"/>
<rect x="1244" y="832.00" width="82.00" height="4" fill="#f08cf0"/>
<rect x="1337" y="832.00" width="19.00" height="4" fill="#f08cf0"/>
<rect x="1381" y="832.00" width="63.00" height="4" fill="#f08cf0"/>
<rect x="1459" y="832.00" width="53.00" height="4" fill="#f08cf0"/>
<rect x="1523" y="832.00" width="24.00" height="4" fill="#f08cf0"/>
<rect x="1724" y="832.00" width="24.00" height="4" fill="#f08cf0"/>
<rect x="1758" y="832.00" width="24.00" height="4" fill="#f08cf0"/>
<rect x="165" y="816.00" width="24.00" height="4" fill="#dc14fa"/>
<rect x="224.25" y="816.00" width="62.75" height="4" fill="#dc14fa"/>
<rect x="312" y="816.00" width="29.00" height="4" fill="#dc14fa"/>
<rect x="366" y="816.00" width="127.00" height="4" fill="#dc14fa"/>
<rect x="508" y="816.00" width="146.00" height="4" fill="#dc14fa"/>
<rect x="704.25" y="816.00" width="33.75" height="4" fill="#dc14fa"/>
<rect x="773" y="816.00" width="73.00" height="4" fill="#dc14fa"/>
<rect x="871" y="816.00" width="117.00" height="4" fill="#dc14fa"/>
<rect x="1003" y="816.00" width="14.00" height="4" fill="#dc14fa"/>
<rect x="1062" y="816.00" width="151.00" height="4" fill="#dc14fa"/>
<rect x="1244" y="816.00" width="23.00" height="4" fill="#dc14fa"/>
<rect x="1293" y="816.00" width="23.00" height="4" fill="#dc14fa"/>
<rect x="1342" y="816.00" width="23.00" height="4" fill="#dc14fa"/>
<rect x="1386" y="816.00" width="43.00" height="4" fill="#dc14fa"/>
<rect x="1459" y="816.00" width="24.00" height="4" fill="#dc14fa"/>
<rect x="1548" y="816.00" width="23.00" height="4" fill="#dc14fa"/>
<rect x="165" y="800.00" width="24.00" height="4" fill="#ff1e00"/>
<rect x="258" y="800.00" width="230.00" height="4" fill="#ff1e00"/>
<rect x="508" y="800.00" width="107.00" height="4" fill="#ff1e00"/>
<rect x="626" y="800.00" width="92.00" height="4" fill="#ff1e00"/>
<rect x="729" y="800.00" width="97.00" height="4" fill="#ff1e00"/>
<rect x="949" y="800.00" width="201.00" height="4" fill="#ff1e00"/>
<rect x="1160" y="800.00" width="88.00" height="4" fill="#ff1e00"/>
<rect x="1258" y="800.00" width="186.00" height="4" fill="#ff1e00"/>
<rect x="1459" y="800.00" width="24.00" height="4" fill="#ff1e00"/>
<rect x="1553" y="800.00" width="23.00" height="4" fill="#ff1e00"/>
<rect x="194.25" y="783.00" width="23.75" height="4" fill="#ffaa14"/>
<rect x="322" y="783.00" width="185.00" height="4" fill="#ffaa14"/>
<rect x="518" y="783.00" width="24.00" height="4" fill="#ffaa14"/>
<rect x="557" y="783.00" width="127.00" height="4" fill="#ffaa14"/>
<rect x="807" y="783.00" width="24.00" height="4" fill="#ffaa14"/>
<rect x="954" y="783.00" width="19.00" height="4" fill="#ffaa14"/>
<rect x="989" y="783.00" width="136.00" height="4" fill="#ffaa14"/>
<rect x="1155" y="783.00" width="63.00" height="4" fill="#ffaa14"/>
<rect x="1244" y="783.00" width="23.00" height="4" fill="#ffaa14"/>
<rect x="1317" y="783.00" width="24.00" height="4" fill="#ffaa14"/>
<rect x="1396" y="783.00" width="23.00" height="4" fill="#ffaa14"/>
<rect x="1464" y="783.00" width="186.00" height="4" fill="#ffaa14"/>
<rect x="341" y="767.00" width="29.00" height="4" fill="#ffeb00"/>
<rect x="410" y="767.00" width="38.00" height="4" fill="#ffeb00"/>
<rect x="469" y="767.00" width="24.00" height="4" fill="#ffeb00"/>
<rect x="528" y="767.00" width="18.00" height="4" fill="#ffeb00"/>
<rect x="562" y="767.00" width="29.00" height="4" fill="#ffeb00"/>
<rect x="616" y="767.00" width="33.00" height="4" fill="#ffeb00"/>
<rect x="959" y="767.00" width="29.00" height="4" fill="#ffeb00"/>
<rect x="1062" y="767.00" width="24.00" height="4" fill="#ffeb00"/>
<rect x="1101" y="767.00" width="24.00" height="4" fill="#ffeb00"/>
<rect x="1160" y="767.00" width="34.00" height="4" fill="#ffeb00"/>
<rect x="1249" y="767.00" width="23.00" height="4" fill="#ffeb00"/>
<rect x="1425" y="767.00" width="87.00" height="4" fill="#ffeb00"/>
<rect x="420" y="750.00" width="24.00" height="4" fill="#aaf028"/>
<rect x="533" y="750.00" width="23.00" height="4" fill="#aaf028"/>
<rect x="567" y="750.00" width="24.00" height="4" fill="#aaf028"/>
<rect x="621" y="750.00" width="122.00" height="4" fill="#aaf028"/>
<rect x="969" y="750.00" width="166.00" height="4" fill="#aaf028"/>
<rect x="1185" y="750.00" width="161.00" height="4" fill="#aaf028"/>
<rect x="1469" y="750.00" width="24.00" height="4" fill="#aaf028"/>
<rect x="430" y="734.00" width="23.00" height="4" fill="#50d200"/>
<rect x="577" y="734.00" width="156.00" height="4" fill="#50d200"/>
<rect x="994" y="734.00" width="111.00" height="4" fill="#50d200"/>
<rect x="1116" y="734.00" width="107.00" height="4" fill="#50d200"/>
<rect x="1263" y="734.00" width="29.00" height="4" fill="#50d200"/>
<rect x="1489" y="734.00" width="23.00" height="4" fill="#50d200"/>
<rect x="592" y="718.00" width="23.00" height="4" fill="#00f07c"/>
<rect x="655" y="718.00" width="117.00" height="4" fill="#00f07c"/>
<rect x="1072" y="718.00" width="171.00" height="4" fill="#00f07c"/>
<rect x="1263" y="718.00" width="24.00" height="4" fill="#00f07c"/>
<rect x="596" y="701.00" width="137.00" height="4" fill="#00dcff"/>
<rect x="1092" y="701.00" width="28.00" height="4" fill="#00dcff"/>
<rect x="1200" y="701.00" width="23.00" height="4" fill="#00dcff"/>
<rect x="1273" y="701.00" width="53.00" height="4" fill="#00dcff"/>
<rect x="1111" y="685.00" width="24.00" height="4" fill="#000cdc"/>
<line x1="1106" y1="642.4" x2="1106" y2="842.3" stroke="#ff0000" stroke-width="2.2" stroke-dasharray="5 2.33" stroke-dashoffset="2.73"/>
<g stroke="#ffffff" stroke-width="2">
<path d="M114.00 834.00h8M118.00 830.00v8"/>
<path d="M241.00 834.00h8M245.00 830.00v8"/>
<path d="M511.00 834.00h8M515.00 830.00v8"/>
<path d="M706.75 834.00h8M710.75 830.00v8"/>
<path d="M834.00 834.00h8M838.00 830.00v8"/>
<path d="M962.00 834.00h8M966.00 830.00v8"/>
<path d="M987.00 834.00h8M991.00 830.00v8"/>
<path d="M1117.00 834.00h8M1121.00 830.00v8"/>
<path d="M1296.00 834.00h8M1300.00 830.00v8"/>
<path d="M1342.00 834.00h8M1346.00 830.00v8"/>
<path d="M1413.00 834.00h8M1417.00 830.00v8"/>
<path d="M1482.00 834.00h8M1486.00 830.00v8"/>
<path d="M1531.00 834.00h8M1535.00 830.00v8"/>
<path d="M1732.00 834.00h8M1736.00 830.00v8"/>
<path d="M1766.00 834.00h8M1770.00 830.00v8"/>
<path d="M173.00 818.00h8M177.00 814.00v8"/>
<path d="M256.00 818.00h8M260.00 814.00v8"/>
<path d="M324.00 818.00h8M328.00 814.00v8"/>
<path d="M438.00 818.00h8M442.00 814.00v8"/>
<path d="M599.00 818.00h8M603.00 814.00v8"/>
<path d="M716.75 818.00h8M720.75 814.00v8"/>
<path d="M794.00 818.00h8M798.00 814.00v8"/>
<path d="M940.00 818.00h8M944.00 814.00v8"/>
<path d="M1006.00 818.00h8M1010.00 814.00v8"/>
<path d="M1153.00 818.00h8M1157.00 814.00v8"/>
<path d="M1251.00 818.00h8M1255.00 814.00v8"/>
<path d="M1300.00 818.00h8M1304.00 814.00v8"/>
<path d="M1350.00 818.00h8M1354.00 814.00v8"/>
<path d="M1403.00 818.00h8M1407.00 814.00v8"/>
<path d="M1467.00 818.00h8M1471.00 814.00v8"/>
<path d="M1555.00 818.00h8M1559.00 814.00v8"/>
<path d="M175.00 802.00h8M179.00 798.00v8"/>
<path d="M379.00 802.00h8M383.00 798.00v8"/>
<path d="M545.00 802.00h8M549.00 798.00v8"/>
<path d="M683.00 802.00h8M687.00 798.00v8"/>
<path d="M741.75 802.00h8M745.75 798.00v8"/>
<path d="M1075.00 802.00h8M1079.00 798.00v8"/>
<path d="M1217.00 802.00h8M1221.00 798.00v8"/>
<path d="M1305.00 802.00h8M1309.00 798.00v8"/>
<path d="M1467.00 802.00h8M1471.00 798.00v8"/>
<path d="M1560.00 802.00h8M1564.00 798.00v8"/>
<path d="M201.50 785.00h8M205.50 781.00v8"/>
<path d="M401.00 785.00h8M405.00 781.00v8"/>
<path d="M526.00 785.00h8M530.00 781.00v8"/>
<path d="M639.00 785.00h8M643.00 781.00v8"/>
<path d="M814.75 785.00h8M818.75 781.00v8"/>
<path d="M960.00 785.00h8M964.00 781.00v8"/>
<path d="M1041.00 785.00h8M1045.00 781.00v8"/>
<path d="M1188.00 785.00h8M1192.00 781.00v8"/>
<path d="M1251.00 785.00h8M1255.00 781.00v8"/>
<path d="M1325.00 785.00h8M1329.00 781.00v8"/>
<path d="M1403.00 785.00h8M1407.00 781.00v8"/>
<path d="M1546.00 785.00h8M1550.00 781.00v8"/>
<path d="M356.00 769.00h8M360.00 765.00v8"/>
<path d="M427.00 769.00h8M431.00 765.00v8"/>
<path d="M477.00 769.00h8M481.00 765.00v8"/>
<path d="M536.00 769.00h8M540.00 765.00v8"/>
<path d="M571.00 769.00h8M575.00 765.00v8"/>
<path d="M631.00 769.00h8M635.00 765.00v8"/>
<path d="M974.00 769.00h8M978.00 765.00v8"/>
<path d="M1070.00 769.00h8M1074.00 765.00v8"/>
<path d="M1109.00 769.00h8M1113.00 765.00v8"/>
<path d="M1178.00 769.00h8M1182.00 765.00v8"/>
<path d="M1256.00 769.00h8M1260.00 765.00v8"/>
<path d="M1467.00 769.00h8M1471.00 765.00v8"/>
<path d="M428.00 752.00h8M432.00 748.00v8"/>
<path d="M540.00 752.00h8M544.00 748.00v8"/>
<path d="M575.00 752.00h8M579.00 748.00v8"/>
<path d="M704.00 752.00h8M708.00 748.00v8"/>
<path d="M1095.00 752.00h8M1099.00 748.00v8"/>
<path d="M1271.00 752.00h8M1275.00 748.00v8"/>
<path d="M1477.00 752.00h8M1481.00 748.00v8"/>
<path d="M438.00 736.00h8M442.00 732.00v8"/>
<path d="M631.00 736.00h8M635.00 732.00v8"/>
<path d="M1039.00 736.00h8M1043.00 732.00v8"/>
<path d="M1168.00 736.00h8M1172.00 732.00v8"/>
<path d="M1275.00 736.00h8M1279.00 732.00v8"/>
<path d="M1497.00 736.00h8M1501.00 732.00v8"/>
<path d="M599.00 720.00h8M603.00 716.00v8"/>
<path d="M727.00 720.00h8M731.00 716.00v8"/>
<path d="M1188.00 720.00h8M1192.00 716.00v8"/>
<path d="M1271.00 720.00h8M1275.00 716.00v8"/>
<path d="M688.00 703.00h8M692.00 699.00v8"/>
<path d="M1102.00 703.00h8M1106.00 699.00v8"/>
<path d="M1207.00 703.00h8M1211.00 699.00v8"/>
<path d="M1300.00 703.00h8M1304.00 699.00v8"/>
<path d="M1119.00 687.00h8M1123.00 683.00v8"/>
</g>
<g font-family="Liberation Sans, sans-serif" font-size="10.2" fill="#ffffff" text-anchor="middle">
<text x="117.25" y="831.10">KSE</text>
<text x="254.40" y="831.10">ETA</text>
<text x="495.40" y="831.10">NZC</text>
<text x="710.75" y="831.10">NDA</text>
<text x="853.75" y="831.10">SPE</text>
<text x="946.25" y="831.10">ARD</text>
<text x="1024.75" y="831.10">EGE</text>
<text x="1142.50" y="831.10">NTA</text>
<text x="1285.00" y="831.10">MON</text>
<text x="1346.00" y="831.10">URS</text>
<text x="1411.90" y="831.10">AHY</text>
<text x="1485.60" y="831.10">GUM</text>
<text x="1535.40" y="831.10">OHY</text>
<text x="1736.25" y="831.10">XHE</text>
<text x="1769.40" y="831.10">EVI</text>
<text x="176.60" y="815.10">AVB</text>
<text x="254.60" y="815.10">ELY</text>
<text x="323.75" y="815.10">CAM</text>
<text x="431.90" y="815.10">SSG</text>
<text x="578.50" y="815.10">PCA</text>
<text x="720.75" y="815.10">AUD</text>
<text x="809.40" y="815.10">AUR</text>
<text x="931.25" y="815.10">DSX</text>
<text x="1010.75" y="815.10">OCU</text>
<text x="1138.10" y="815.10">OER</text>
<text x="1254.60" y="815.10">DKD</text>
<text x="1304.40" y="815.10">DSV</text>
<text x="1353.25" y="815.10">ALY</text>
<text x="1407.75" y="815.10">JLE</text>
<text x="1472.00" y="815.10">SCC</text>
<text x="1559.10" y="815.10">FEV</text>
<text x="176.25" y="799.10">LYR</text>
<text x="372.50" y="799.10">JMC</text>
<text x="558.75" y="799.10">JPE</text>
<text x="671.25" y="799.10">PAU</text>
<text x="774.25" y="799.10">NIA</text>
<text x="1049.60" y="799.10">STA</text>
<text x="1206.25" y="799.10">NOO</text>
<text x="1353.10" y="799.10">COM</text>
<text x="1470.75" y="799.10">NCC</text>
<text x="1564.50" y="799.10">FED</text>
<text x="206.25" y="782.10">HVI</text>
<text x="411.90" y="782.10">ARI</text>
<text x="529.75" y="782.10">SZC</text>
<text x="618.60" y="782.10">CAP</text>
<text x="818.10" y="782.10">NUE</text>
<text x="961.40" y="782.10">OCT</text>
<text x="1059.25" y="782.10">ORI</text>
<text x="1186.60" y="782.10">AMO</text>
<text x="1255.40" y="782.10">DPC</text>
<text x="1329.00" y="782.10">XVI</text>
<text x="1407.90" y="782.10">QUA</text>
<text x="1559.60" y="782.10">AAN</text>
<text x="353.10" y="766.10">TAH</text>
<text x="431.50" y="766.10">JEA</text>
<text x="481.25" y="766.10">JIP</text>
<text x="538.75" y="766.10">PPS</text>
<text x="578.75" y="766.10">ZCS</text>
<text x="632.90" y="766.10">GDR</text>
<text x="971.00" y="766.10">DRA</text>
<text x="1073.50" y="766.10">LUM</text>
<text x="1112.50" y="766.10">RPU</text>
<text x="1177.10" y="766.10">THA</text>
<text x="1259.50" y="766.10">PSU</text>
<text x="1470.90" y="766.10">XCB</text>
<text x="431.50" y="749.10">JRC</text>
<text x="544.25" y="749.10">CAN</text>
<text x="578.00" y="749.10">FAN</text>
<text x="681.25" y="749.10">PER</text>
<text x="1050.25" y="749.10">CTA</text>
<text x="1265.00" y="749.10">HYD</text>
<text x="1481.00" y="749.10">XUM</text>
<text x="441.50" y="733.10">COR</text>
<text x="658.10" y="733.10">SDA</text>
<text x="1048.75" y="733.10">LMI</text>
<text x="1166.60" y="733.10">LEO</text>
<text x="1274.75" y="733.10">EHY</text>
<text x="1500.90" y="733.10">ECV</text>
<text x="603.50" y="717.10">JXA</text>
<text x="715.90" y="717.10">KCG</text>
<text x="1156.75" y="717.10">AND</text>
<text x="1275.00" y="717.10">DAD</text>
<text x="666.60" y="700.10">ERI</text>
<text x="1108.75" y="700.10">SLD</text>
<text x="1211.50" y="700.10">ORS</text>
<text x="1300.00" y="700.10">GEM</text>
<text x="1122.90" y="684.10">KUM</text>
</g>
<rect x="20.45" y="641.55" width="1765.15" height="200.95" fill="none" stroke="#ffffff" stroke-width="1.4"/>
<g stroke="#ffffff" stroke-width="1">
<line x1="20.20" y1="842.3" x2="20.20" y2="847.5999999999999" stroke-width="1.3"/>
<line x1="265.34" y1="842.3" x2="265.34" y2="847.5999999999999" stroke-width="1.3"/>
<line x1="510.48" y1="842.3" x2="510.48" y2="847.5999999999999" stroke-width="1.3"/>
<line x1="755.62" y1="842.3" x2="755.62" y2="847.5999999999999" stroke-width="1.3"/>
<line x1="1000.76" y1="842.3" x2="1000.76" y2="847.5999999999999" stroke-width="1.3"/>
<line x1="1245.90" y1="842.3" x2="1245.90" y2="847.5999999999999" stroke-width="1.3"/>
<line x1="1491.04" y1="842.3" x2="1491.04" y2="847.5999999999999" stroke-width="1.3"/>
<line x1="1736.18" y1="842.3" x2="1736.18" y2="847.5999999999999" stroke-width="1.3"/>
</g>
<g font-family="Liberation Sans, sans-serif" font-size="14.2" fill="#ffffff" text-anchor="middle">
<text transform="translate(20.20,862) scale(1.10,1)">0</text>
<text transform="translate(265.34,862) scale(1.10,1)">50</text>
<text transform="translate(510.48,862) scale(1.10,1)">100</text>
<text transform="translate(755.62,862) scale(1.10,1)">150</text>
<text transform="translate(1000.76,862) scale(1.10,1)">200</text>
<text transform="translate(1245.90,862) scale(1.10,1)">250</text>
<text transform="translate(1491.04,862) scale(1.10,1)">300</text>
<text transform="translate(1736.18,862) scale(1.10,1)">350</text>
</g>
<text transform="translate(902.35,881.8) scale(1.16,1)" font-family="Liberation Sans, sans-serif" font-size="13.7" fill="#ffffff" text-anchor="middle">Solar longitude (deg)</text>
</svg></body></html>
